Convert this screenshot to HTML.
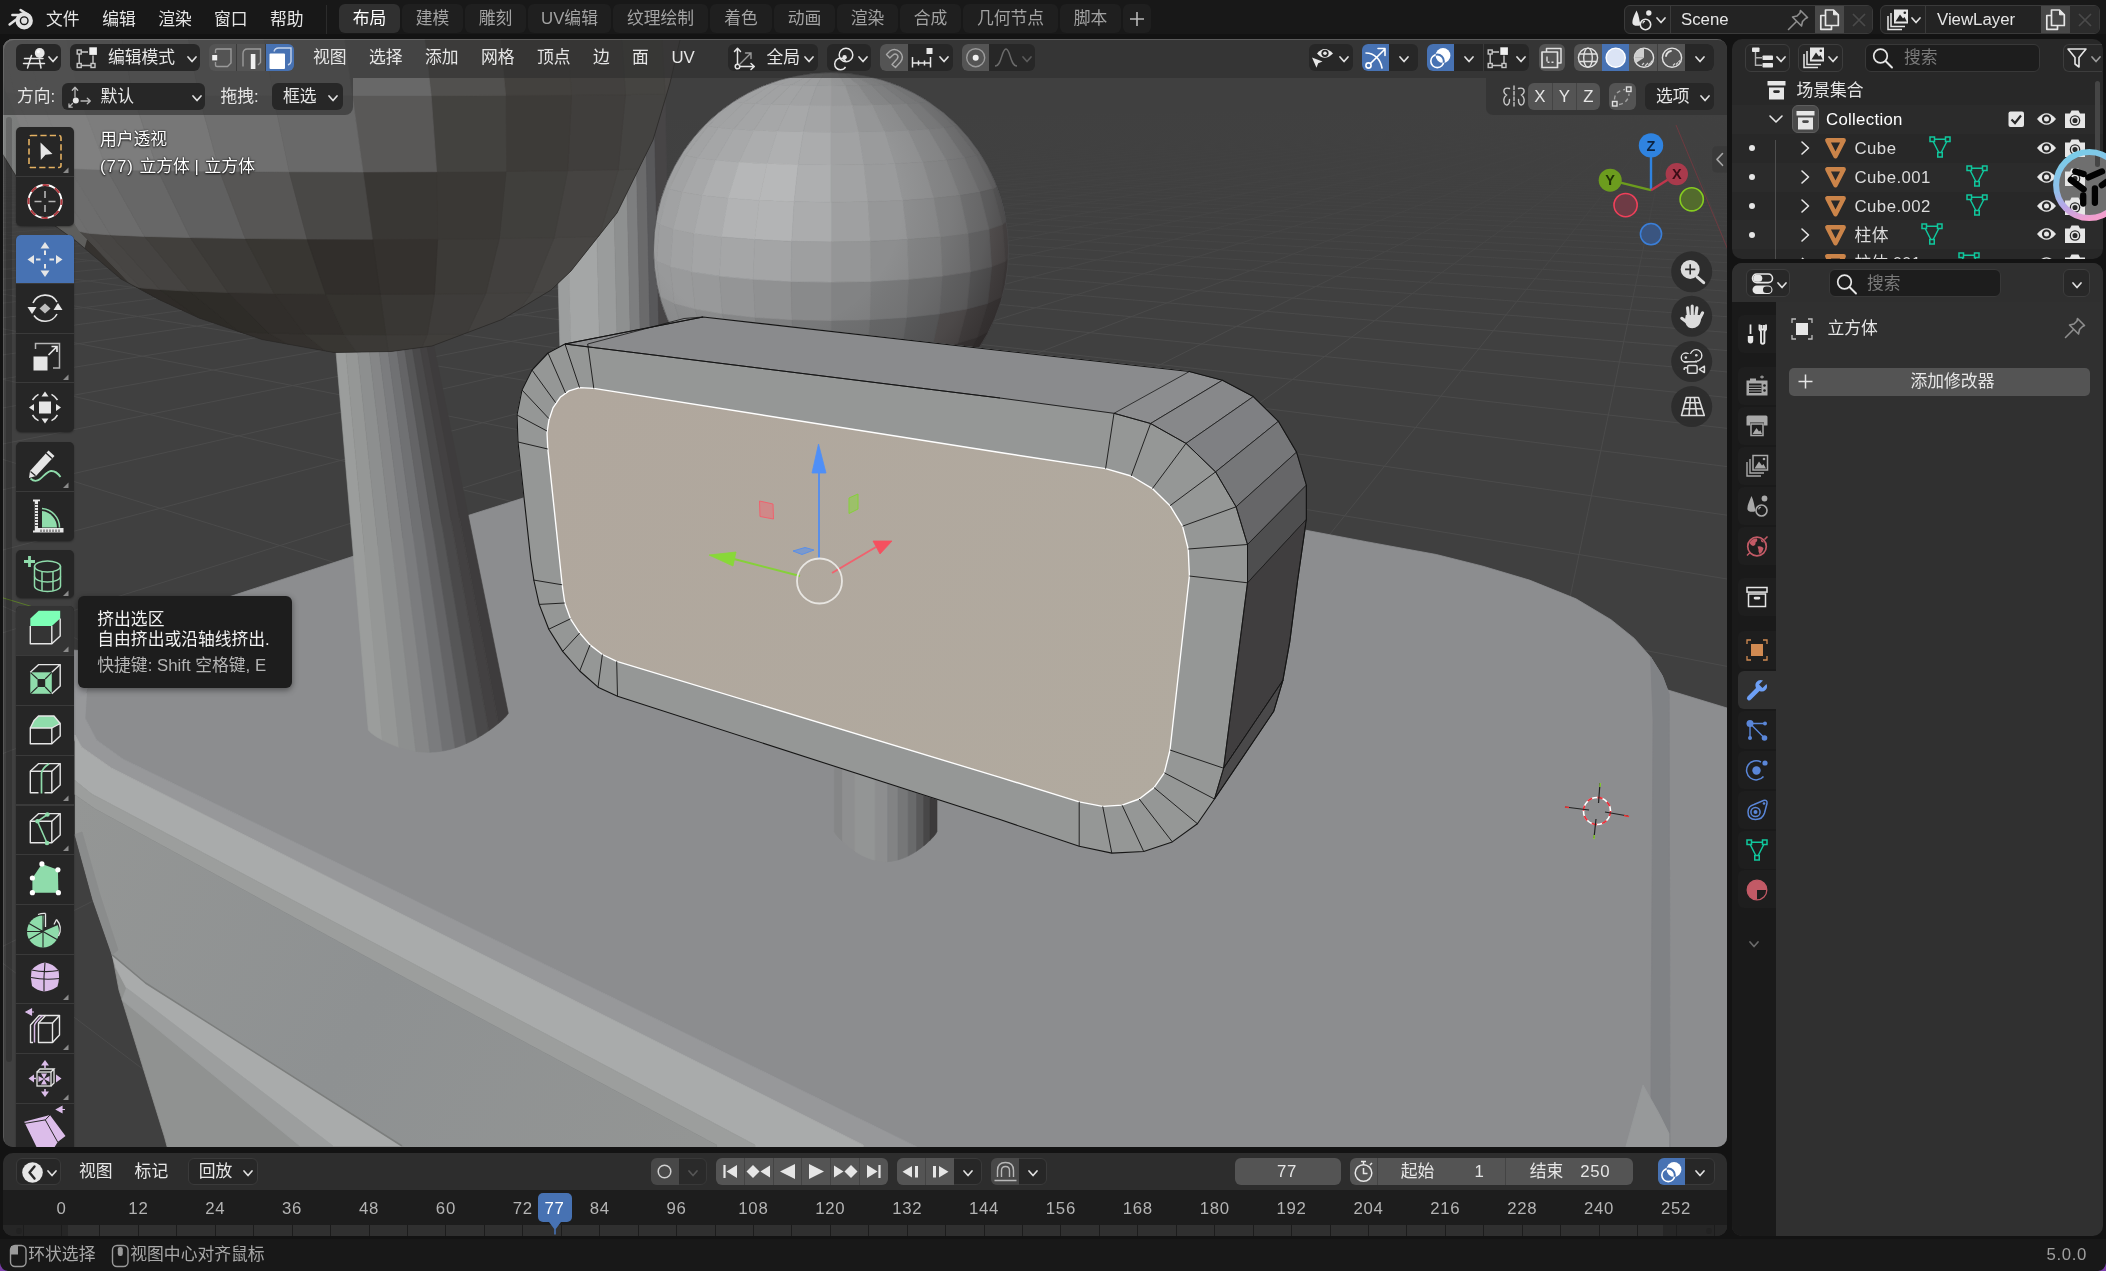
<!DOCTYPE html>
<html><head><meta charset="utf-8"><title>Blender</title>
<style>
html,body{margin:0;padding:0;background:#131313;width:2106px;height:1271px;overflow:hidden}
body{position:relative;font-family:"Liberation Sans","Noto Sans CJK SC",sans-serif;color:#e6e6e6;font-size:16.8px;line-height:1}
div,span{box-sizing:border-box}
#root{position:absolute;left:0;top:0;width:2106px;height:1271px;will-change:transform}
.abs{position:absolute}
.t{position:absolute;white-space:nowrap;line-height:20px;height:20px}
svg{display:block;overflow:visible}
#topbar{position:absolute;left:0;top:0;width:2106px;height:34px;background:#181818}
#topbar .m{position:absolute;top:9px;color:#e4e4e4}
.tab{position:absolute;top:4px;height:29px;border-radius:6px;background:#1f1f1f;color:#a2a2a2;text-align:center;line-height:30px}
.tab.on{background:#303030;color:#fff}
#v3d{position:absolute;left:3px;top:39px;width:1724px;height:1108px;border-radius:10px;overflow:hidden;background:#404040}
#v3d:after{content:'';position:absolute;left:0;top:0;right:0;bottom:0;border-radius:10px;box-shadow:inset 1px 1px 0 rgba(255,255,255,0.13);pointer-events:none}
#v3d>svg.scene{position:absolute;left:-3px;top:-39px}
.hdr{position:absolute;background:rgba(50,50,50,0.86)}
.btn{position:absolute;background:#272727;border:1px solid #3a3a3a;border-radius:6px;height:28px}
.btn.l{background:#545454;border-color:#545454}
.btn.b{background:#4772b3;border-color:#4772b3}
.tool{position:absolute;left:13px;width:58px;background:#232323}
.arr{position:absolute;width:9px;height:6px}
</style></head><body>
<div id="root">
<div id="topbar">
<svg class="abs" style="left:0;top:0" width="40" height="38" viewBox="0 0 40 38"><g stroke="#e2e2e2" stroke-width="2.5" stroke-linecap="round" fill="none"><path d="M20.6 10 L28.3 14.9"/><path d="M12.4 15.1 L23 15.1"/><path d="M9.6 24.5 L20.5 16.2"/></g><circle cx="24.2" cy="20.7" r="6.6" fill="#181818" stroke="#e2e2e2" stroke-width="4.2"/><circle cx="24.2" cy="20.7" r="3.1" fill="#e2e2e2"/></svg>
<span class="t" style="left:46px;top:10px;color:#e6e6e6">文件</span>
<span class="t" style="left:102.2px;top:10px;color:#e6e6e6">编辑</span>
<span class="t" style="left:158.2px;top:10px;color:#e6e6e6">渲染</span>
<span class="t" style="left:214px;top:10px;color:#e6e6e6">窗口</span>
<span class="t" style="left:270px;top:10px;color:#e6e6e6">帮助</span>
<div class="abs" style="left:326px;top:5px;width:1px;height:29px;background:#2c2c2c"></div>
<div class="tab on" style="left:339px;width:61px">布局</div>
<div class="tab" style="left:402px;width:61px">建模</div>
<div class="tab" style="left:465px;width:61px">雕刻</div>
<div class="tab" style="left:528px;width:83px">UV编辑</div>
<div class="tab" style="left:613px;width:95px">纹理绘制</div>
<div class="tab" style="left:710px;width:62px">着色</div>
<div class="tab" style="left:774px;width:61px">动画</div>
<div class="tab" style="left:837px;width:61px">渲染</div>
<div class="tab" style="left:900px;width:61px">合成</div>
<div class="tab" style="left:963px;width:95px">几何节点</div>
<div class="tab" style="left:1060px;width:61px">脚本</div>
<div class="tab" style="left:1123px;width:28px"></div>
<svg class="abs" style="left:1128px;top:10px" width="18" height="18" viewBox="0 0 18 18"><path d="M9 2 V16 M2 9 H16" stroke="#b8b8b8" stroke-width="1.6" fill="none"/></svg>
<div class="abs" style="left:1624px;top:5px;width:249px;height:29px;background:#232323;border:1px solid #3a3a3a;border-radius:6px"></div>
<div class="abs" style="left:1670px;top:6px;width:1px;height:27px;background:#3a3a3a"></div>
<svg class="abs" style="left:1630px;top:8px" width="26" height="24" viewBox="0 0 26 24"><path d="M6.5 2.5 C4 8 2 12 2.5 15.5 C3 18 8 18.5 10.5 17 C9.5 13 9 7 6.5 2.5Z" fill="#e6e6e6"/><circle cx="18.8" cy="5" r="2.7" fill="#e6e6e6"/><circle cx="15.5" cy="16.5" r="5.2" fill="#232323" stroke="#e6e6e6" stroke-width="1.6"/><path d="M12.8 15.3 A3 3 0 0 1 15 13.2" stroke="#e6e6e6" stroke-width="1.2" fill="none"/></svg>
<svg class="abs" style="left:1656px;top:17px" width="10" height="7.5" viewBox="0 0 10 7.5"><path d="M1 1 L5.0 5.5 L9 1" stroke="#e0e0e0" stroke-width="1.7" fill="none" stroke-linecap="round" stroke-linejoin="round"/></svg>
<span class="t" style="left:1681px;top:10px;color:#e6e6e6">Scene</span>
<svg class="abs" style="left:1786px;top:8px" width="24" height="24" viewBox="0 0 24 24"><g fill="none" stroke="#8e8e8e" stroke-width="1.6" stroke-linejoin="round" stroke-linecap="round"><path d="M14.5 2.5 L21.5 9.5 L19.5 10.5 L16.5 13.5 L15.5 18 L6.5 9 L11 8 L14 5 Z"/><path d="M10.5 13.5 L2.5 21.5"/></g></svg>
<div class="abs" style="left:1815px;top:6px;width:29px;height:27px;background:#484848"></div>
<svg class="abs" style="left:1818px;top:8px" width="24" height="24" viewBox="0 0 24 24"><g fill="none" stroke="#e6e6e6" stroke-width="1.7" stroke-linejoin="round"><path d="M7 7.500 H2.800 V21.300 H13.500 V17.800"/><path d="M7.500 2 H15.500 L20.300 6.800 V17.500 H7.500 Z"/><path d="M15.500 2 V6.800 H20.300 Z" fill="#e6e6e6" stroke-width="1"/></g></svg>
<div class="abs" style="left:1844px;top:6px;width:28px;height:27px;background:#2c2c2c;border-radius:0 5px 5px 0"></div>
<svg class="abs" style="left:1851px;top:12px" width="16" height="16" viewBox="0 0 16 16"><path d="M2 2 L14 14 M14 2 L2 14" stroke="#4a4a4a" stroke-width="1.7"/></svg>
<div class="abs" style="left:1880px;top:5px;width:220px;height:29px;background:#232323;border:1px solid #3a3a3a;border-radius:6px"></div>
<div class="abs" style="left:1925px;top:6px;width:1px;height:27px;background:#3a3a3a"></div>
<svg class="abs" style="left:1885px;top:8px" width="26" height="24" viewBox="0 0 26 24"><g fill="none" stroke="#e6e6e6" stroke-width="1.5"><path d="M3 8 V21.5 H17"/><path d="M6 5 V18.5 H20"/></g><rect x="9" y="1.5" width="14" height="14" fill="#e6e6e6"/><path d="M10.5 13.5 L15 6.5 L18 10.5 L19.5 9 L21.8 13.5Z" fill="#232323"/><circle cx="19.8" cy="4.8" r="1.3" fill="#232323"/></svg>
<svg class="abs" style="left:1911px;top:17px" width="10" height="7.5" viewBox="0 0 10 7.5"><path d="M1 1 L5.0 5.5 L9 1" stroke="#e0e0e0" stroke-width="1.7" fill="none" stroke-linecap="round" stroke-linejoin="round"/></svg>
<span class="t" style="left:1937px;top:10px;color:#e6e6e6">ViewLayer</span>
<div class="abs" style="left:2041px;top:6px;width:29px;height:27px;background:#484848"></div>
<svg class="abs" style="left:2044px;top:8px" width="24" height="24" viewBox="0 0 24 24"><g fill="none" stroke="#e6e6e6" stroke-width="1.7" stroke-linejoin="round"><path d="M7 7.500 H2.800 V21.300 H13.500 V17.800"/><path d="M7.500 2 H15.500 L20.300 6.800 V17.500 H7.500 Z"/><path d="M15.500 2 V6.800 H20.300 Z" fill="#e6e6e6" stroke-width="1"/></g></svg>
<div class="abs" style="left:2070px;top:6px;width:29px;height:27px;background:#2c2c2c;border-radius:0 5px 5px 0"></div>
<svg class="abs" style="left:2077px;top:12px" width="16" height="16" viewBox="0 0 16 16"><path d="M2 2 L14 14 M14 2 L2 14" stroke="#4a4a4a" stroke-width="1.7"/></svg>
</div>
<div id="v3d">
<svg class="scene" width="2106" height="1271" viewBox="0 0 2106 1271">
<rect x="0" y="30" width="1740" height="1125" fill="#404040"/>
<g opacity="0.8"><line x1="-1130.0" y1="107.0" x2="-5888.2" y2="1200.0" stroke="#4e4e4e" stroke-width="1" opacity="1.00"/><line x1="-1130.0" y1="107.0" x2="-4854.2" y2="1200.0" stroke="#4e4e4e" stroke-width="1" opacity="1.00"/><line x1="-1130.0" y1="107.0" x2="-3820.2" y2="1200.0" stroke="#4e4e4e" stroke-width="1" opacity="1.00"/><line x1="-1130.0" y1="107.0" x2="-2786.1" y2="1200.0" stroke="#4e4e4e" stroke-width="1" opacity="1.00"/><line x1="-1130.0" y1="107.0" x2="-1752.1" y2="1200.0" stroke="#4e4e4e" stroke-width="1" opacity="1.00"/><line x1="-1130.0" y1="107.0" x2="-718.1" y2="1200.0" stroke="#4e4e4e" stroke-width="1" opacity="1.00"/><line x1="-1130.0" y1="107.0" x2="316.0" y2="1200.0" stroke="#4e4e4e" stroke-width="1" opacity="1.00"/><line x1="-1130.0" y1="107.0" x2="1350.0" y2="1200.0" stroke="#4e4e4e" stroke-width="1" opacity="1.00"/><line x1="-1130.0" y1="107.0" x2="2384.0" y2="1200.0" stroke="#4e4e4e" stroke-width="1" opacity="1.00"/><line x1="-1130.0" y1="107.0" x2="3418.0" y2="1200.0" stroke="#4e4e4e" stroke-width="1" opacity="1.00"/><line x1="-1130.0" y1="107.0" x2="4452.1" y2="1200.0" stroke="#4e4e4e" stroke-width="1" opacity="1.00"/><line x1="-1130.0" y1="107.0" x2="5486.1" y2="1200.0" stroke="#4e4e4e" stroke-width="1" opacity="1.00"/><line x1="-1130.0" y1="107.0" x2="6520.1" y2="1200.0" stroke="#4e4e4e" stroke-width="1" opacity="1.00"/><line x1="-1130.0" y1="107.0" x2="7554.1" y2="1200.0" stroke="#4e4e4e" stroke-width="1" opacity="1.00"/><line x1="-1130.0" y1="107.0" x2="8588.2" y2="1200.0" stroke="#4e4e4e" stroke-width="1" opacity="1.00"/><line x1="-1130.0" y1="107.0" x2="9622.2" y2="1200.0" stroke="#4e4e4e" stroke-width="1" opacity="1.00"/><line x1="-1130.0" y1="107.0" x2="10656.2" y2="1200.0" stroke="#4e4e4e" stroke-width="1" opacity="1.00"/><line x1="-1130.0" y1="107.0" x2="11690.2" y2="1200.0" stroke="#4e4e4e" stroke-width="1" opacity="1.00"/><line x1="-1130.0" y1="107.0" x2="12724.3" y2="1200.0" stroke="#4e4e4e" stroke-width="1" opacity="1.00"/><line x1="-1130.0" y1="107.0" x2="13758.3" y2="1200.0" stroke="#4e4e4e" stroke-width="1" opacity="0.98"/><line x1="-1130.0" y1="107.0" x2="14792.3" y2="1200.0" stroke="#4e4e4e" stroke-width="1" opacity="0.96"/><line x1="-1130.0" y1="107.0" x2="15826.4" y2="1200.0" stroke="#4e4e4e" stroke-width="1" opacity="0.94"/><line x1="-1130.0" y1="107.0" x2="16860.4" y2="1200.0" stroke="#4e4e4e" stroke-width="1" opacity="0.92"/><line x1="-1130.0" y1="107.0" x2="17894.4" y2="1200.0" stroke="#4e4e4e" stroke-width="1" opacity="0.90"/><line x1="-1130.0" y1="107.0" x2="18928.4" y2="1200.0" stroke="#4e4e4e" stroke-width="1" opacity="0.88"/><line x1="-1130.0" y1="107.0" x2="19962.5" y2="1200.0" stroke="#4e4e4e" stroke-width="1" opacity="0.86"/><line x1="-1130.0" y1="107.0" x2="20996.5" y2="1200.0" stroke="#4e4e4e" stroke-width="1" opacity="0.84"/><line x1="-1130.0" y1="107.0" x2="22030.5" y2="1200.0" stroke="#4e4e4e" stroke-width="1" opacity="0.82"/><line x1="-1130.0" y1="107.0" x2="23064.5" y2="1200.0" stroke="#4e4e4e" stroke-width="1" opacity="0.80"/><line x1="-1130.0" y1="107.0" x2="24098.6" y2="1200.0" stroke="#4e4e4e" stroke-width="1" opacity="0.78"/><line x1="-1130.0" y1="107.0" x2="25132.6" y2="1200.0" stroke="#4e4e4e" stroke-width="1" opacity="0.76"/><line x1="-1130.0" y1="107.0" x2="26166.6" y2="1200.0" stroke="#4e4e4e" stroke-width="1" opacity="0.74"/><line x1="-1130.0" y1="107.0" x2="27200.6" y2="1200.0" stroke="#4e4e4e" stroke-width="1" opacity="0.72"/><line x1="-1130.0" y1="107.0" x2="28234.7" y2="1200.0" stroke="#4e4e4e" stroke-width="1" opacity="0.70"/><line x1="-1130.0" y1="107.0" x2="29268.7" y2="1200.0" stroke="#4e4e4e" stroke-width="1" opacity="0.68"/><line x1="-1130.0" y1="107.0" x2="30302.7" y2="1200.0" stroke="#4e4e4e" stroke-width="1" opacity="0.66"/><line x1="-1130.0" y1="107.0" x2="31336.8" y2="1200.0" stroke="#4e4e4e" stroke-width="1" opacity="0.64"/><line x1="-1130.0" y1="107.0" x2="32370.8" y2="1200.0" stroke="#4e4e4e" stroke-width="1" opacity="0.62"/><line x1="-1130.0" y1="107.0" x2="33404.8" y2="1200.0" stroke="#4e4e4e" stroke-width="1" opacity="0.60"/><line x1="-1130.0" y1="107.0" x2="34438.8" y2="1200.0" stroke="#4e4e4e" stroke-width="1" opacity="0.58"/><line x1="-1130.0" y1="107.0" x2="35472.9" y2="1200.0" stroke="#4e4e4e" stroke-width="1" opacity="0.56"/><line x1="-1130.0" y1="107.0" x2="36506.9" y2="1200.0" stroke="#4e4e4e" stroke-width="1" opacity="0.54"/><line x1="-1130.0" y1="107.0" x2="37540.9" y2="1200.0" stroke="#4e4e4e" stroke-width="1" opacity="0.52"/><line x1="-1130.0" y1="107.0" x2="38574.9" y2="1200.0" stroke="#4e4e4e" stroke-width="1" opacity="0.50"/><line x1="-1130.0" y1="107.0" x2="39609.0" y2="1200.0" stroke="#4e4e4e" stroke-width="1" opacity="0.48"/><line x1="-1130.0" y1="107.0" x2="40643.0" y2="1200.0" stroke="#4e4e4e" stroke-width="1" opacity="0.46"/><line x1="-1130.0" y1="107.0" x2="41677.0" y2="1200.0" stroke="#4e4e4e" stroke-width="1" opacity="0.44"/><line x1="-1130.0" y1="107.0" x2="42711.1" y2="1200.0" stroke="#4e4e4e" stroke-width="1" opacity="0.42"/><line x1="-1130.0" y1="107.0" x2="43745.1" y2="1200.0" stroke="#4e4e4e" stroke-width="1" opacity="0.40"/><line x1="-1130.0" y1="107.0" x2="44779.1" y2="1200.0" stroke="#4e4e4e" stroke-width="1" opacity="0.38"/><line x1="-1130.0" y1="107.0" x2="45813.1" y2="1200.0" stroke="#4e4e4e" stroke-width="1" opacity="0.36"/><line x1="-1130.0" y1="107.0" x2="46847.2" y2="1200.0" stroke="#4e4e4e" stroke-width="1" opacity="0.34"/><line x1="-1130.0" y1="107.0" x2="47881.2" y2="1200.0" stroke="#4e4e4e" stroke-width="1" opacity="0.32"/><line x1="-1130.0" y1="107.0" x2="48915.2" y2="1200.0" stroke="#4e4e4e" stroke-width="1" opacity="0.30"/><line x1="-1130.0" y1="107.0" x2="49949.2" y2="1200.0" stroke="#4e4e4e" stroke-width="1" opacity="0.28"/><line x1="-1130.0" y1="107.0" x2="50983.3" y2="1200.0" stroke="#4e4e4e" stroke-width="1" opacity="0.26"/><line x1="-1130.0" y1="107.0" x2="52017.3" y2="1200.0" stroke="#4e4e4e" stroke-width="1" opacity="0.25"/><line x1="-1130.0" y1="107.0" x2="53051.3" y2="1200.0" stroke="#4e4e4e" stroke-width="1" opacity="0.25"/><line x1="-1130.0" y1="107.0" x2="54085.3" y2="1200.0" stroke="#4e4e4e" stroke-width="1" opacity="0.25"/><line x1="-1130.0" y1="107.0" x2="55119.4" y2="1200.0" stroke="#4e4e4e" stroke-width="1" opacity="0.25"/><line x1="-1130.0" y1="107.0" x2="56153.4" y2="1200.0" stroke="#4e4e4e" stroke-width="1" opacity="0.25"/><line x1="-1130.0" y1="107.0" x2="57187.4" y2="1200.0" stroke="#4e4e4e" stroke-width="1" opacity="0.25"/><line x1="-1130.0" y1="107.0" x2="58221.5" y2="1200.0" stroke="#4e4e4e" stroke-width="1" opacity="0.25"/><line x1="-1130.0" y1="107.0" x2="59255.5" y2="1200.0" stroke="#4e4e4e" stroke-width="1" opacity="0.25"/><line x1="-1130.0" y1="107.0" x2="60289.5" y2="1200.0" stroke="#4e4e4e" stroke-width="1" opacity="0.25"/><line x1="-1130.0" y1="107.0" x2="61323.5" y2="1200.0" stroke="#4e4e4e" stroke-width="1" opacity="0.25"/><line x1="-1130.0" y1="107.0" x2="62357.6" y2="1200.0" stroke="#4e4e4e" stroke-width="1" opacity="0.25"/><line x1="-1130.0" y1="107.0" x2="63391.6" y2="1200.0" stroke="#4e4e4e" stroke-width="1" opacity="0.25"/><line x1="-1130.0" y1="107.0" x2="64425.6" y2="1200.0" stroke="#4e4e4e" stroke-width="1" opacity="0.25"/><line x1="-1130.0" y1="107.0" x2="65459.6" y2="1200.0" stroke="#4e4e4e" stroke-width="1" opacity="0.25"/><line x1="-1130.0" y1="107.0" x2="66493.7" y2="1200.0" stroke="#4e4e4e" stroke-width="1" opacity="0.25"/><line x1="-1130.0" y1="107.0" x2="67527.7" y2="1200.0" stroke="#4e4e4e" stroke-width="1" opacity="0.25"/><line x1="-1130.0" y1="107.0" x2="68561.7" y2="1200.0" stroke="#4e4e4e" stroke-width="1" opacity="0.25"/><line x1="-1130.0" y1="107.0" x2="69595.7" y2="1200.0" stroke="#4e4e4e" stroke-width="1" opacity="0.25"/><line x1="-1130.0" y1="107.0" x2="70629.8" y2="1200.0" stroke="#4e4e4e" stroke-width="1" opacity="0.25"/><line x1="-1130.0" y1="107.0" x2="71663.8" y2="1200.0" stroke="#4e4e4e" stroke-width="1" opacity="0.25"/><line x1="-1130.0" y1="107.0" x2="72697.8" y2="1200.0" stroke="#4e4e4e" stroke-width="1" opacity="0.25"/><line x1="-1130.0" y1="107.0" x2="73731.9" y2="1200.0" stroke="#4e4e4e" stroke-width="1" opacity="0.25"/><line x1="-1130.0" y1="107.0" x2="74765.9" y2="1200.0" stroke="#4e4e4e" stroke-width="1" opacity="0.25"/><line x1="-1130.0" y1="107.0" x2="75799.9" y2="1200.0" stroke="#4e4e4e" stroke-width="1" opacity="0.25"/><line x1="-1130.0" y1="107.0" x2="76833.9" y2="1200.0" stroke="#4e4e4e" stroke-width="1" opacity="0.25"/><line x1="-1130.0" y1="107.0" x2="77868.0" y2="1200.0" stroke="#4e4e4e" stroke-width="1" opacity="0.25"/><line x1="-1130.0" y1="107.0" x2="78902.0" y2="1200.0" stroke="#4e4e4e" stroke-width="1" opacity="0.25"/><line x1="-1130.0" y1="107.0" x2="79936.0" y2="1200.0" stroke="#4e4e4e" stroke-width="1" opacity="0.25"/><line x1="-1130.0" y1="107.0" x2="80970.0" y2="1200.0" stroke="#4e4e4e" stroke-width="1" opacity="0.25"/><line x1="-1130.0" y1="107.0" x2="82004.1" y2="1200.0" stroke="#4e4e4e" stroke-width="1" opacity="0.25"/><line x1="-1130.0" y1="107.0" x2="83038.1" y2="1200.0" stroke="#4e4e4e" stroke-width="1" opacity="0.25"/><line x1="-1130.0" y1="107.0" x2="84072.1" y2="1200.0" stroke="#4e4e4e" stroke-width="1" opacity="0.25"/><line x1="-1130.0" y1="107.0" x2="85106.1" y2="1200.0" stroke="#4e4e4e" stroke-width="1" opacity="0.25"/><line x1="-1130.0" y1="107.0" x2="86140.2" y2="1200.0" stroke="#4e4e4e" stroke-width="1" opacity="0.25"/><line x1="-1130.0" y1="107.0" x2="87174.2" y2="1200.0" stroke="#4e4e4e" stroke-width="1" opacity="0.25"/><line x1="-1130.0" y1="107.0" x2="88208.2" y2="1200.0" stroke="#4e4e4e" stroke-width="1" opacity="0.25"/><line x1="-1130.0" y1="107.0" x2="89242.3" y2="1200.0" stroke="#4e4e4e" stroke-width="1" opacity="0.25"/><line x1="-1130.0" y1="107.0" x2="90276.3" y2="1200.0" stroke="#4e4e4e" stroke-width="1" opacity="0.25"/><line x1="-1130.0" y1="107.0" x2="91310.3" y2="1200.0" stroke="#4e4e4e" stroke-width="1" opacity="0.25"/><line x1="-1130.0" y1="107.0" x2="92344.3" y2="1200.0" stroke="#4e4e4e" stroke-width="1" opacity="0.25"/><line x1="-1130.0" y1="107.0" x2="93378.4" y2="1200.0" stroke="#4e4e4e" stroke-width="1" opacity="0.25"/><line x1="-1130.0" y1="107.0" x2="94412.4" y2="1200.0" stroke="#4e4e4e" stroke-width="1" opacity="0.25"/><line x1="1673.0" y1="107.0" x2="-82859.4" y2="1200.0" stroke="#4e4e4e" stroke-width="1" opacity="0.25"/><line x1="1673.0" y1="107.0" x2="-82210.9" y2="1200.0" stroke="#4e4e4e" stroke-width="1" opacity="0.25"/><line x1="1673.0" y1="107.0" x2="-81562.4" y2="1200.0" stroke="#4e4e4e" stroke-width="1" opacity="0.25"/><line x1="1673.0" y1="107.0" x2="-80913.9" y2="1200.0" stroke="#4e4e4e" stroke-width="1" opacity="0.25"/><line x1="1673.0" y1="107.0" x2="-80265.4" y2="1200.0" stroke="#4e4e4e" stroke-width="1" opacity="0.25"/><line x1="1673.0" y1="107.0" x2="-79616.9" y2="1200.0" stroke="#4e4e4e" stroke-width="1" opacity="0.25"/><line x1="1673.0" y1="107.0" x2="-78968.5" y2="1200.0" stroke="#4e4e4e" stroke-width="1" opacity="0.25"/><line x1="1673.0" y1="107.0" x2="-78320.0" y2="1200.0" stroke="#4e4e4e" stroke-width="1" opacity="0.25"/><line x1="1673.0" y1="107.0" x2="-77671.5" y2="1200.0" stroke="#4e4e4e" stroke-width="1" opacity="0.25"/><line x1="1673.0" y1="107.0" x2="-77023.0" y2="1200.0" stroke="#4e4e4e" stroke-width="1" opacity="0.25"/><line x1="1673.0" y1="107.0" x2="-76374.5" y2="1200.0" stroke="#4e4e4e" stroke-width="1" opacity="0.25"/><line x1="1673.0" y1="107.0" x2="-75726.0" y2="1200.0" stroke="#4e4e4e" stroke-width="1" opacity="0.25"/><line x1="1673.0" y1="107.0" x2="-75077.5" y2="1200.0" stroke="#4e4e4e" stroke-width="1" opacity="0.25"/><line x1="1673.0" y1="107.0" x2="-74429.1" y2="1200.0" stroke="#4e4e4e" stroke-width="1" opacity="0.25"/><line x1="1673.0" y1="107.0" x2="-73780.6" y2="1200.0" stroke="#4e4e4e" stroke-width="1" opacity="0.25"/><line x1="1673.0" y1="107.0" x2="-73132.1" y2="1200.0" stroke="#4e4e4e" stroke-width="1" opacity="0.25"/><line x1="1673.0" y1="107.0" x2="-72483.6" y2="1200.0" stroke="#4e4e4e" stroke-width="1" opacity="0.25"/><line x1="1673.0" y1="107.0" x2="-71835.1" y2="1200.0" stroke="#4e4e4e" stroke-width="1" opacity="0.25"/><line x1="1673.0" y1="107.0" x2="-71186.6" y2="1200.0" stroke="#4e4e4e" stroke-width="1" opacity="0.25"/><line x1="1673.0" y1="107.0" x2="-70538.2" y2="1200.0" stroke="#4e4e4e" stroke-width="1" opacity="0.25"/><line x1="1673.0" y1="107.0" x2="-69889.7" y2="1200.0" stroke="#4e4e4e" stroke-width="1" opacity="0.25"/><line x1="1673.0" y1="107.0" x2="-69241.2" y2="1200.0" stroke="#4e4e4e" stroke-width="1" opacity="0.25"/><line x1="1673.0" y1="107.0" x2="-68592.7" y2="1200.0" stroke="#4e4e4e" stroke-width="1" opacity="0.25"/><line x1="1673.0" y1="107.0" x2="-67944.2" y2="1200.0" stroke="#4e4e4e" stroke-width="1" opacity="0.25"/><line x1="1673.0" y1="107.0" x2="-67295.7" y2="1200.0" stroke="#4e4e4e" stroke-width="1" opacity="0.25"/><line x1="1673.0" y1="107.0" x2="-66647.3" y2="1200.0" stroke="#4e4e4e" stroke-width="1" opacity="0.25"/><line x1="1673.0" y1="107.0" x2="-65998.8" y2="1200.0" stroke="#4e4e4e" stroke-width="1" opacity="0.25"/><line x1="1673.0" y1="107.0" x2="-65350.3" y2="1200.0" stroke="#4e4e4e" stroke-width="1" opacity="0.25"/><line x1="1673.0" y1="107.0" x2="-64701.8" y2="1200.0" stroke="#4e4e4e" stroke-width="1" opacity="0.25"/><line x1="1673.0" y1="107.0" x2="-64053.3" y2="1200.0" stroke="#4e4e4e" stroke-width="1" opacity="0.25"/><line x1="1673.0" y1="107.0" x2="-63404.8" y2="1200.0" stroke="#4e4e4e" stroke-width="1" opacity="0.25"/><line x1="1673.0" y1="107.0" x2="-62756.4" y2="1200.0" stroke="#4e4e4e" stroke-width="1" opacity="0.25"/><line x1="1673.0" y1="107.0" x2="-62107.9" y2="1200.0" stroke="#4e4e4e" stroke-width="1" opacity="0.25"/><line x1="1673.0" y1="107.0" x2="-61459.4" y2="1200.0" stroke="#4e4e4e" stroke-width="1" opacity="0.25"/><line x1="1673.0" y1="107.0" x2="-60810.9" y2="1200.0" stroke="#4e4e4e" stroke-width="1" opacity="0.25"/><line x1="1673.0" y1="107.0" x2="-60162.4" y2="1200.0" stroke="#4e4e4e" stroke-width="1" opacity="0.25"/><line x1="1673.0" y1="107.0" x2="-59513.9" y2="1200.0" stroke="#4e4e4e" stroke-width="1" opacity="0.25"/><line x1="1673.0" y1="107.0" x2="-58865.5" y2="1200.0" stroke="#4e4e4e" stroke-width="1" opacity="0.25"/><line x1="1673.0" y1="107.0" x2="-58217.0" y2="1200.0" stroke="#4e4e4e" stroke-width="1" opacity="0.25"/><line x1="1673.0" y1="107.0" x2="-57568.5" y2="1200.0" stroke="#4e4e4e" stroke-width="1" opacity="0.25"/><line x1="1673.0" y1="107.0" x2="-56920.0" y2="1200.0" stroke="#4e4e4e" stroke-width="1" opacity="0.25"/><line x1="1673.0" y1="107.0" x2="-56271.5" y2="1200.0" stroke="#4e4e4e" stroke-width="1" opacity="0.25"/><line x1="1673.0" y1="107.0" x2="-55623.0" y2="1200.0" stroke="#4e4e4e" stroke-width="1" opacity="0.25"/><line x1="1673.0" y1="107.0" x2="-54974.6" y2="1200.0" stroke="#4e4e4e" stroke-width="1" opacity="0.25"/><line x1="1673.0" y1="107.0" x2="-54326.1" y2="1200.0" stroke="#4e4e4e" stroke-width="1" opacity="0.25"/><line x1="1673.0" y1="107.0" x2="-53677.6" y2="1200.0" stroke="#4e4e4e" stroke-width="1" opacity="0.25"/><line x1="1673.0" y1="107.0" x2="-53029.1" y2="1200.0" stroke="#4e4e4e" stroke-width="1" opacity="0.25"/><line x1="1673.0" y1="107.0" x2="-52380.6" y2="1200.0" stroke="#4e4e4e" stroke-width="1" opacity="0.25"/><line x1="1673.0" y1="107.0" x2="-51732.1" y2="1200.0" stroke="#4e4e4e" stroke-width="1" opacity="0.25"/><line x1="1673.0" y1="107.0" x2="-51083.6" y2="1200.0" stroke="#4e4e4e" stroke-width="1" opacity="0.25"/><line x1="1673.0" y1="107.0" x2="-50435.2" y2="1200.0" stroke="#4e4e4e" stroke-width="1" opacity="0.25"/><line x1="1673.0" y1="107.0" x2="-49786.7" y2="1200.0" stroke="#4e4e4e" stroke-width="1" opacity="0.25"/><line x1="1673.0" y1="107.0" x2="-49138.2" y2="1200.0" stroke="#4e4e4e" stroke-width="1" opacity="0.26"/><line x1="1673.0" y1="107.0" x2="-48489.7" y2="1200.0" stroke="#4e4e4e" stroke-width="1" opacity="0.27"/><line x1="1673.0" y1="107.0" x2="-47841.2" y2="1200.0" stroke="#4e4e4e" stroke-width="1" opacity="0.28"/><line x1="1673.0" y1="107.0" x2="-47192.7" y2="1200.0" stroke="#4e4e4e" stroke-width="1" opacity="0.29"/><line x1="1673.0" y1="107.0" x2="-46544.3" y2="1200.0" stroke="#4e4e4e" stroke-width="1" opacity="0.30"/><line x1="1673.0" y1="107.0" x2="-45895.8" y2="1200.0" stroke="#4e4e4e" stroke-width="1" opacity="0.32"/><line x1="1673.0" y1="107.0" x2="-45247.3" y2="1200.0" stroke="#4e4e4e" stroke-width="1" opacity="0.33"/><line x1="1673.0" y1="107.0" x2="-44598.8" y2="1200.0" stroke="#4e4e4e" stroke-width="1" opacity="0.34"/><line x1="1673.0" y1="107.0" x2="-43950.3" y2="1200.0" stroke="#4e4e4e" stroke-width="1" opacity="0.35"/><line x1="1673.0" y1="107.0" x2="-43301.8" y2="1200.0" stroke="#4e4e4e" stroke-width="1" opacity="0.36"/><line x1="1673.0" y1="107.0" x2="-42653.4" y2="1200.0" stroke="#4e4e4e" stroke-width="1" opacity="0.38"/><line x1="1673.0" y1="107.0" x2="-42004.9" y2="1200.0" stroke="#4e4e4e" stroke-width="1" opacity="0.39"/><line x1="1673.0" y1="107.0" x2="-41356.4" y2="1200.0" stroke="#4e4e4e" stroke-width="1" opacity="0.40"/><line x1="1673.0" y1="107.0" x2="-40707.9" y2="1200.0" stroke="#4e4e4e" stroke-width="1" opacity="0.41"/><line x1="1673.0" y1="107.0" x2="-40059.4" y2="1200.0" stroke="#4e4e4e" stroke-width="1" opacity="0.42"/><line x1="1673.0" y1="107.0" x2="-39410.9" y2="1200.0" stroke="#4e4e4e" stroke-width="1" opacity="0.44"/><line x1="1673.0" y1="107.0" x2="-38762.5" y2="1200.0" stroke="#4e4e4e" stroke-width="1" opacity="0.45"/><line x1="1673.0" y1="107.0" x2="-38114.0" y2="1200.0" stroke="#4e4e4e" stroke-width="1" opacity="0.46"/><line x1="1673.0" y1="107.0" x2="-37465.5" y2="1200.0" stroke="#4e4e4e" stroke-width="1" opacity="0.47"/><line x1="1673.0" y1="107.0" x2="-36817.0" y2="1200.0" stroke="#4e4e4e" stroke-width="1" opacity="0.48"/><line x1="1673.0" y1="107.0" x2="-36168.5" y2="1200.0" stroke="#4e4e4e" stroke-width="1" opacity="0.50"/><line x1="1673.0" y1="107.0" x2="-35520.0" y2="1200.0" stroke="#4e4e4e" stroke-width="1" opacity="0.51"/><line x1="1673.0" y1="107.0" x2="-34871.6" y2="1200.0" stroke="#4e4e4e" stroke-width="1" opacity="0.52"/><line x1="1673.0" y1="107.0" x2="-34223.1" y2="1200.0" stroke="#4e4e4e" stroke-width="1" opacity="0.53"/><line x1="1673.0" y1="107.0" x2="-33574.6" y2="1200.0" stroke="#4e4e4e" stroke-width="1" opacity="0.54"/><line x1="1673.0" y1="107.0" x2="-32926.1" y2="1200.0" stroke="#4e4e4e" stroke-width="1" opacity="0.56"/><line x1="1673.0" y1="107.0" x2="-32277.6" y2="1200.0" stroke="#4e4e4e" stroke-width="1" opacity="0.57"/><line x1="1673.0" y1="107.0" x2="-31629.1" y2="1200.0" stroke="#4e4e4e" stroke-width="1" opacity="0.58"/><line x1="1673.0" y1="107.0" x2="-30980.7" y2="1200.0" stroke="#4e4e4e" stroke-width="1" opacity="0.59"/><line x1="1673.0" y1="107.0" x2="-30332.2" y2="1200.0" stroke="#4e4e4e" stroke-width="1" opacity="0.60"/><line x1="1673.0" y1="107.0" x2="-29683.7" y2="1200.0" stroke="#4e4e4e" stroke-width="1" opacity="0.62"/><line x1="1673.0" y1="107.0" x2="-29035.2" y2="1200.0" stroke="#4e4e4e" stroke-width="1" opacity="0.63"/><line x1="1673.0" y1="107.0" x2="-28386.7" y2="1200.0" stroke="#4e4e4e" stroke-width="1" opacity="0.64"/><line x1="1673.0" y1="107.0" x2="-27738.2" y2="1200.0" stroke="#4e4e4e" stroke-width="1" opacity="0.65"/><line x1="1673.0" y1="107.0" x2="-27089.7" y2="1200.0" stroke="#4e4e4e" stroke-width="1" opacity="0.66"/><line x1="1673.0" y1="107.0" x2="-26441.3" y2="1200.0" stroke="#4e4e4e" stroke-width="1" opacity="0.68"/><line x1="1673.0" y1="107.0" x2="-25792.8" y2="1200.0" stroke="#4e4e4e" stroke-width="1" opacity="0.69"/><line x1="1673.0" y1="107.0" x2="-25144.3" y2="1200.0" stroke="#4e4e4e" stroke-width="1" opacity="0.70"/><line x1="1673.0" y1="107.0" x2="-24495.8" y2="1200.0" stroke="#4e4e4e" stroke-width="1" opacity="0.71"/><line x1="1673.0" y1="107.0" x2="-23847.3" y2="1200.0" stroke="#4e4e4e" stroke-width="1" opacity="0.72"/><line x1="1673.0" y1="107.0" x2="-23198.8" y2="1200.0" stroke="#4e4e4e" stroke-width="1" opacity="0.74"/><line x1="1673.0" y1="107.0" x2="-22550.4" y2="1200.0" stroke="#4e4e4e" stroke-width="1" opacity="0.75"/><line x1="1673.0" y1="107.0" x2="-21901.9" y2="1200.0" stroke="#4e4e4e" stroke-width="1" opacity="0.76"/><line x1="1673.0" y1="107.0" x2="-21253.4" y2="1200.0" stroke="#4e4e4e" stroke-width="1" opacity="0.77"/><line x1="1673.0" y1="107.0" x2="-20604.9" y2="1200.0" stroke="#4e4e4e" stroke-width="1" opacity="0.78"/><line x1="1673.0" y1="107.0" x2="-19956.4" y2="1200.0" stroke="#4e4e4e" stroke-width="1" opacity="0.80"/><line x1="1673.0" y1="107.0" x2="-19307.9" y2="1200.0" stroke="#4e4e4e" stroke-width="1" opacity="0.81"/><line x1="1673.0" y1="107.0" x2="-18659.5" y2="1200.0" stroke="#4e4e4e" stroke-width="1" opacity="0.82"/><line x1="1673.0" y1="107.0" x2="-18011.0" y2="1200.0" stroke="#4e4e4e" stroke-width="1" opacity="0.83"/><line x1="1673.0" y1="107.0" x2="-17362.5" y2="1200.0" stroke="#4e4e4e" stroke-width="1" opacity="0.84"/><line x1="1673.0" y1="107.0" x2="-16714.0" y2="1200.0" stroke="#4e4e4e" stroke-width="1" opacity="0.86"/><line x1="1673.0" y1="107.0" x2="-16065.5" y2="1200.0" stroke="#4e4e4e" stroke-width="1" opacity="0.87"/><line x1="1673.0" y1="107.0" x2="-15417.0" y2="1200.0" stroke="#4e4e4e" stroke-width="1" opacity="0.88"/><line x1="1673.0" y1="107.0" x2="-14768.6" y2="1200.0" stroke="#4e4e4e" stroke-width="1" opacity="0.89"/><line x1="1673.0" y1="107.0" x2="-14120.1" y2="1200.0" stroke="#4e4e4e" stroke-width="1" opacity="0.90"/><line x1="1673.0" y1="107.0" x2="-13471.6" y2="1200.0" stroke="#4e4e4e" stroke-width="1" opacity="0.92"/><line x1="1673.0" y1="107.0" x2="-12823.1" y2="1200.0" stroke="#4e4e4e" stroke-width="1" opacity="0.93"/><line x1="1673.0" y1="107.0" x2="-12174.6" y2="1200.0" stroke="#4e4e4e" stroke-width="1" opacity="0.94"/><line x1="1673.0" y1="107.0" x2="-11526.1" y2="1200.0" stroke="#4e4e4e" stroke-width="1" opacity="0.95"/><line x1="1673.0" y1="107.0" x2="-10877.7" y2="1200.0" stroke="#4e4e4e" stroke-width="1" opacity="0.96"/><line x1="1673.0" y1="107.0" x2="-10229.2" y2="1200.0" stroke="#4e4e4e" stroke-width="1" opacity="0.98"/><line x1="1673.0" y1="107.0" x2="-9580.7" y2="1200.0" stroke="#4e4e4e" stroke-width="1" opacity="0.99"/><line x1="1673.0" y1="107.0" x2="-8932.2" y2="1200.0" stroke="#4e4e4e" stroke-width="1" opacity="1.00"/><line x1="1673.0" y1="107.0" x2="-8283.7" y2="1200.0" stroke="#4e4e4e" stroke-width="1" opacity="1.00"/><line x1="1673.0" y1="107.0" x2="-7635.2" y2="1200.0" stroke="#4e4e4e" stroke-width="1" opacity="1.00"/><line x1="1673.0" y1="107.0" x2="-6986.8" y2="1200.0" stroke="#4e4e4e" stroke-width="1" opacity="1.00"/><line x1="1673.0" y1="107.0" x2="-6338.3" y2="1200.0" stroke="#4e4e4e" stroke-width="1" opacity="1.00"/><line x1="1673.0" y1="107.0" x2="-5689.8" y2="1200.0" stroke="#4e4e4e" stroke-width="1" opacity="1.00"/><line x1="1673.0" y1="107.0" x2="-5041.3" y2="1200.0" stroke="#4e4e4e" stroke-width="1" opacity="1.00"/><line x1="1673.0" y1="107.0" x2="-4392.8" y2="1200.0" stroke="#4e4e4e" stroke-width="1" opacity="1.00"/><line x1="1673.0" y1="107.0" x2="-3744.3" y2="1200.0" stroke="#4e4e4e" stroke-width="1" opacity="1.00"/><line x1="1673.0" y1="107.0" x2="-3095.8" y2="1200.0" stroke="#4e4e4e" stroke-width="1" opacity="1.00"/><line x1="1673.0" y1="107.0" x2="-2447.4" y2="1200.0" stroke="#4e4e4e" stroke-width="1" opacity="1.00"/><line x1="1673.0" y1="107.0" x2="-1798.9" y2="1200.0" stroke="#4e4e4e" stroke-width="1" opacity="1.00"/><line x1="1673.0" y1="107.0" x2="-1150.4" y2="1200.0" stroke="#4e4e4e" stroke-width="1" opacity="1.00"/><line x1="1673.0" y1="107.0" x2="-501.9" y2="1200.0" stroke="#4e4e4e" stroke-width="1" opacity="1.00"/><line x1="1673.0" y1="107.0" x2="146.6" y2="1200.0" stroke="#4e4e4e" stroke-width="1" opacity="1.00"/><line x1="1673.0" y1="107.0" x2="795.1" y2="1200.0" stroke="#4e4e4e" stroke-width="1" opacity="1.00"/><line x1="1673.0" y1="107.0" x2="1443.5" y2="1200.0" stroke="#4e4e4e" stroke-width="1" opacity="1.00"/><line x1="1673.0" y1="107.0" x2="2092.0" y2="1200.0" stroke="#4e4e4e" stroke-width="1" opacity="1.00"/><line x1="1673.0" y1="107.0" x2="2740.5" y2="1200.0" stroke="#4e4e4e" stroke-width="1" opacity="1.00"/><line x1="1673.0" y1="107.0" x2="3389.0" y2="1200.0" stroke="#4e4e4e" stroke-width="1" opacity="1.00"/><line x1="1673.0" y1="107.0" x2="4037.5" y2="1200.0" stroke="#4e4e4e" stroke-width="1" opacity="1.00"/><line x1="1673.0" y1="107.0" x2="4686.0" y2="1200.0" stroke="#4e4e4e" stroke-width="1" opacity="1.00"/><line x1="1673.0" y1="107.0" x2="5334.4" y2="1200.0" stroke="#4e4e4e" stroke-width="1" opacity="1.00"/><line x1="1673.0" y1="107.0" x2="5982.9" y2="1200.0" stroke="#4e4e4e" stroke-width="1" opacity="1.00"/></g>
<defs><linearGradient id="hz" x1="0" y1="0" x2="0" y2="1"><stop offset="0" stop-color="#404040" stop-opacity="1"/><stop offset="0.2" stop-color="#404040" stop-opacity="0.92"/><stop offset="0.55" stop-color="#404040" stop-opacity="0.55"/><stop offset="1" stop-color="#404040" stop-opacity="0"/></linearGradient></defs>
<rect x="0" y="100" width="1740" height="230" fill="url(#hz)"/>
<rect x="0" y="30" width="1740" height="71" fill="#404040"/>
<line x1="1676.0" y1="125.0" x2="1728.0" y2="250.0" stroke="#6e3a40" stroke-width="1" />
<line x1="0.0" y1="597.0" x2="40.0" y2="609.0" stroke="#5a7a2a" stroke-width="1" />
<polygon points="112.0,953.0 119.0,990.0 164.5,1137.0 168.0,1150.0 420.0,1150.0 402.0,1146.0 145.5,983.0" fill="#909291" stroke="#909291" stroke-width="0.8" stroke-linejoin="round" />
<polygon points="112.0,954.6 145.5,983.0 402.0,1146.0 333.0,1146.0 126.5,988.0 116.0,968.0" fill="#a9abab" stroke="#a9abab" stroke-width="0.8" stroke-linejoin="round" />
<polygon points="126.5,988.0 333.0,1146.0 300.0,1146.0 122.0,1000.0" fill="#9c9e9e" stroke="#9c9e9e" stroke-width="0.8" stroke-linejoin="round" />
<polygon points="1668.0,690.0 1727.0,708.0 1730.0,1150.0 1668.0,1150.0" fill="#8c8d8f" stroke="#8c8d8f" stroke-width="0.8" stroke-linejoin="round" />
<polygon points="72.0,650.0 100.0,652.0 86.6,693.0 85.0,718.0 72.0,745.0" fill="#96979a" stroke="#96979a" stroke-width="0.8" stroke-linejoin="round" />
<polygon points="86.6,693.0 100.0,652.0 140.0,627.0 234.6,595.0 351.0,557.0 468.0,515.5 517.0,500.0 700.0,440.0 1000.0,420.0 1250.0,520.0 1304.7,530.0 1366.4,541.7 1436.3,554.5 1482.9,566.2 1529.5,580.1 1576.0,598.8 1611.0,619.7 1634.3,638.4 1650.6,657.0 1662.2,675.6 1669.2,694.3 1670.0,1150.0 913.3,1150.0 913.3,1145.0 400.0,893.3 123.0,759.0 96.6,740.0 85.0,718.0" fill="#8c8d8f" stroke="#8c8d8f" stroke-width="0.8" stroke-linejoin="round" />
<polygon points="1650.6,657.0 1662.2,675.6 1669.2,694.3 1670.0,1150.0 1651.0,1150.0 1651.0,1060.0 1653.0,720.0" fill="#808285" stroke="#808285" stroke-width="0.8" stroke-linejoin="round" />
<polygon points="1643.0,1085.0 1659.0,1113.5 1669.0,1133.6 1669.0,1150.0 1625.0,1150.0" fill="#97999a" stroke="#97999a" stroke-width="0.8" stroke-linejoin="round" />
<polygon points="86.6,693.0 85.0,718.0 96.6,740.0 123.0,759.0 400.0,893.3 913.3,1145.0 922.0,1150.0 863.3,1150.0 863.3,1145.0 400.0,913.3 111.5,768.0 81.6,747.0 75.0,735.0 75.0,700.0" fill="#97989a" stroke="#97989a" stroke-width="0.8" stroke-linejoin="round" />
<polygon points="75.0,735.0 81.6,747.0 111.5,768.0 400.0,913.3 863.3,1145.0 863.3,1150.0 755.0,1150.0 755.0,1145.0 400.0,956.7 91.6,794.0 75.0,780.6 75.0,760.0" fill="#a9abab" stroke="#a9abab" stroke-width="0.8" stroke-linejoin="round" />
<polygon points="75.0,780.6 91.6,794.0 400.0,956.7 755.0,1145.0 755.0,1150.0 716.7,1150.0 716.7,1145.0 400.0,975.0 95.0,808.8 75.0,794.7" fill="#9c9e9d" stroke="#9c9e9d" stroke-width="0.8" stroke-linejoin="round" />
<defs><linearGradient id="ff" x1="75" y1="800" x2="700" y2="1140" gradientUnits="userSpaceOnUse"><stop offset="0" stop-color="#949695"/><stop offset="0.5" stop-color="#8e9192"/><stop offset="1" stop-color="#939594"/></linearGradient></defs>
<polygon points="75.0,794.7 95.0,808.8 400.0,975.0 716.7,1145.0 716.7,1150.0 410.0,1150.0 402.0,1146.0 145.5,983.0 112.0,954.6 93.0,900.0 75.0,834.6" fill="url(#ff)" />
<polyline points="112.0,954.6 145.5,983.0 402.0,1146.0" fill="none" stroke="#7c7e7d" stroke-width="1.5" stroke-linejoin="round" />
<polygon points="75.0,834.6 93.0,900.0 112.0,954.6 118.0,950.0 100.0,895.0 82.0,832.0" fill="#8a8c8c" stroke="#8a8c8c" stroke-width="0.8" stroke-linejoin="round" />
<polygon points="552.0,40.0 563.2,40.0 573.0,430.0 570.8,430.0 568.6,430.0 566.4,430.0 564.2,430.0 562.0,430.0" fill="#9c9e9e" stroke="#9c9e9e" stroke-width="0.6" stroke-linejoin="round" /><polygon points="563.2,40.0 592.3,40.0 601.6,430.0 595.9,430.0 590.2,430.0 584.4,430.0 578.7,430.0 573.0,430.0" fill="#a4a6a6" stroke="#a4a6a6" stroke-width="0.6" stroke-linejoin="round" /><polygon points="592.3,40.0 610.2,40.0 619.2,430.0 615.7,430.0 612.2,430.0 608.6,430.0 605.1,430.0 601.6,430.0" fill="#9a9c9c" stroke="#9a9c9c" stroke-width="0.6" stroke-linejoin="round" /><polygon points="610.2,40.0 623.7,40.0 632.4,430.0 629.8,430.0 627.1,430.0 624.5,430.0 621.8,430.0 619.2,430.0" fill="#8e9090" stroke="#8e9090" stroke-width="0.6" stroke-linejoin="round" /><polygon points="623.7,40.0 633.8,40.0 642.3,430.0 640.3,430.0 638.3,430.0 636.4,430.0 634.4,430.0 632.4,430.0" fill="#7d7e7f" stroke="#7d7e7f" stroke-width="0.6" stroke-linejoin="round" /><polygon points="633.8,40.0 643.8,40.0 652.2,430.0 650.2,430.0 648.2,430.0 646.3,430.0 644.3,430.0 642.3,430.0" fill="#6a6a6b" stroke="#6a6a6b" stroke-width="0.6" stroke-linejoin="round" /><polygon points="643.8,40.0 652.8,40.0 661.0,430.0 659.2,430.0 657.5,430.0 655.7,430.0 654.0,430.0 652.2,430.0" fill="#58585a" stroke="#58585a" stroke-width="0.6" stroke-linejoin="round" /><polygon points="652.8,40.0 664.0,40.0 672.0,430.0 669.8,430.0 667.6,430.0 665.4,430.0 663.2,430.0 661.0,430.0" fill="#474546" stroke="#474546" stroke-width="0.6" stroke-linejoin="round" />
<defs><clipPath id="csm"><circle cx="831" cy="250" r="177.5"/></clipPath></defs>
<g clip-path="url(#csm)"><polygon points="811.7,72.7 806.3,72.8 783.6,82.7 794.0,82.6" fill="#9e9fa0" stroke="#9e9fa0" stroke-width="0.7" stroke-linejoin="round" /><polygon points="855.7,72.8 850.3,72.7 868.0,82.6 878.4,82.7" fill="#828384" stroke="#828384" stroke-width="0.7" stroke-linejoin="round" /><polygon points="844.4,428.6 850.4,427.6 831.0,422.2 831.0,422.2" fill="#4b4848" stroke="#4b4848" stroke-width="0.7" stroke-linejoin="round" /><polygon points="811.6,427.6 817.6,428.6 831.0,422.2 831.0,422.2" fill="#4f4c4c" stroke="#4f4c4c" stroke-width="0.7" stroke-linejoin="round" /><polygon points="894.1,417.0 897.3,413.2 864.6,421.0 862.8,422.9" fill="#423f3f" stroke="#423f3f" stroke-width="0.7" stroke-linejoin="round" /><polygon points="764.7,413.2 767.9,417.0 799.2,422.9 797.4,421.0" fill="#5a5757" stroke="#5a5757" stroke-width="0.7" stroke-linejoin="round" /><polygon points="817.6,428.6 824.2,429.2 831.0,422.2 831.0,422.2" fill="#4e4b4b" stroke="#4e4b4b" stroke-width="0.7" stroke-linejoin="round" /><polygon points="837.8,429.2 844.4,428.6 831.0,422.2 831.0,422.2" fill="#4c4949" stroke="#4c4949" stroke-width="0.7" stroke-linejoin="round" /><polygon points="740.5,99.3 733.4,99.9 707.7,122.0 717.1,120.9" fill="#a0a1a2" stroke="#a0a1a2" stroke-width="0.7" stroke-linejoin="round" /><polygon points="928.6,99.9 921.5,99.3 944.9,120.9 954.3,122.0" fill="#767778" stroke="#767778" stroke-width="0.7" stroke-linejoin="round" /><polygon points="706.9,372.6 706.7,379.0 734.1,399.1 733.8,393.7" fill="#747576" stroke="#747576" stroke-width="0.7" stroke-linejoin="round" /><polygon points="955.3,379.0 955.1,372.6 928.2,393.7 927.9,399.1" fill="#3b3838" stroke="#3b3838" stroke-width="0.7" stroke-linejoin="round" /><polygon points="824.2,429.2 831.0,429.4 831.0,422.2 831.0,422.2" fill="#4d4a4a" stroke="#4d4a4a" stroke-width="0.7" stroke-linejoin="round" /><polygon points="831.0,429.4 837.8,429.2 831.0,422.2 831.0,422.2" fill="#4c4949" stroke="#4c4949" stroke-width="0.7" stroke-linejoin="round" /><polygon points="672.1,178.8 664.6,181.9 655.1,215.4 663.4,211.2" fill="#9e9fa0" stroke="#9e9fa0" stroke-width="0.7" stroke-linejoin="round" /><polygon points="997.4,181.9 989.9,178.8 998.6,211.2 1006.9,215.4" fill="#676869" stroke="#676869" stroke-width="0.7" stroke-linejoin="round" /><polygon points="806.3,72.8 801.8,72.8 774.8,82.8 783.6,82.7" fill="#9e9fa0" stroke="#9e9fa0" stroke-width="0.7" stroke-linejoin="round" /><polygon points="860.2,72.8 855.7,72.8 878.4,82.7 887.2,82.8" fill="#7f8081" stroke="#7f8081" stroke-width="0.7" stroke-linejoin="round" /><polygon points="684.5,346.7 683.8,353.6 706.7,379.0 706.9,372.6" fill="#848586" stroke="#848586" stroke-width="0.7" stroke-linejoin="round" /><polygon points="978.2,353.6 977.5,346.7 955.1,372.6 955.3,379.0" fill="#3b3838" stroke="#3b3838" stroke-width="0.7" stroke-linejoin="round" /><polygon points="767.9,417.0 773.6,420.5 802.2,424.7 799.2,422.9" fill="#595656" stroke="#595656" stroke-width="0.7" stroke-linejoin="round" /><polygon points="888.4,420.5 894.1,417.0 862.8,422.9 859.8,424.7" fill="#423f3f" stroke="#423f3f" stroke-width="0.7" stroke-linejoin="round" /><polygon points="687.0,148.6 680.6,150.8 664.6,181.9 672.1,178.8" fill="#9fa0a1" stroke="#9fa0a1" stroke-width="0.7" stroke-linejoin="round" /><polygon points="981.4,150.8 975.0,148.6 989.9,178.8 997.4,181.9" fill="#767778" stroke="#767778" stroke-width="0.7" stroke-linejoin="round" /><polygon points="923.7,404.4 927.9,399.1 897.3,413.2 894.1,417.0" fill="#3d3a3a" stroke="#3d3a3a" stroke-width="0.7" stroke-linejoin="round" /><polygon points="734.1,399.1 738.3,404.4 767.9,417.0 764.7,413.2" fill="#616263" stroke="#616263" stroke-width="0.7" stroke-linejoin="round" /><polygon points="767.9,83.0 763.3,83.3 733.4,99.9 740.5,99.3" fill="#a0a1a2" stroke="#a0a1a2" stroke-width="0.7" stroke-linejoin="round" /><polygon points="898.7,83.3 894.1,83.0 921.5,99.3 928.6,99.9" fill="#7a7b7c" stroke="#7a7b7c" stroke-width="0.7" stroke-linejoin="round" /><polygon points="667.6,316.9 666.4,323.8 683.8,353.6 684.5,346.7" fill="#8a8b8c" stroke="#8a8b8c" stroke-width="0.7" stroke-linejoin="round" /><polygon points="995.6,323.8 994.4,316.9 977.5,346.7 978.2,353.6" fill="#3e3b3b" stroke="#3e3b3b" stroke-width="0.7" stroke-linejoin="round" /><polygon points="801.8,72.8 798.4,72.9 767.9,83.0 774.8,82.8" fill="#9fa0a1" stroke="#9fa0a1" stroke-width="0.7" stroke-linejoin="round" /><polygon points="863.6,72.9 860.2,72.8 887.2,82.8 894.1,83.0" fill="#7e7f80" stroke="#7e7f80" stroke-width="0.7" stroke-linejoin="round" /><polygon points="707.7,122.0 702.7,123.3 680.6,150.8 687.0,148.6" fill="#a0a1a2" stroke="#a0a1a2" stroke-width="0.7" stroke-linejoin="round" /><polygon points="959.3,123.3 954.3,122.0 975.0,148.6 981.4,150.8" fill="#737475" stroke="#737475" stroke-width="0.7" stroke-linejoin="round" /><polygon points="773.6,420.5 781.8,423.6 806.4,426.3 802.2,424.7" fill="#575454" stroke="#575454" stroke-width="0.7" stroke-linejoin="round" /><polygon points="880.2,423.6 888.4,420.5 859.8,424.7 855.6,426.3" fill="#444141" stroke="#444141" stroke-width="0.7" stroke-linejoin="round" /><polygon points="656.7,284.2 655.2,290.7 666.4,323.8 667.6,316.9" fill="#939495" stroke="#939495" stroke-width="0.7" stroke-linejoin="round" /><polygon points="1006.8,290.7 1005.3,284.2 994.4,316.9 995.6,323.8" fill="#444141" stroke="#444141" stroke-width="0.7" stroke-linejoin="round" /><polygon points="831.0,69.6 831.0,69.6 831.0,72.7 837.8,72.7" fill="#959697" stroke="#959697" stroke-width="0.7" stroke-linejoin="round" /><polygon points="831.0,69.6 831.0,69.6 824.2,72.7 831.0,72.7" fill="#979899" stroke="#979899" stroke-width="0.7" stroke-linejoin="round" /><polygon points="733.4,99.9 729.9,100.5 702.7,123.3 707.7,122.0" fill="#a0a1a2" stroke="#a0a1a2" stroke-width="0.7" stroke-linejoin="round" /><polygon points="932.1,100.5 928.6,99.9 954.3,122.0 959.3,123.3" fill="#767778" stroke="#767778" stroke-width="0.7" stroke-linejoin="round" /><polygon points="950.4,385.3 955.3,379.0 927.9,399.1 923.7,404.4" fill="#3b3838" stroke="#3b3838" stroke-width="0.7" stroke-linejoin="round" /><polygon points="706.7,379.0 711.6,385.3 738.3,404.4 734.1,399.1" fill="#717273" stroke="#717273" stroke-width="0.7" stroke-linejoin="round" /><polygon points="831.0,69.6 831.0,69.6 837.8,72.7 844.3,72.7" fill="#949596" stroke="#949596" stroke-width="0.7" stroke-linejoin="round" /><polygon points="831.0,69.6 831.0,69.6 817.7,72.7 824.2,72.7" fill="#98999a" stroke="#98999a" stroke-width="0.7" stroke-linejoin="round" /><polygon points="798.4,72.9 796.3,73.0 763.3,83.3 767.9,83.0" fill="#9fa0a1" stroke="#9fa0a1" stroke-width="0.7" stroke-linejoin="round" /><polygon points="865.7,73.0 863.6,72.9 894.1,83.0 898.7,83.3" fill="#7d7e7f" stroke="#7d7e7f" stroke-width="0.7" stroke-linejoin="round" /><polygon points="831.0,69.6 831.0,69.6 811.7,72.7 817.7,72.7" fill="#999a9b" stroke="#999a9b" stroke-width="0.7" stroke-linejoin="round" /><polygon points="831.0,69.6 831.0,69.6 844.3,72.7 850.3,72.7" fill="#929394" stroke="#929394" stroke-width="0.7" stroke-linejoin="round" /><polygon points="781.8,423.6 792.1,426.1 811.6,427.6 806.4,426.3" fill="#555252" stroke="#555252" stroke-width="0.7" stroke-linejoin="round" /><polygon points="869.9,426.1 880.2,423.6 855.6,426.3 850.4,427.6" fill="#454242" stroke="#454242" stroke-width="0.7" stroke-linejoin="round" /><polygon points="738.3,404.4 746.4,409.3 773.6,420.5 767.9,417.0" fill="#5f6061" stroke="#5f6061" stroke-width="0.7" stroke-linejoin="round" /><polygon points="915.6,409.3 923.7,404.4 894.1,417.0 888.4,420.5" fill="#3d3a3a" stroke="#3d3a3a" stroke-width="0.7" stroke-linejoin="round" /><polygon points="652.5,250.0 650.9,255.6 655.2,290.7 656.7,284.2" fill="#999a9b" stroke="#999a9b" stroke-width="0.7" stroke-linejoin="round" /><polygon points="1011.1,255.6 1009.5,250.0 1005.3,284.2 1006.8,290.7" fill="#4f4c4c" stroke="#4f4c4c" stroke-width="0.7" stroke-linejoin="round" /><polygon points="831.0,69.6 831.0,69.6 806.3,72.8 811.7,72.7" fill="#9a9b9c" stroke="#9a9b9c" stroke-width="0.7" stroke-linejoin="round" /><polygon points="831.0,69.6 831.0,69.6 850.3,72.7 855.7,72.8" fill="#919293" stroke="#919293" stroke-width="0.7" stroke-linejoin="round" /><polygon points="763.3,83.3 761.2,83.6 729.9,100.5 733.4,99.9" fill="#a0a1a2" stroke="#a0a1a2" stroke-width="0.7" stroke-linejoin="round" /><polygon points="900.8,83.6 898.7,83.3 928.6,99.9 932.1,100.5" fill="#797a7b" stroke="#797a7b" stroke-width="0.7" stroke-linejoin="round" /><polygon points="831.0,69.6 831.0,69.6 801.8,72.8 806.3,72.8" fill="#9b9c9d" stroke="#9b9c9d" stroke-width="0.7" stroke-linejoin="round" /><polygon points="831.0,69.6 831.0,69.6 855.7,72.8 860.2,72.8" fill="#909192" stroke="#909192" stroke-width="0.7" stroke-linejoin="round" /><polygon points="792.1,426.1 804.1,428.1 817.6,428.6 811.6,427.6" fill="#535050" stroke="#535050" stroke-width="0.7" stroke-linejoin="round" /><polygon points="857.9,428.1 869.9,426.1 850.4,427.6 844.4,428.6" fill="#474444" stroke="#474444" stroke-width="0.7" stroke-linejoin="round" /><polygon points="831.0,69.6 831.0,69.6 798.4,72.9 801.8,72.8" fill="#9b9c9d" stroke="#9b9c9d" stroke-width="0.7" stroke-linejoin="round" /><polygon points="831.0,69.6 831.0,69.6 860.2,72.8 863.6,72.9" fill="#8e8f90" stroke="#8e8f90" stroke-width="0.7" stroke-linejoin="round" /><polygon points="655.1,215.4 653.6,220.0 650.9,255.6 652.5,250.0" fill="#9c9d9e" stroke="#9c9d9e" stroke-width="0.7" stroke-linejoin="round" /><polygon points="1008.4,220.0 1006.9,215.4 1009.5,250.0 1011.1,255.6" fill="#5b5858" stroke="#5b5858" stroke-width="0.7" stroke-linejoin="round" /><polygon points="972.8,360.5 978.2,353.6 955.3,379.0 950.4,385.3" fill="#3a3737" stroke="#3a3737" stroke-width="0.7" stroke-linejoin="round" /><polygon points="683.8,353.6 689.2,360.5 711.6,385.3 706.7,379.0" fill="#828384" stroke="#828384" stroke-width="0.7" stroke-linejoin="round" /><polygon points="796.3,73.0 795.4,73.1 761.2,83.6 763.3,83.3" fill="#9fa0a1" stroke="#9fa0a1" stroke-width="0.7" stroke-linejoin="round" /><polygon points="866.6,73.1 865.7,73.0 898.7,83.3 900.8,83.6" fill="#7d7e7f" stroke="#7d7e7f" stroke-width="0.7" stroke-linejoin="round" /><polygon points="804.1,428.1 817.2,429.2 824.2,429.2 817.6,428.6" fill="#514e4e" stroke="#514e4e" stroke-width="0.7" stroke-linejoin="round" /><polygon points="844.8,429.2 857.9,428.1 844.4,428.6 837.8,429.2" fill="#494646" stroke="#494646" stroke-width="0.7" stroke-linejoin="round" /><polygon points="831.0,69.6 831.0,69.6 796.3,73.0 798.4,72.9" fill="#9c9d9e" stroke="#9c9d9e" stroke-width="0.7" stroke-linejoin="round" /><polygon points="831.0,69.6 831.0,69.6 863.6,72.9 865.7,73.0" fill="#8e8f90" stroke="#8e8f90" stroke-width="0.7" stroke-linejoin="round" /><polygon points="831.0,429.6 844.8,429.2 837.8,429.2 831.0,429.4" fill="#4c4949" stroke="#4c4949" stroke-width="0.7" stroke-linejoin="round" /><polygon points="817.2,429.2 831.0,429.6 831.0,429.4 824.2,429.2" fill="#4e4b4b" stroke="#4e4b4b" stroke-width="0.7" stroke-linejoin="round" /><polygon points="664.6,181.9 663.5,185.3 653.6,220.0 655.1,215.4" fill="#9e9fa0" stroke="#9e9fa0" stroke-width="0.7" stroke-linejoin="round" /><polygon points="998.5,185.3 997.4,181.9 1006.9,215.4 1008.4,220.0" fill="#656667" stroke="#656667" stroke-width="0.7" stroke-linejoin="round" /><polygon points="831.0,69.6 831.0,69.6 795.4,73.1 796.3,73.0" fill="#9c9d9e" stroke="#9c9d9e" stroke-width="0.7" stroke-linejoin="round" /><polygon points="831.0,69.6 831.0,69.6 865.7,73.0 866.6,73.1" fill="#8d8e8f" stroke="#8d8e8f" stroke-width="0.7" stroke-linejoin="round" /><polygon points="746.4,409.3 758.2,413.7 781.8,423.6 773.6,420.5" fill="#5f5c5c" stroke="#5f5c5c" stroke-width="0.7" stroke-linejoin="round" /><polygon points="903.8,413.7 915.6,409.3 888.4,420.5 880.2,423.6" fill="#3f3c3c" stroke="#3f3c3c" stroke-width="0.7" stroke-linejoin="round" /><polygon points="680.6,150.8 680.0,153.1 663.5,185.3 664.6,181.9" fill="#9fa0a1" stroke="#9fa0a1" stroke-width="0.7" stroke-linejoin="round" /><polygon points="982.0,153.1 981.4,150.8 997.4,181.9 998.5,185.3" fill="#747576" stroke="#747576" stroke-width="0.7" stroke-linejoin="round" /><polygon points="831.0,69.6 831.0,69.6 795.9,73.2 795.4,73.1" fill="#9c9d9e" stroke="#9c9d9e" stroke-width="0.7" stroke-linejoin="round" /><polygon points="831.0,69.6 831.0,69.6 866.6,73.1 866.1,73.2" fill="#8d8e8f" stroke="#8d8e8f" stroke-width="0.7" stroke-linejoin="round" /><polygon points="711.6,385.3 721.7,391.3 746.4,409.3 738.3,404.4" fill="#6c6d6e" stroke="#6c6d6e" stroke-width="0.7" stroke-linejoin="round" /><polygon points="940.3,391.3 950.4,385.3 923.7,404.4 915.6,409.3" fill="#3c3939" stroke="#3c3939" stroke-width="0.7" stroke-linejoin="round" /><polygon points="702.7,123.3 702.6,124.7 680.0,153.1 680.6,150.8" fill="#a0a1a2" stroke="#a0a1a2" stroke-width="0.7" stroke-linejoin="round" /><polygon points="959.4,124.7 959.3,123.3 981.4,150.8 982.0,153.1" fill="#747576" stroke="#747576" stroke-width="0.7" stroke-linejoin="round" /><polygon points="795.4,73.1 795.9,73.2 761.8,83.9 761.2,83.6" fill="#9fa0a1" stroke="#9fa0a1" stroke-width="0.7" stroke-linejoin="round" /><polygon points="866.1,73.2 866.6,73.1 900.8,83.6 900.2,83.9" fill="#7d7e7f" stroke="#7d7e7f" stroke-width="0.7" stroke-linejoin="round" /><polygon points="990.0,330.7 995.6,323.8 978.2,353.6 972.8,360.5" fill="#3d3a3a" stroke="#3d3a3a" stroke-width="0.7" stroke-linejoin="round" /><polygon points="666.4,323.8 672.0,330.7 689.2,360.5 683.8,353.6" fill="#898a8b" stroke="#898a8b" stroke-width="0.7" stroke-linejoin="round" /><polygon points="729.9,100.5 730.3,101.3 702.6,124.7 702.7,123.3" fill="#a0a1a2" stroke="#a0a1a2" stroke-width="0.7" stroke-linejoin="round" /><polygon points="931.7,101.3 932.1,100.5 959.3,123.3 959.4,124.7" fill="#757677" stroke="#757677" stroke-width="0.7" stroke-linejoin="round" /><polygon points="761.2,83.6 761.8,83.9 730.3,101.3 729.9,100.5" fill="#a0a1a2" stroke="#a0a1a2" stroke-width="0.7" stroke-linejoin="round" /><polygon points="900.2,83.9 900.8,83.6 932.1,100.5 931.7,101.3" fill="#797a7b" stroke="#797a7b" stroke-width="0.7" stroke-linejoin="round" /><polygon points="831.0,69.6 831.0,69.6 866.1,73.2 864.3,73.3" fill="#8d8e8f" stroke="#8d8e8f" stroke-width="0.7" stroke-linejoin="round" /><polygon points="831.0,69.6 831.0,69.6 797.7,73.3 795.9,73.2" fill="#9c9d9e" stroke="#9c9d9e" stroke-width="0.7" stroke-linejoin="round" /><polygon points="831.0,69.6 831.0,69.6 864.3,73.3 861.1,73.5" fill="#8e8f90" stroke="#8e8f90" stroke-width="0.7" stroke-linejoin="round" /><polygon points="831.0,69.6 831.0,69.6 800.9,73.5 797.7,73.3" fill="#9b9c9d" stroke="#9b9c9d" stroke-width="0.7" stroke-linejoin="round" /><polygon points="831.0,69.6 831.0,69.6 861.1,73.5 856.7,73.6" fill="#8f9091" stroke="#8f9091" stroke-width="0.7" stroke-linejoin="round" /><polygon points="831.0,69.6 831.0,69.6 805.3,73.6 800.9,73.5" fill="#9b9c9d" stroke="#9b9c9d" stroke-width="0.7" stroke-linejoin="round" /><polygon points="758.2,413.7 773.2,417.3 792.1,426.1 781.8,423.6" fill="#5b5858" stroke="#5b5858" stroke-width="0.7" stroke-linejoin="round" /><polygon points="888.8,417.3 903.8,413.7 880.2,423.6 869.9,426.1" fill="#413e3e" stroke="#413e3e" stroke-width="0.7" stroke-linejoin="round" /><polygon points="1001.0,297.2 1006.8,290.7 995.6,323.8 990.0,330.7" fill="#434040" stroke="#434040" stroke-width="0.7" stroke-linejoin="round" /><polygon points="655.2,290.7 661.0,297.2 672.0,330.7 666.4,323.8" fill="#919293" stroke="#919293" stroke-width="0.7" stroke-linejoin="round" /><polygon points="831.0,69.6 831.0,69.6 810.7,73.7 805.3,73.6" fill="#9a9b9c" stroke="#9a9b9c" stroke-width="0.7" stroke-linejoin="round" /><polygon points="831.0,69.6 831.0,69.6 856.7,73.6 851.3,73.7" fill="#919293" stroke="#919293" stroke-width="0.7" stroke-linejoin="round" /><polygon points="864.3,73.3 866.1,73.2 900.2,83.9 896.8,84.3" fill="#7d7e7f" stroke="#7d7e7f" stroke-width="0.7" stroke-linejoin="round" /><polygon points="795.9,73.2 797.7,73.3 765.2,84.3 761.8,83.9" fill="#9fa0a1" stroke="#9fa0a1" stroke-width="0.7" stroke-linejoin="round" /><polygon points="831.0,69.6 831.0,69.6 817.0,73.8 810.7,73.7" fill="#999a9b" stroke="#999a9b" stroke-width="0.7" stroke-linejoin="round" /><polygon points="831.0,69.6 831.0,69.6 851.3,73.7 845.0,73.8" fill="#929394" stroke="#929394" stroke-width="0.7" stroke-linejoin="round" /><polygon points="831.0,69.6 831.0,69.6 845.0,73.8 838.1,73.8" fill="#949596" stroke="#949596" stroke-width="0.7" stroke-linejoin="round" /><polygon points="831.0,69.6 831.0,69.6 823.9,73.8 817.0,73.8" fill="#98999a" stroke="#98999a" stroke-width="0.7" stroke-linejoin="round" /><polygon points="831.0,69.6 831.0,69.6 838.1,73.8 831.0,73.8" fill="#959697" stroke="#959697" stroke-width="0.7" stroke-linejoin="round" /><polygon points="831.0,69.6 831.0,69.6 831.0,73.8 823.9,73.8" fill="#979899" stroke="#979899" stroke-width="0.7" stroke-linejoin="round" /><polygon points="689.2,360.5 700.8,367.0 721.7,391.3 711.6,385.3" fill="#7e7f80" stroke="#7e7f80" stroke-width="0.7" stroke-linejoin="round" /><polygon points="961.2,367.0 972.8,360.5 950.4,385.3 940.3,391.3" fill="#3a3737" stroke="#3a3737" stroke-width="0.7" stroke-linejoin="round" /><polygon points="1005.3,261.3 1011.1,255.6 1006.8,290.7 1001.0,297.2" fill="#4d4a4a" stroke="#4d4a4a" stroke-width="0.7" stroke-linejoin="round" /><polygon points="650.9,255.6 656.7,261.3 661.0,297.2 655.2,290.7" fill="#98999a" stroke="#98999a" stroke-width="0.7" stroke-linejoin="round" /><polygon points="773.2,417.3 790.9,420.0 804.1,428.1 792.1,426.1" fill="#575454" stroke="#575454" stroke-width="0.7" stroke-linejoin="round" /><polygon points="871.1,420.0 888.8,417.3 869.9,426.1 857.9,428.1" fill="#434040" stroke="#434040" stroke-width="0.7" stroke-linejoin="round" /><polygon points="896.8,84.3 900.2,83.9 931.7,101.3 927.3,102.2" fill="#7a7b7c" stroke="#7a7b7c" stroke-width="0.7" stroke-linejoin="round" /><polygon points="761.8,83.9 765.2,84.3 734.7,102.2 730.3,101.3" fill="#a0a1a2" stroke="#a0a1a2" stroke-width="0.7" stroke-linejoin="round" /><polygon points="721.7,391.3 736.6,396.6 758.2,413.7 746.4,409.3" fill="#666768" stroke="#666768" stroke-width="0.7" stroke-linejoin="round" /><polygon points="925.4,396.6 940.3,391.3 915.6,409.3 903.8,413.7" fill="#3c3939" stroke="#3c3939" stroke-width="0.7" stroke-linejoin="round" /><polygon points="797.7,73.3 800.9,73.5 771.2,84.7 765.2,84.3" fill="#9fa0a1" stroke="#9fa0a1" stroke-width="0.7" stroke-linejoin="round" /><polygon points="861.1,73.5 864.3,73.3 896.8,84.3 890.8,84.7" fill="#7e7f80" stroke="#7e7f80" stroke-width="0.7" stroke-linejoin="round" /><polygon points="1002.5,224.6 1008.4,220.0 1011.1,255.6 1005.3,261.3" fill="#585555" stroke="#585555" stroke-width="0.7" stroke-linejoin="round" /><polygon points="653.6,220.0 659.5,224.6 656.7,261.3 650.9,255.6" fill="#9b9c9d" stroke="#9b9c9d" stroke-width="0.7" stroke-linejoin="round" /><polygon points="927.3,102.2 931.7,101.3 959.4,124.7 954.2,126.3" fill="#767778" stroke="#767778" stroke-width="0.7" stroke-linejoin="round" /><polygon points="730.3,101.3 734.7,102.2 707.8,126.3 702.6,124.7" fill="#a0a1a2" stroke="#a0a1a2" stroke-width="0.7" stroke-linejoin="round" /><polygon points="790.9,420.0 810.5,421.7 817.2,429.2 804.1,428.1" fill="#535050" stroke="#535050" stroke-width="0.7" stroke-linejoin="round" /><polygon points="851.5,421.7 871.1,420.0 857.9,428.1 844.8,429.2" fill="#474444" stroke="#474444" stroke-width="0.7" stroke-linejoin="round" /><polygon points="992.7,188.9 998.5,185.3 1008.4,220.0 1002.5,224.6" fill="#656667" stroke="#656667" stroke-width="0.7" stroke-linejoin="round" /><polygon points="663.5,185.3 669.3,188.9 659.5,224.6 653.6,220.0" fill="#9e9fa0" stroke="#9e9fa0" stroke-width="0.7" stroke-linejoin="round" /><polygon points="954.2,126.3 959.4,124.7 982.0,153.1 976.4,155.6" fill="#747576" stroke="#747576" stroke-width="0.7" stroke-linejoin="round" /><polygon points="702.6,124.7 707.8,126.3 685.6,155.6 680.0,153.1" fill="#a0a1a2" stroke="#a0a1a2" stroke-width="0.7" stroke-linejoin="round" /><polygon points="831.0,422.3 851.5,421.7 844.8,429.2 831.0,429.6" fill="#4b4848" stroke="#4b4848" stroke-width="0.7" stroke-linejoin="round" /><polygon points="810.5,421.7 831.0,422.3 831.0,429.6 817.2,429.2" fill="#4f4c4c" stroke="#4f4c4c" stroke-width="0.7" stroke-linejoin="round" /><polygon points="976.4,155.6 982.0,153.1 998.5,185.3 992.7,188.9" fill="#747576" stroke="#747576" stroke-width="0.7" stroke-linejoin="round" /><polygon points="680.0,153.1 685.6,155.6 669.3,188.9 663.5,185.3" fill="#9fa0a1" stroke="#9fa0a1" stroke-width="0.7" stroke-linejoin="round" /><polygon points="800.9,73.5 805.3,73.6 779.7,85.1 771.2,84.7" fill="#9e9fa0" stroke="#9e9fa0" stroke-width="0.7" stroke-linejoin="round" /><polygon points="856.7,73.6 861.1,73.5 890.8,84.7 882.3,85.1" fill="#7f8081" stroke="#7f8081" stroke-width="0.7" stroke-linejoin="round" /><polygon points="672.0,330.7 684.7,337.3 700.8,367.0 689.2,360.5" fill="#878889" stroke="#878889" stroke-width="0.7" stroke-linejoin="round" /><polygon points="977.3,337.3 990.0,330.7 972.8,360.5 961.2,367.0" fill="#3c3939" stroke="#3c3939" stroke-width="0.7" stroke-linejoin="round" /><polygon points="765.2,84.3 771.2,84.7 743.2,103.0 734.7,102.2" fill="#a0a1a2" stroke="#a0a1a2" stroke-width="0.7" stroke-linejoin="round" /><polygon points="890.8,84.7 896.8,84.3 927.3,102.2 918.8,103.0" fill="#7a7b7c" stroke="#7a7b7c" stroke-width="0.7" stroke-linejoin="round" /><polygon points="736.6,396.6 755.9,401.0 773.2,417.3 758.2,413.7" fill="#606162" stroke="#606162" stroke-width="0.7" stroke-linejoin="round" /><polygon points="906.1,401.0 925.4,396.6 903.8,413.7 888.8,417.3" fill="#3e3b3b" stroke="#3e3b3b" stroke-width="0.7" stroke-linejoin="round" /><polygon points="805.3,73.6 810.7,73.7 790.4,85.4 779.7,85.1" fill="#9e9fa0" stroke="#9e9fa0" stroke-width="0.7" stroke-linejoin="round" /><polygon points="851.3,73.7 856.7,73.6 882.3,85.1 871.6,85.4" fill="#818283" stroke="#818283" stroke-width="0.7" stroke-linejoin="round" /><polygon points="700.8,367.0 718.3,372.8 736.6,396.6 721.7,391.3" fill="#767778" stroke="#767778" stroke-width="0.7" stroke-linejoin="round" /><polygon points="943.7,372.8 961.2,367.0 940.3,391.3 925.4,396.6" fill="#3d3a3a" stroke="#3d3a3a" stroke-width="0.7" stroke-linejoin="round" /><polygon points="661.0,297.2 674.3,303.4 684.7,337.3 672.0,330.7" fill="#8f9091" stroke="#8f9091" stroke-width="0.7" stroke-linejoin="round" /><polygon points="987.7,303.4 1001.0,297.2 990.0,330.7 977.3,337.3" fill="#464343" stroke="#464343" stroke-width="0.7" stroke-linejoin="round" /><polygon points="845.0,73.8 851.3,73.7 871.6,85.4 859.1,85.7" fill="#88898a" stroke="#88898a" stroke-width="0.7" stroke-linejoin="round" /><polygon points="810.7,73.7 817.0,73.8 802.9,85.7 790.4,85.4" fill="#9e9fa0" stroke="#9e9fa0" stroke-width="0.7" stroke-linejoin="round" /><polygon points="734.7,102.2 743.2,103.0 718.2,127.8 707.8,126.3" fill="#a1a2a3" stroke="#a1a2a3" stroke-width="0.7" stroke-linejoin="round" /><polygon points="918.8,103.0 927.3,102.2 954.2,126.3 943.8,127.8" fill="#797a7b" stroke="#797a7b" stroke-width="0.7" stroke-linejoin="round" /><polygon points="817.0,73.8 823.9,73.8 816.6,85.8 802.9,85.7" fill="#9d9e9f" stroke="#9d9e9f" stroke-width="0.7" stroke-linejoin="round" /><polygon points="838.1,73.8 845.0,73.8 859.1,85.7 845.4,85.8" fill="#909192" stroke="#909192" stroke-width="0.7" stroke-linejoin="round" /><polygon points="755.9,401.0 778.8,404.4 790.9,420.0 773.2,417.3" fill="#5e5b5b" stroke="#5e5b5b" stroke-width="0.7" stroke-linejoin="round" /><polygon points="883.2,404.4 906.1,401.0 888.8,417.3 871.1,420.0" fill="#434040" stroke="#434040" stroke-width="0.7" stroke-linejoin="round" /><polygon points="771.2,84.7 779.7,85.1 755.4,103.8 743.2,103.0" fill="#a1a2a3" stroke="#a1a2a3" stroke-width="0.7" stroke-linejoin="round" /><polygon points="882.3,85.1 890.8,84.7 918.8,103.0 906.6,103.8" fill="#7e7f80" stroke="#7e7f80" stroke-width="0.7" stroke-linejoin="round" /><polygon points="831.0,73.8 838.1,73.8 845.4,85.8 831.0,85.9" fill="#959697" stroke="#959697" stroke-width="0.7" stroke-linejoin="round" /><polygon points="823.9,73.8 831.0,73.8 831.0,85.9 816.6,85.8" fill="#9a9b9c" stroke="#9a9b9c" stroke-width="0.7" stroke-linejoin="round" /><polygon points="656.7,261.3 670.4,266.8 674.3,303.4 661.0,297.2" fill="#98999a" stroke="#98999a" stroke-width="0.7" stroke-linejoin="round" /><polygon points="991.6,266.8 1005.3,261.3 1001.0,297.2 987.7,303.4" fill="#535050" stroke="#535050" stroke-width="0.7" stroke-linejoin="round" /><polygon points="707.8,126.3 718.2,127.8 697.5,158.0 685.6,155.6" fill="#a2a3a4" stroke="#a2a3a4" stroke-width="0.7" stroke-linejoin="round" /><polygon points="943.8,127.8 954.2,126.3 976.4,155.6 964.5,158.0" fill="#7a7b7c" stroke="#7a7b7c" stroke-width="0.7" stroke-linejoin="round" /><polygon points="778.8,404.4 804.3,406.4 810.5,421.7 790.9,420.0" fill="#5a5757" stroke="#5a5757" stroke-width="0.7" stroke-linejoin="round" /><polygon points="857.7,406.4 883.2,404.4 871.1,420.0 851.5,421.7" fill="#494646" stroke="#494646" stroke-width="0.7" stroke-linejoin="round" /><polygon points="684.7,337.3 704.2,343.2 718.3,372.8 700.8,367.0" fill="#858687" stroke="#858687" stroke-width="0.7" stroke-linejoin="round" /><polygon points="957.8,343.2 977.3,337.3 961.2,367.0 943.7,372.8" fill="#434040" stroke="#434040" stroke-width="0.7" stroke-linejoin="round" /><polygon points="659.5,224.6 673.0,229.2 670.4,266.8 656.7,261.3" fill="#9d9e9f" stroke="#9d9e9f" stroke-width="0.7" stroke-linejoin="round" /><polygon points="989.0,229.2 1002.5,224.6 1005.3,261.3 991.6,266.8" fill="#615e5e" stroke="#615e5e" stroke-width="0.7" stroke-linejoin="round" /><polygon points="685.6,155.6 697.5,158.0 682.2,192.3 669.3,188.9" fill="#a2a3a4" stroke="#a2a3a4" stroke-width="0.7" stroke-linejoin="round" /><polygon points="964.5,158.0 976.4,155.6 992.7,188.9 979.8,192.3" fill="#7a7b7c" stroke="#7a7b7c" stroke-width="0.7" stroke-linejoin="round" /><polygon points="920.8,377.7 943.7,372.8 925.4,396.6 906.1,401.0" fill="#423f3f" stroke="#423f3f" stroke-width="0.7" stroke-linejoin="round" /><polygon points="718.3,372.8 741.2,377.7 755.9,401.0 736.6,396.6" fill="#6d6e6f" stroke="#6d6e6f" stroke-width="0.7" stroke-linejoin="round" /><polygon points="669.3,188.9 682.2,192.3 673.0,229.2 659.5,224.6" fill="#a1a2a3" stroke="#a1a2a3" stroke-width="0.7" stroke-linejoin="round" /><polygon points="979.8,192.3 992.7,188.9 1002.5,224.6 989.0,229.2" fill="#6d6e6f" stroke="#6d6e6f" stroke-width="0.7" stroke-linejoin="round" /><polygon points="779.7,85.1 790.4,85.4 771.1,104.6 755.4,103.8" fill="#a1a2a3" stroke="#a1a2a3" stroke-width="0.7" stroke-linejoin="round" /><polygon points="871.6,85.4 882.3,85.1 906.6,103.8 890.9,104.6" fill="#838485" stroke="#838485" stroke-width="0.7" stroke-linejoin="round" /><polygon points="831.0,407.1 857.7,406.4 851.5,421.7 831.0,422.3" fill="#4f4c4c" stroke="#4f4c4c" stroke-width="0.7" stroke-linejoin="round" /><polygon points="804.3,406.4 831.0,407.1 831.0,422.3 810.5,421.7" fill="#555252" stroke="#555252" stroke-width="0.7" stroke-linejoin="round" /><polygon points="743.2,103.0 755.4,103.8 733.7,129.3 718.2,127.8" fill="#a2a3a4" stroke="#a2a3a4" stroke-width="0.7" stroke-linejoin="round" /><polygon points="906.6,103.8 918.8,103.0 943.8,127.8 928.3,129.3" fill="#808182" stroke="#808182" stroke-width="0.7" stroke-linejoin="round" /><polygon points="790.4,85.4 802.9,85.7 789.4,105.1 771.1,104.6" fill="#a2a3a4" stroke="#a2a3a4" stroke-width="0.7" stroke-linejoin="round" /><polygon points="859.1,85.7 871.6,85.4 890.9,104.6 872.6,105.1" fill="#88898a" stroke="#88898a" stroke-width="0.7" stroke-linejoin="round" /><polygon points="674.3,303.4 695.1,309.0 704.2,343.2 684.7,337.3" fill="#8d8e8f" stroke="#8d8e8f" stroke-width="0.7" stroke-linejoin="round" /><polygon points="966.9,309.0 987.7,303.4 977.3,337.3 957.8,343.2" fill="#4f4c4c" stroke="#4f4c4c" stroke-width="0.7" stroke-linejoin="round" /><polygon points="741.2,377.7 768.5,381.4 778.8,404.4 755.9,401.0" fill="#666768" stroke="#666768" stroke-width="0.7" stroke-linejoin="round" /><polygon points="893.5,381.4 920.8,377.7 906.1,401.0 883.2,404.4" fill="#494646" stroke="#494646" stroke-width="0.7" stroke-linejoin="round" /><polygon points="845.4,85.8 859.1,85.7 872.6,105.1 852.3,105.5" fill="#8f9091" stroke="#8f9091" stroke-width="0.7" stroke-linejoin="round" /><polygon points="802.9,85.7 816.6,85.8 809.7,105.5 789.4,105.1" fill="#a1a2a3" stroke="#a1a2a3" stroke-width="0.7" stroke-linejoin="round" /><polygon points="718.2,127.8 733.7,129.3 715.5,160.3 697.5,158.0" fill="#a5a6a7" stroke="#a5a6a7" stroke-width="0.7" stroke-linejoin="round" /><polygon points="928.3,129.3 943.8,127.8 964.5,158.0 946.5,160.3" fill="#848586" stroke="#848586" stroke-width="0.7" stroke-linejoin="round" /><polygon points="704.2,343.2 729.8,348.2 741.2,377.7 718.3,372.8" fill="#7e7f80" stroke="#7e7f80" stroke-width="0.7" stroke-linejoin="round" /><polygon points="932.2,348.2 957.8,343.2 943.7,372.8 920.8,377.7" fill="#4b4848" stroke="#4b4848" stroke-width="0.7" stroke-linejoin="round" /><polygon points="831.0,85.9 845.4,85.8 852.3,105.5 831.0,105.6" fill="#98999a" stroke="#98999a" stroke-width="0.7" stroke-linejoin="round" /><polygon points="816.6,85.8 831.0,85.9 831.0,105.6 809.7,105.5" fill="#9e9fa0" stroke="#9e9fa0" stroke-width="0.7" stroke-linejoin="round" /><polygon points="755.4,103.8 771.1,104.6 753.6,130.5 733.7,129.3" fill="#a4a5a6" stroke="#a4a5a6" stroke-width="0.7" stroke-linejoin="round" /><polygon points="890.9,104.6 906.6,103.8 928.3,129.3 908.4,130.5" fill="#88898a" stroke="#88898a" stroke-width="0.7" stroke-linejoin="round" /><polygon points="670.4,266.8 691.6,271.8 695.1,309.0 674.3,303.4" fill="#999a9b" stroke="#999a9b" stroke-width="0.7" stroke-linejoin="round" /><polygon points="970.4,271.8 991.6,266.8 987.7,303.4 966.9,309.0" fill="#5f6061" stroke="#5f6061" stroke-width="0.7" stroke-linejoin="round" /><polygon points="697.5,158.0 715.5,160.3 702.1,195.6 682.2,192.3" fill="#a7a8a9" stroke="#a7a8a9" stroke-width="0.7" stroke-linejoin="round" /><polygon points="946.5,160.3 964.5,158.0 979.8,192.3 959.9,195.6" fill="#838485" stroke="#838485" stroke-width="0.7" stroke-linejoin="round" /><polygon points="768.5,381.4 798.9,383.7 804.3,406.4 778.8,404.4" fill="#616263" stroke="#616263" stroke-width="0.7" stroke-linejoin="round" /><polygon points="863.1,383.7 893.5,381.4 883.2,404.4 857.7,406.4" fill="#504d4d" stroke="#504d4d" stroke-width="0.7" stroke-linejoin="round" /><polygon points="673.0,229.2 693.9,233.4 691.6,271.8 670.4,266.8" fill="#a1a2a3" stroke="#a1a2a3" stroke-width="0.7" stroke-linejoin="round" /><polygon points="968.1,233.4 989.0,229.2 991.6,266.8 970.4,271.8" fill="#6f7071" stroke="#6f7071" stroke-width="0.7" stroke-linejoin="round" /><polygon points="682.2,192.3 702.1,195.6 693.9,233.4 673.0,229.2" fill="#a6a7a8" stroke="#a6a7a8" stroke-width="0.7" stroke-linejoin="round" /><polygon points="959.9,195.6 979.8,192.3 989.0,229.2 968.1,233.4" fill="#7a7b7c" stroke="#7a7b7c" stroke-width="0.7" stroke-linejoin="round" /><polygon points="798.9,383.7 831.0,384.5 831.0,407.1 804.3,406.4" fill="#5f5c5c" stroke="#5f5c5c" stroke-width="0.7" stroke-linejoin="round" /><polygon points="831.0,384.5 863.1,383.7 857.7,406.4 831.0,407.1" fill="#585555" stroke="#585555" stroke-width="0.7" stroke-linejoin="round" /><polygon points="872.6,105.1 890.9,104.6 908.4,130.5 884.8,131.5" fill="#8f9091" stroke="#8f9091" stroke-width="0.7" stroke-linejoin="round" /><polygon points="771.1,104.6 789.4,105.1 777.2,131.5 753.6,130.5" fill="#a6a7a8" stroke="#a6a7a8" stroke-width="0.7" stroke-linejoin="round" /><polygon points="939.6,313.8 966.9,309.0 957.8,343.2 932.2,348.2" fill="#5a5757" stroke="#5a5757" stroke-width="0.7" stroke-linejoin="round" /><polygon points="695.1,309.0 722.4,313.8 729.8,348.2 704.2,343.2" fill="#8a8b8c" stroke="#8a8b8c" stroke-width="0.7" stroke-linejoin="round" /><polygon points="733.7,129.3 753.6,130.5 739.0,162.3 715.5,160.3" fill="#a8a9aa" stroke="#a8a9aa" stroke-width="0.7" stroke-linejoin="round" /><polygon points="908.4,130.5 928.3,129.3 946.5,160.3 923.0,162.3" fill="#8d8e8f" stroke="#8d8e8f" stroke-width="0.7" stroke-linejoin="round" /><polygon points="729.8,348.2 760.5,352.0 768.5,381.4 741.2,377.7" fill="#757677" stroke="#757677" stroke-width="0.7" stroke-linejoin="round" /><polygon points="901.5,352.0 932.2,348.2 920.8,377.7 893.5,381.4" fill="#545151" stroke="#545151" stroke-width="0.7" stroke-linejoin="round" /><polygon points="789.4,105.1 809.7,105.5 803.4,132.1 777.2,131.5" fill="#a7a8a9" stroke="#a7a8a9" stroke-width="0.7" stroke-linejoin="round" /><polygon points="852.3,105.5 872.6,105.1 884.8,131.5 858.6,132.1" fill="#959697" stroke="#959697" stroke-width="0.7" stroke-linejoin="round" /><polygon points="809.7,105.5 831.0,105.6 831.0,132.3 803.4,132.1" fill="#a4a5a6" stroke="#a4a5a6" stroke-width="0.7" stroke-linejoin="round" /><polygon points="831.0,105.6 852.3,105.5 858.6,132.1 831.0,132.3" fill="#9d9e9f" stroke="#9d9e9f" stroke-width="0.7" stroke-linejoin="round" /><polygon points="691.6,271.8 719.6,276.1 722.4,313.8 695.1,309.0" fill="#98999a" stroke="#98999a" stroke-width="0.7" stroke-linejoin="round" /><polygon points="942.4,276.1 970.4,271.8 966.9,309.0 939.6,313.8" fill="#6b6c6d" stroke="#6b6c6d" stroke-width="0.7" stroke-linejoin="round" /><polygon points="715.5,160.3 739.0,162.3 728.1,198.3 702.1,195.6" fill="#aeafb0" stroke="#aeafb0" stroke-width="0.7" stroke-linejoin="round" /><polygon points="923.0,162.3 946.5,160.3 959.9,195.6 933.9,198.3" fill="#8b8c8d" stroke="#8b8c8d" stroke-width="0.7" stroke-linejoin="round" /><polygon points="760.5,352.0 794.8,354.4 798.9,383.7 768.5,381.4" fill="#6e6f70" stroke="#6e6f70" stroke-width="0.7" stroke-linejoin="round" /><polygon points="867.2,354.4 901.5,352.0 893.5,381.4 863.1,383.7" fill="#5d5a5a" stroke="#5d5a5a" stroke-width="0.7" stroke-linejoin="round" /><polygon points="753.6,130.5 777.2,131.5 767.0,163.8 739.0,162.3" fill="#acadae" stroke="#acadae" stroke-width="0.7" stroke-linejoin="round" /><polygon points="884.8,131.5 908.4,130.5 923.0,162.3 895.0,163.8" fill="#949596" stroke="#949596" stroke-width="0.7" stroke-linejoin="round" /><polygon points="940.5,236.9 968.1,233.4 970.4,271.8 942.4,276.1" fill="#7c7d7e" stroke="#7c7d7e" stroke-width="0.7" stroke-linejoin="round" /><polygon points="693.9,233.4 721.5,236.9 719.6,276.1 691.6,271.8" fill="#a4a5a6" stroke="#a4a5a6" stroke-width="0.7" stroke-linejoin="round" /><polygon points="933.9,198.3 959.9,195.6 968.1,233.4 940.5,236.9" fill="#858687" stroke="#858687" stroke-width="0.7" stroke-linejoin="round" /><polygon points="702.1,195.6 728.1,198.3 721.5,236.9 693.9,233.4" fill="#abacad" stroke="#abacad" stroke-width="0.7" stroke-linejoin="round" /><polygon points="722.4,313.8 755.3,317.4 760.5,352.0 729.8,348.2" fill="#858687" stroke="#858687" stroke-width="0.7" stroke-linejoin="round" /><polygon points="906.7,317.4 939.6,313.8 932.2,348.2 901.5,352.0" fill="#606162" stroke="#606162" stroke-width="0.7" stroke-linejoin="round" /><polygon points="831.0,355.2 867.2,354.4 863.1,383.7 831.0,384.5" fill="#626364" stroke="#626364" stroke-width="0.7" stroke-linejoin="round" /><polygon points="794.8,354.4 831.0,355.2 831.0,384.5 798.9,383.7" fill="#68696a" stroke="#68696a" stroke-width="0.7" stroke-linejoin="round" /><polygon points="777.2,131.5 803.4,132.1 798.2,164.8 767.0,163.8" fill="#afb0b1" stroke="#afb0b1" stroke-width="0.7" stroke-linejoin="round" /><polygon points="858.6,132.1 884.8,131.5 895.0,163.8 863.8,164.8" fill="#9a9b9c" stroke="#9a9b9c" stroke-width="0.7" stroke-linejoin="round" /><polygon points="739.0,162.3 767.0,163.8 759.3,200.5 728.1,198.3" fill="#b6b7b8" stroke="#b6b7b8" stroke-width="0.7" stroke-linejoin="round" /><polygon points="895.0,163.8 923.0,162.3 933.9,198.3 902.7,200.5" fill="#939495" stroke="#939495" stroke-width="0.7" stroke-linejoin="round" /><polygon points="719.6,276.1 753.3,279.3 755.3,317.4 722.4,313.8" fill="#949596" stroke="#949596" stroke-width="0.7" stroke-linejoin="round" /><polygon points="908.7,279.3 942.4,276.1 939.6,313.8 906.7,317.4" fill="#737475" stroke="#737475" stroke-width="0.7" stroke-linejoin="round" /><polygon points="803.4,132.1 831.0,132.3 831.0,165.1 798.2,164.8" fill="#abacad" stroke="#abacad" stroke-width="0.7" stroke-linejoin="round" /><polygon points="831.0,132.3 858.6,132.1 863.8,164.8 831.0,165.1" fill="#a1a2a3" stroke="#a1a2a3" stroke-width="0.7" stroke-linejoin="round" /><polygon points="755.3,317.4 792.1,319.7 794.8,354.4 760.5,352.0" fill="#7e7f80" stroke="#7e7f80" stroke-width="0.7" stroke-linejoin="round" /><polygon points="869.9,319.7 906.7,317.4 901.5,352.0 867.2,354.4" fill="#696a6b" stroke="#696a6b" stroke-width="0.7" stroke-linejoin="round" /><polygon points="728.1,198.3 759.3,200.5 754.7,239.6 721.5,236.9" fill="#b2b3b4" stroke="#b2b3b4" stroke-width="0.7" stroke-linejoin="round" /><polygon points="902.7,200.5 933.9,198.3 940.5,236.9 907.3,239.6" fill="#8d8e8f" stroke="#8d8e8f" stroke-width="0.7" stroke-linejoin="round" /><polygon points="721.5,236.9 754.7,239.6 753.3,279.3 719.6,276.1" fill="#a5a6a7" stroke="#a5a6a7" stroke-width="0.7" stroke-linejoin="round" /><polygon points="907.3,239.6 940.5,236.9 942.4,276.1 908.7,279.3" fill="#858687" stroke="#858687" stroke-width="0.7" stroke-linejoin="round" /><polygon points="831.0,320.5 869.9,319.7 867.2,354.4 831.0,355.2" fill="#717273" stroke="#717273" stroke-width="0.7" stroke-linejoin="round" /><polygon points="792.1,319.7 831.0,320.5 831.0,355.2 794.8,354.4" fill="#78797a" stroke="#78797a" stroke-width="0.7" stroke-linejoin="round" /><polygon points="767.0,163.8 798.2,164.8 794.2,201.8 759.3,200.5" fill="#b7b8b9" stroke="#b7b8b9" stroke-width="0.7" stroke-linejoin="round" /><polygon points="863.8,164.8 895.0,163.8 902.7,200.5 867.8,201.8" fill="#9a9b9c" stroke="#9a9b9c" stroke-width="0.7" stroke-linejoin="round" /><polygon points="753.3,279.3 791.1,281.4 792.1,319.7 755.3,317.4" fill="#909192" stroke="#909192" stroke-width="0.7" stroke-linejoin="round" /><polygon points="870.9,281.4 908.7,279.3 906.7,317.4 869.9,319.7" fill="#7a7b7c" stroke="#7a7b7c" stroke-width="0.7" stroke-linejoin="round" /><polygon points="798.2,164.8 831.0,165.1 831.0,202.3 794.2,201.8" fill="#aeafb0" stroke="#aeafb0" stroke-width="0.7" stroke-linejoin="round" /><polygon points="831.0,165.1 863.8,164.8 867.8,201.8 831.0,202.3" fill="#a2a3a4" stroke="#a2a3a4" stroke-width="0.7" stroke-linejoin="round" /><polygon points="759.3,200.5 794.2,201.8 791.8,241.4 754.7,239.6" fill="#b3b4b5" stroke="#b3b4b5" stroke-width="0.7" stroke-linejoin="round" /><polygon points="867.8,201.8 902.7,200.5 907.3,239.6 870.2,241.4" fill="#969798" stroke="#969798" stroke-width="0.7" stroke-linejoin="round" /><polygon points="754.7,239.6 791.8,241.4 791.1,281.4 753.3,279.3" fill="#a4a5a6" stroke="#a4a5a6" stroke-width="0.7" stroke-linejoin="round" /><polygon points="870.2,241.4 907.3,239.6 908.7,279.3 870.9,281.4" fill="#8d8e8f" stroke="#8d8e8f" stroke-width="0.7" stroke-linejoin="round" /><polygon points="831.0,282.1 870.9,281.4 869.9,319.7 831.0,320.5" fill="#828384" stroke="#828384" stroke-width="0.7" stroke-linejoin="round" /><polygon points="791.1,281.4 831.0,282.1 831.0,320.5 792.1,319.7" fill="#898a8b" stroke="#898a8b" stroke-width="0.7" stroke-linejoin="round" /><polygon points="831.0,202.3 867.8,201.8 870.2,241.4 831.0,241.9" fill="#9fa0a1" stroke="#9fa0a1" stroke-width="0.7" stroke-linejoin="round" /><polygon points="794.2,201.8 831.0,202.3 831.0,241.9 791.8,241.4" fill="#abacad" stroke="#abacad" stroke-width="0.7" stroke-linejoin="round" /><polygon points="831.0,241.9 870.2,241.4 870.9,281.4 831.0,282.1" fill="#959697" stroke="#959697" stroke-width="0.7" stroke-linejoin="round" /><polygon points="791.8,241.4 831.0,241.9 831.0,282.1 791.1,281.4" fill="#9e9fa0" stroke="#9e9fa0" stroke-width="0.7" stroke-linejoin="round" /></g>
<defs><radialGradient id="sdk" cx="771" cy="200" r="290" gradientUnits="userSpaceOnUse"><stop offset="0.45" stop-color="#1a1515" stop-opacity="0"/><stop offset="0.62" stop-color="#1a1515" stop-opacity="0.09"/><stop offset="0.75" stop-color="#1a1515" stop-opacity="0.22"/><stop offset="0.83" stop-color="#1a1515" stop-opacity="0.38"/><stop offset="0.9" stop-color="#1a1515" stop-opacity="0.5"/><stop offset="1" stop-color="#1a1515" stop-opacity="0.55"/></radialGradient></defs>
<circle cx="831" cy="250" r="177.5" fill="url(#sdk)"/>
<circle cx="831" cy="250" r="177.5" fill="none" stroke="#4a4a4b" stroke-width="1" opacity="0.6"/>
<polygon points="335.0,340.0 344.7,339.5 382.3,740.1 379.5,738.5 376.7,736.9 373.9,735.0 371.1,732.9 368.3,730.0" fill="#9b9d9c" stroke="#9b9d9c" stroke-width="0.6" stroke-linejoin="round" /><polygon points="344.7,339.5 356.3,338.9 399.1,747.3 395.7,746.1 392.4,744.8 389.0,743.3 385.7,741.8 382.3,740.1" fill="#959796" stroke="#959796" stroke-width="0.6" stroke-linejoin="round" /><polygon points="356.3,338.9 367.9,338.3 415.9,751.3 412.5,750.8 409.2,750.1 405.8,749.3 402.5,748.3 399.1,747.3" fill="#8d8f8f" stroke="#8d8f8f" stroke-width="0.6" stroke-linejoin="round" /><polygon points="367.9,338.3 377.5,337.8 429.9,752.2 427.1,752.2 424.3,752.1 421.5,752.0 418.7,751.7 415.9,751.3" fill="#858687" stroke="#858687" stroke-width="0.6" stroke-linejoin="round" /><polygon points="377.5,337.8 386.3,337.4 442.5,751.0 440.0,751.4 437.5,751.7 434.9,752.0 432.4,752.1 429.9,752.2" fill="#7b7c7e" stroke="#7b7c7e" stroke-width="0.6" stroke-linejoin="round" /><polygon points="386.3,337.4 395.0,336.9 455.1,747.9 452.6,748.7 450.1,749.4 447.5,750.0 445.0,750.6 442.5,751.0" fill="#707173" stroke="#707173" stroke-width="0.6" stroke-linejoin="round" /><polygon points="395.0,336.9 402.7,336.5 466.3,743.6 464.1,744.6 461.8,745.5 459.6,746.4 457.3,747.2 455.1,747.9" fill="#646466" stroke="#646466" stroke-width="0.6" stroke-linejoin="round" /><polygon points="402.7,336.5 410.4,336.1 477.5,737.9 475.3,739.2 473.0,740.4 470.8,741.5 468.5,742.6 466.3,743.6" fill="#565657" stroke="#565657" stroke-width="0.6" stroke-linejoin="round" /><polygon points="410.4,336.1 418.2,335.7 488.7,730.8 486.5,732.3 484.2,733.8 482.0,735.2 479.7,736.6 477.5,737.9" fill="#4a494a" stroke="#4a494a" stroke-width="0.6" stroke-linejoin="round" /><polygon points="418.2,335.7 424.9,335.4 498.5,723.3 496.5,724.9 494.6,726.5 492.6,728.0 490.7,729.4 488.7,730.8" fill="#434142" stroke="#434142" stroke-width="0.6" stroke-linejoin="round" /><polygon points="424.9,335.4 431.7,335.0 508.3,713.3 506.3,716.0 504.4,718.1 502.4,719.9 500.5,721.7 498.5,723.3" fill="#3e3c3d" stroke="#3e3c3d" stroke-width="0.6" stroke-linejoin="round" />
<defs><clipPath id="cbg"><polygon points="0.0,150.0 40.0,215.0 76.0,241.0 121.0,279.0 160.0,300.0 199.0,318.0 262.0,339.5 334.0,352.5 391.0,351.5 432.0,346.0 502.0,319.5 551.0,290.0 571.0,271.0 617.0,213.0 653.0,140.0 670.0,83.0 680.0,40.0 684.0,0.0 0.0,0.0"/></clipPath></defs>
<defs><linearGradient id="bgl" x1="0" y1="0" x2="110" y2="0" gradientUnits="userSpaceOnUse"><stop offset="0" stop-color="#7e807f"/><stop offset="0.45" stop-color="#757776"/><stop offset="1" stop-color="#666766"/></linearGradient></defs>
<g clip-path="url(#cbg)"><rect x="0" y="0" width="700" height="360" fill="#35322f"/><polygon points="0,0 110,0 110,150 95,212 0,212" fill="url(#bgl)"/><polygon points="0,212 95,212 84,250 0,250" fill="#5e5e5c"/><polygon points="97.8,227.7 83.4,229.6 134.0,283.9 145.0,281.9" fill="#4b4948" stroke="#4b4948" stroke-width="0.7" stroke-linejoin="round" /><polygon points="70.3,-251.9 58.7,-253.9 23.3,-199.6 38.2,-197.7" fill="#878787" stroke="#878787" stroke-width="0.7" stroke-linejoin="round" /><polygon points="658.7,229.6 643.8,227.7 611.7,281.9 623.3,283.9" fill="#4b4947" stroke="#4b4947" stroke-width="0.7" stroke-linejoin="round" /><polygon points="548.0,-253.9 537.0,-251.9 584.2,-197.7 598.6,-199.6" fill="#41403d" stroke="#41403d" stroke-width="0.7" stroke-linejoin="round" /><polygon points="353.1,360.3 343.0,360.8 389.4,361.0 389.4,361.0" fill="#3c3a37" stroke="#3c3a37" stroke-width="0.7" stroke-linejoin="round" /><polygon points="435.8,360.8 425.6,360.3 389.4,361.0 389.4,361.0" fill="#3f3d3a" stroke="#3f3d3a" stroke-width="0.7" stroke-linejoin="round" /><polygon points="292.6,-331.0 292.6,-331.0 246.2,-330.8 256.4,-330.3" fill="#777777" stroke="#777777" stroke-width="0.7" stroke-linejoin="round" /><polygon points="292.6,-331.0 292.6,-331.0 328.9,-330.3 339.0,-330.8" fill="#747474" stroke="#747474" stroke-width="0.7" stroke-linejoin="round" /><polygon points="145.0,281.9 134.0,283.9 192.2,325.1 199.7,323.2" fill="#302d2a" stroke="#302d2a" stroke-width="0.7" stroke-linejoin="round" /><polygon points="113.4,-293.2 105.4,-295.1 58.7,-253.9 70.3,-251.9" fill="#858585" stroke="#858585" stroke-width="0.7" stroke-linejoin="round" /><polygon points="623.3,283.9 611.7,281.9 568.6,323.2 576.6,325.1" fill="#4a4947" stroke="#4a4947" stroke-width="0.7" stroke-linejoin="round" /><polygon points="489.8,-295.1 482.3,-293.2 537.0,-251.9 548.0,-253.9" fill="#454341" stroke="#454341" stroke-width="0.7" stroke-linejoin="round" /><polygon points="343.0,360.8 334.6,361.4 389.4,361.0 389.4,361.0" fill="#3c3a37" stroke="#3c3a37" stroke-width="0.7" stroke-linejoin="round" /><polygon points="444.4,361.4 435.8,360.8 389.4,361.0 389.4,361.0" fill="#3f3d3b" stroke="#3f3d3b" stroke-width="0.7" stroke-linejoin="round" /><polygon points="292.6,-331.0 292.6,-331.0 237.6,-331.4 246.2,-330.8" fill="#777777" stroke="#777777" stroke-width="0.7" stroke-linejoin="round" /><polygon points="292.6,-331.0 292.6,-331.0 339.0,-330.8 347.4,-331.4" fill="#737373" stroke="#737373" stroke-width="0.7" stroke-linejoin="round" /><polygon points="166.1,-320.4 161.4,-321.8 105.4,-295.1 113.4,-293.2" fill="#828282" stroke="#828282" stroke-width="0.7" stroke-linejoin="round" /><polygon points="199.7,323.2 192.2,325.1 255.7,351.8 260.0,350.4" fill="#2b2925" stroke="#2b2925" stroke-width="0.7" stroke-linejoin="round" /><polygon points="426.3,-321.8 422.0,-320.4 482.3,-293.2 489.8,-295.1" fill="#545352" stroke="#545352" stroke-width="0.7" stroke-linejoin="round" /><polygon points="576.6,325.1 568.6,323.2 515.9,350.4 520.6,351.8" fill="#484745" stroke="#484745" stroke-width="0.7" stroke-linejoin="round" /><polygon points="334.6,361.4 328.2,362.1 389.4,361.0 389.4,361.0" fill="#3c3937" stroke="#3c3937" stroke-width="0.7" stroke-linejoin="round" /><polygon points="451.0,362.1 444.4,361.4 389.4,361.0 389.4,361.0" fill="#3f3e3b" stroke="#3f3e3b" stroke-width="0.7" stroke-linejoin="round" /><polygon points="292.6,-331.0 292.6,-331.0 231.0,-332.1 237.6,-331.4" fill="#787878" stroke="#787878" stroke-width="0.7" stroke-linejoin="round" /><polygon points="292.6,-331.0 292.6,-331.0 347.4,-331.4 353.8,-332.1" fill="#737373" stroke="#737373" stroke-width="0.7" stroke-linejoin="round" /><polygon points="260.0,350.4 255.7,351.8 322.3,363.6 324.0,362.8" fill="#33302d" stroke="#33302d" stroke-width="0.7" stroke-linejoin="round" /><polygon points="226.6,-332.8 224.7,-333.6 161.4,-321.8 166.1,-320.4" fill="#7d7d7d" stroke="#7d7d7d" stroke-width="0.7" stroke-linejoin="round" /><polygon points="520.6,351.8 515.9,350.4 455.4,362.8 457.3,363.6" fill="#454341" stroke="#454341" stroke-width="0.7" stroke-linejoin="round" /><polygon points="359.7,-333.6 358.0,-332.8 422.0,-320.4 426.3,-321.8" fill="#676767" stroke="#676767" stroke-width="0.7" stroke-linejoin="round" /><polygon points="328.2,362.1 324.0,362.8 389.4,361.0 389.4,361.0" fill="#3b3936" stroke="#3b3936" stroke-width="0.7" stroke-linejoin="round" /><polygon points="455.4,362.8 451.0,362.1 389.4,361.0 389.4,361.0" fill="#403e3b" stroke="#403e3b" stroke-width="0.7" stroke-linejoin="round" /><polygon points="292.6,-331.0 292.6,-331.0 226.6,-332.8 231.0,-332.1" fill="#787878" stroke="#787878" stroke-width="0.7" stroke-linejoin="round" /><polygon points="292.6,-331.0 292.6,-331.0 353.8,-332.1 358.0,-332.8" fill="#727272" stroke="#727272" stroke-width="0.7" stroke-linejoin="round" /><polygon points="324.0,362.8 322.3,363.6 389.4,361.0 389.4,361.0" fill="#3b3936" stroke="#3b3936" stroke-width="0.7" stroke-linejoin="round" /><polygon points="292.6,-331.0 292.6,-331.0 224.7,-333.6 226.6,-332.8" fill="#787878" stroke="#787878" stroke-width="0.7" stroke-linejoin="round" /><polygon points="457.3,363.6 455.4,362.8 389.4,361.0 389.4,361.0" fill="#403e3b" stroke="#403e3b" stroke-width="0.7" stroke-linejoin="round" /><polygon points="292.6,-331.0 292.6,-331.0 358.0,-332.8 359.7,-333.6" fill="#727272" stroke="#727272" stroke-width="0.7" stroke-linejoin="round" /><polygon points="292.6,-331.0 292.6,-331.0 225.4,-334.4 224.7,-333.6" fill="#787878" stroke="#787878" stroke-width="0.7" stroke-linejoin="round" /><polygon points="292.6,-331.0 292.6,-331.0 359.7,-333.6 358.8,-334.4" fill="#727272" stroke="#727272" stroke-width="0.7" stroke-linejoin="round" /><polygon points="322.3,363.6 323.2,364.4 389.4,361.0 389.4,361.0" fill="#3b3936" stroke="#3b3936" stroke-width="0.7" stroke-linejoin="round" /><polygon points="456.6,364.4 457.3,363.6 389.4,361.0 389.4,361.0" fill="#403e3b" stroke="#403e3b" stroke-width="0.7" stroke-linejoin="round" /><polygon points="292.6,-331.0 292.6,-331.0 358.8,-334.4 355.3,-335.1" fill="#727272" stroke="#727272" stroke-width="0.7" stroke-linejoin="round" /><polygon points="292.6,-331.0 292.6,-331.0 228.7,-335.1 225.4,-334.4" fill="#787878" stroke="#787878" stroke-width="0.7" stroke-linejoin="round" /><polygon points="453.3,365.1 456.6,364.4 389.4,361.0 389.4,361.0" fill="#403e3b" stroke="#403e3b" stroke-width="0.7" stroke-linejoin="round" /><polygon points="323.2,364.4 326.7,365.1 389.4,361.0 389.4,361.0" fill="#3b3936" stroke="#3b3936" stroke-width="0.7" stroke-linejoin="round" /><polygon points="224.7,-333.6 225.4,-334.4 161.8,-323.2 161.4,-321.8" fill="#7d7d7d" stroke="#7d7d7d" stroke-width="0.7" stroke-linejoin="round" /><polygon points="255.7,351.8 256.5,353.2 323.2,364.4 322.3,363.6" fill="#33302d" stroke="#33302d" stroke-width="0.7" stroke-linejoin="round" /><polygon points="358.8,-334.4 359.7,-333.6 426.3,-321.8 425.5,-323.2" fill="#676767" stroke="#676767" stroke-width="0.7" stroke-linejoin="round" /><polygon points="520.2,353.2 520.6,351.8 457.3,363.6 456.6,364.4" fill="#454341" stroke="#454341" stroke-width="0.7" stroke-linejoin="round" /><polygon points="292.6,-331.0 292.6,-331.0 234.5,-335.8 228.7,-335.1" fill="#787878" stroke="#787878" stroke-width="0.7" stroke-linejoin="round" /><polygon points="292.6,-331.0 292.6,-331.0 355.3,-335.1 349.2,-335.8" fill="#737373" stroke="#737373" stroke-width="0.7" stroke-linejoin="round" /><polygon points="326.7,365.1 332.8,365.8 389.4,361.0 389.4,361.0" fill="#3c3a37" stroke="#3c3a37" stroke-width="0.7" stroke-linejoin="round" /><polygon points="447.5,365.8 453.3,365.1 389.4,361.0 389.4,361.0" fill="#403e3b" stroke="#403e3b" stroke-width="0.7" stroke-linejoin="round" /><polygon points="161.4,-321.8 161.8,-323.2 104.7,-296.9 105.4,-295.1" fill="#828282" stroke="#828282" stroke-width="0.7" stroke-linejoin="round" /><polygon points="192.2,325.1 192.1,326.9 256.5,353.2 255.7,351.8" fill="#2b2825" stroke="#2b2825" stroke-width="0.7" stroke-linejoin="round" /><polygon points="425.5,-323.2 426.3,-321.8 489.8,-295.1 489.9,-296.9" fill="#535251" stroke="#535251" stroke-width="0.7" stroke-linejoin="round" /><polygon points="577.3,326.9 576.6,325.1 520.6,351.8 520.2,353.2" fill="#484745" stroke="#484745" stroke-width="0.7" stroke-linejoin="round" /><polygon points="292.6,-331.0 292.6,-331.0 242.8,-336.4 234.5,-335.8" fill="#787878" stroke="#787878" stroke-width="0.7" stroke-linejoin="round" /><polygon points="292.6,-331.0 292.6,-331.0 349.2,-335.8 340.8,-336.4" fill="#737373" stroke="#737373" stroke-width="0.7" stroke-linejoin="round" /><polygon points="332.8,365.8 341.2,366.4 389.4,361.0 389.4,361.0" fill="#3c3a37" stroke="#3c3a37" stroke-width="0.7" stroke-linejoin="round" /><polygon points="439.2,366.4 447.5,365.8 389.4,361.0 389.4,361.0" fill="#3f3e3b" stroke="#3f3e3b" stroke-width="0.7" stroke-linejoin="round" /><polygon points="134.0,283.9 132.3,285.9 192.1,326.9 192.2,325.1" fill="#2f2d29" stroke="#2f2d29" stroke-width="0.7" stroke-linejoin="round" /><polygon points="105.4,-295.1 104.7,-296.9 56.5,-255.9 58.7,-253.9" fill="#868686" stroke="#868686" stroke-width="0.7" stroke-linejoin="round" /><polygon points="489.9,-296.9 489.8,-295.1 548.0,-253.9 549.7,-255.9" fill="#444240" stroke="#444240" stroke-width="0.7" stroke-linejoin="round" /><polygon points="625.5,285.9 623.3,283.9 576.6,325.1 577.3,326.9" fill="#4b4947" stroke="#4b4947" stroke-width="0.7" stroke-linejoin="round" /><polygon points="292.6,-331.0 292.6,-331.0 253.0,-336.9 242.8,-336.4" fill="#777777" stroke="#777777" stroke-width="0.7" stroke-linejoin="round" /><polygon points="292.6,-331.0 292.6,-331.0 340.8,-336.4 330.4,-336.9" fill="#737373" stroke="#737373" stroke-width="0.7" stroke-linejoin="round" /><polygon points="341.2,366.4 351.6,366.9 389.4,361.0 389.4,361.0" fill="#3c3a37" stroke="#3c3a37" stroke-width="0.7" stroke-linejoin="round" /><polygon points="429.0,366.9 439.2,366.4 389.4,361.0 389.4,361.0" fill="#3f3d3a" stroke="#3f3d3a" stroke-width="0.7" stroke-linejoin="round" /><polygon points="58.7,-253.9 56.5,-255.9 19.4,-201.5 23.3,-199.6" fill="#878787" stroke="#878787" stroke-width="0.7" stroke-linejoin="round" /><polygon points="83.4,229.6 80.0,231.5 132.3,285.9 134.0,283.9" fill="#4a4947" stroke="#4a4947" stroke-width="0.7" stroke-linejoin="round" /><polygon points="549.7,-255.9 548.0,-253.9 598.6,-199.6 602.0,-201.5" fill="#41403d" stroke="#41403d" stroke-width="0.7" stroke-linejoin="round" /><polygon points="662.6,231.5 658.7,229.6 623.3,283.9 625.5,285.9" fill="#4b4a48" stroke="#4b4a48" stroke-width="0.7" stroke-linejoin="round" /><polygon points="355.3,-335.1 358.8,-334.4 425.5,-323.2 419.4,-324.6" fill="#676767" stroke="#676767" stroke-width="0.7" stroke-linejoin="round" /><polygon points="225.4,-334.4 228.7,-335.1 167.5,-324.6 161.8,-323.2" fill="#7d7d7d" stroke="#7d7d7d" stroke-width="0.7" stroke-linejoin="round" /><polygon points="514.5,354.6 520.2,353.2 456.6,364.4 453.3,365.1" fill="#454341" stroke="#454341" stroke-width="0.7" stroke-linejoin="round" /><polygon points="256.5,353.2 262.6,354.6 326.7,365.1 323.2,364.4" fill="#33302d" stroke="#33302d" stroke-width="0.7" stroke-linejoin="round" /><polygon points="292.6,-331.0 292.6,-331.0 330.4,-336.9 318.4,-337.3" fill="#747474" stroke="#747474" stroke-width="0.7" stroke-linejoin="round" /><polygon points="292.6,-331.0 292.6,-331.0 264.9,-337.3 253.0,-336.9" fill="#777777" stroke="#777777" stroke-width="0.7" stroke-linejoin="round" /><polygon points="351.6,366.9 363.6,367.3 389.4,361.0 389.4,361.0" fill="#3d3b38" stroke="#3d3b38" stroke-width="0.7" stroke-linejoin="round" /><polygon points="417.1,367.3 429.0,366.9 389.4,361.0 389.4,361.0" fill="#3f3d3a" stroke="#3f3d3a" stroke-width="0.7" stroke-linejoin="round" /><polygon points="23.3,-199.6 19.4,-201.5 -5.0,-136.0 0.4,-134.5" fill="#878787" stroke="#878787" stroke-width="0.7" stroke-linejoin="round" /><polygon points="42.3,164.5 37.3,166.0 80.0,231.5 83.4,229.6" fill="#6f6f6f" stroke="#6f6f6f" stroke-width="0.7" stroke-linejoin="round" /><polygon points="602.0,-201.5 598.6,-199.6 639.7,-134.5 644.7,-136.0" fill="#444240" stroke="#444240" stroke-width="0.7" stroke-linejoin="round" /><polygon points="687.0,166.0 681.6,164.5 658.7,229.6 662.6,231.5" fill="#4a4846" stroke="#4a4846" stroke-width="0.7" stroke-linejoin="round" /><polygon points="292.6,-331.0 292.6,-331.0 278.0,-337.5 264.9,-337.3" fill="#767676" stroke="#767676" stroke-width="0.7" stroke-linejoin="round" /><polygon points="292.6,-331.0 292.6,-331.0 318.4,-337.3 305.3,-337.5" fill="#757575" stroke="#757575" stroke-width="0.7" stroke-linejoin="round" /><polygon points="363.6,367.3 376.7,367.5 389.4,361.0 389.4,361.0" fill="#3d3b38" stroke="#3d3b38" stroke-width="0.7" stroke-linejoin="round" /><polygon points="404.0,367.5 417.1,367.3 389.4,361.0 389.4,361.0" fill="#3e3c3a" stroke="#3e3c3a" stroke-width="0.7" stroke-linejoin="round" /><polygon points="0.4,-134.5 -5.0,-136.0 -15.4,-62.5 -9.1,-61.8" fill="#878787" stroke="#878787" stroke-width="0.7" stroke-linejoin="round" /><polygon points="12.4,91.8 6.3,92.5 37.3,166.0 42.3,164.5" fill="#808080" stroke="#808080" stroke-width="0.7" stroke-linejoin="round" /><polygon points="644.7,-136.0 639.7,-134.5 669.6,-61.8 675.7,-62.5" fill="#474543" stroke="#474543" stroke-width="0.7" stroke-linejoin="round" /><polygon points="697.4,92.5 691.1,91.8 681.6,164.5 687.0,166.0" fill="#484745" stroke="#484745" stroke-width="0.7" stroke-linejoin="round" /><polygon points="292.6,-331.0 292.6,-331.0 305.3,-337.5 291.6,-337.6" fill="#757575" stroke="#757575" stroke-width="0.7" stroke-linejoin="round" /><polygon points="292.6,-331.0 292.6,-331.0 291.6,-337.6 278.0,-337.5" fill="#767676" stroke="#767676" stroke-width="0.7" stroke-linejoin="round" /><polygon points="376.7,367.5 390.4,367.6 389.4,361.0 389.4,361.0" fill="#3e3b39" stroke="#3e3b39" stroke-width="0.7" stroke-linejoin="round" /><polygon points="390.4,367.6 404.0,367.5 389.4,361.0 389.4,361.0" fill="#3e3c39" stroke="#3e3c39" stroke-width="0.7" stroke-linejoin="round" /><polygon points="-9.1,-61.8 -15.4,-62.5 -11.6,15.0 -5.0,15.0" fill="#878787" stroke="#878787" stroke-width="0.7" stroke-linejoin="round" /><polygon points="-5.0,15.0 -11.6,15.0 6.3,92.5 12.4,91.8" fill="#878787" stroke="#878787" stroke-width="0.7" stroke-linejoin="round" /><polygon points="675.7,-62.5 669.6,-61.8 687.0,15.0 693.6,15.0" fill="#484745" stroke="#484745" stroke-width="0.7" stroke-linejoin="round" /><polygon points="693.6,15.0 687.0,15.0 691.1,91.8 697.4,92.5" fill="#494846" stroke="#494846" stroke-width="0.7" stroke-linejoin="round" /><polygon points="228.7,-335.1 234.5,-335.8 178.5,-325.9 167.5,-324.6" fill="#7d7d7d" stroke="#7d7d7d" stroke-width="0.7" stroke-linejoin="round" /><polygon points="349.2,-335.8 355.3,-335.1 419.4,-324.6 408.1,-325.9" fill="#696969" stroke="#696969" stroke-width="0.7" stroke-linejoin="round" /><polygon points="262.6,354.6 273.9,355.9 332.8,365.8 326.7,365.1" fill="#34312e" stroke="#34312e" stroke-width="0.7" stroke-linejoin="round" /><polygon points="503.5,355.9 514.5,354.6 453.3,365.1 447.5,365.8" fill="#444240" stroke="#444240" stroke-width="0.7" stroke-linejoin="round" /><polygon points="419.4,-324.6 425.5,-323.2 489.9,-296.9 482.2,-298.7" fill="#545352" stroke="#545352" stroke-width="0.7" stroke-linejoin="round" /><polygon points="570.1,328.7 577.3,326.9 520.2,353.2 514.5,354.6" fill="#484745" stroke="#484745" stroke-width="0.7" stroke-linejoin="round" /><polygon points="161.8,-323.2 167.5,-324.6 111.9,-298.7 104.7,-296.9" fill="#828282" stroke="#828282" stroke-width="0.7" stroke-linejoin="round" /><polygon points="192.1,326.9 199.8,328.7 262.6,354.6 256.5,353.2" fill="#2b2925" stroke="#2b2925" stroke-width="0.7" stroke-linejoin="round" /><polygon points="234.5,-335.8 242.8,-336.4 194.4,-327.0 178.5,-325.9" fill="#7c7c7c" stroke="#7c7c7c" stroke-width="0.7" stroke-linejoin="round" /><polygon points="340.8,-336.4 349.2,-335.8 408.1,-325.9 391.8,-327.0" fill="#6b6b6b" stroke="#6b6b6b" stroke-width="0.7" stroke-linejoin="round" /><polygon points="273.9,355.9 290.2,357.0 341.2,366.4 332.8,365.8" fill="#35332f" stroke="#35332f" stroke-width="0.7" stroke-linejoin="round" /><polygon points="487.6,357.0 503.5,355.9 447.5,365.8 439.2,366.4" fill="#43423f" stroke="#43423f" stroke-width="0.7" stroke-linejoin="round" /><polygon points="482.2,-298.7 489.9,-296.9 549.7,-255.9 541.1,-257.9" fill="#454341" stroke="#454341" stroke-width="0.7" stroke-linejoin="round" /><polygon points="104.7,-296.9 111.9,-298.7 64.5,-257.9 56.5,-255.9" fill="#868686" stroke="#868686" stroke-width="0.7" stroke-linejoin="round" /><polygon points="617.5,287.9 625.5,285.9 577.3,326.9 570.1,328.7" fill="#4a4947" stroke="#4a4947" stroke-width="0.7" stroke-linejoin="round" /><polygon points="132.3,285.9 140.9,287.9 199.8,328.7 192.1,326.9" fill="#2f2c29" stroke="#2f2c29" stroke-width="0.7" stroke-linejoin="round" /><polygon points="167.5,-324.6 178.5,-325.9 127.1,-300.4 111.9,-298.7" fill="#818181" stroke="#818181" stroke-width="0.7" stroke-linejoin="round" /><polygon points="199.8,328.7 215.5,330.4 273.9,355.9 262.6,354.6" fill="#2d2a27" stroke="#2d2a27" stroke-width="0.7" stroke-linejoin="round" /><polygon points="408.1,-325.9 419.4,-324.6 482.2,-298.7 466.5,-300.4" fill="#575756" stroke="#575756" stroke-width="0.7" stroke-linejoin="round" /><polygon points="554.9,330.4 570.1,328.7 514.5,354.6 503.5,355.9" fill="#484644" stroke="#484644" stroke-width="0.7" stroke-linejoin="round" /><polygon points="242.8,-336.4 253.0,-336.9 214.8,-327.9 194.4,-327.0" fill="#7b7b7b" stroke="#7b7b7b" stroke-width="0.7" stroke-linejoin="round" /><polygon points="330.4,-336.9 340.8,-336.4 391.8,-327.0 371.2,-327.9" fill="#6e6e6e" stroke="#6e6e6e" stroke-width="0.7" stroke-linejoin="round" /><polygon points="290.2,357.0 310.8,357.9 351.6,366.9 341.2,366.4" fill="#373532" stroke="#373532" stroke-width="0.7" stroke-linejoin="round" /><polygon points="467.2,357.9 487.6,357.0 439.2,366.4 429.0,366.9" fill="#42413e" stroke="#42413e" stroke-width="0.7" stroke-linejoin="round" /><polygon points="541.1,-257.9 549.7,-255.9 602.0,-201.5 593.1,-203.3" fill="#41403d" stroke="#41403d" stroke-width="0.7" stroke-linejoin="round" /><polygon points="56.5,-255.9 64.5,-257.9 27.7,-203.3 19.4,-201.5" fill="#878787" stroke="#878787" stroke-width="0.7" stroke-linejoin="round" /><polygon points="654.3,233.3 662.6,231.5 625.5,285.9 617.5,287.9" fill="#4b4a48" stroke="#4b4a48" stroke-width="0.7" stroke-linejoin="round" /><polygon points="80.0,231.5 88.9,233.3 140.9,287.9 132.3,285.9" fill="#494745" stroke="#494745" stroke-width="0.7" stroke-linejoin="round" /><polygon points="318.4,-337.3 330.4,-336.9 371.2,-327.9 347.2,-328.6" fill="#707070" stroke="#707070" stroke-width="0.7" stroke-linejoin="round" /><polygon points="253.0,-336.9 264.9,-337.3 238.6,-328.6 214.8,-327.9" fill="#797979" stroke="#797979" stroke-width="0.7" stroke-linejoin="round" /><polygon points="443.4,358.6 467.2,357.9 429.0,366.9 417.1,367.3" fill="#413f3d" stroke="#413f3d" stroke-width="0.7" stroke-linejoin="round" /><polygon points="310.8,357.9 334.8,358.6 363.6,367.3 351.6,366.9" fill="#3a3734" stroke="#3a3734" stroke-width="0.7" stroke-linejoin="round" /><polygon points="593.1,-203.3 602.0,-201.5 644.7,-136.0 635.9,-137.3" fill="#43423f" stroke="#43423f" stroke-width="0.7" stroke-linejoin="round" /><polygon points="678.5,167.3 687.0,166.0 662.6,231.5 654.3,233.3" fill="#4a4846" stroke="#4a4846" stroke-width="0.7" stroke-linejoin="round" /><polygon points="19.4,-201.5 27.7,-203.3 3.5,-137.3 -5.0,-136.0" fill="#878787" stroke="#878787" stroke-width="0.7" stroke-linejoin="round" /><polygon points="37.3,166.0 46.1,167.3 88.9,233.3 80.0,231.5" fill="#6e6e6e" stroke="#6e6e6e" stroke-width="0.7" stroke-linejoin="round" /><polygon points="264.9,-337.3 278.0,-337.5 265.1,-329.0 238.6,-328.6" fill="#787878" stroke="#787878" stroke-width="0.7" stroke-linejoin="round" /><polygon points="305.3,-337.5 318.4,-337.3 347.2,-328.6 320.6,-329.0" fill="#737373" stroke="#737373" stroke-width="0.7" stroke-linejoin="round" /><polygon points="334.8,358.6 361.4,359.0 376.7,367.5 363.6,367.3" fill="#3c3937" stroke="#3c3937" stroke-width="0.7" stroke-linejoin="round" /><polygon points="416.9,359.0 443.4,358.6 417.1,367.3 404.0,367.5" fill="#403e3b" stroke="#403e3b" stroke-width="0.7" stroke-linejoin="round" /><polygon points="635.9,-137.3 644.7,-136.0 675.7,-62.5 667.1,-63.3" fill="#464543" stroke="#464543" stroke-width="0.7" stroke-linejoin="round" /><polygon points="689.0,93.3 697.4,92.5 687.0,166.0 678.5,167.3" fill="#484745" stroke="#484745" stroke-width="0.7" stroke-linejoin="round" /><polygon points="-5.0,-136.0 3.5,-137.3 -7.0,-63.3 -15.4,-62.5" fill="#878787" stroke="#878787" stroke-width="0.7" stroke-linejoin="round" /><polygon points="6.3,92.5 14.9,93.3 46.1,167.3 37.3,166.0" fill="#808080" stroke="#808080" stroke-width="0.7" stroke-linejoin="round" /><polygon points="278.0,-337.5 291.6,-337.6 292.8,-329.1 265.1,-329.0" fill="#767676" stroke="#767676" stroke-width="0.7" stroke-linejoin="round" /><polygon points="291.6,-337.6 305.3,-337.5 320.6,-329.0 292.8,-329.1" fill="#747474" stroke="#747474" stroke-width="0.7" stroke-linejoin="round" /><polygon points="389.2,359.1 416.9,359.0 404.0,367.5 390.4,367.6" fill="#3e3c3a" stroke="#3e3c3a" stroke-width="0.7" stroke-linejoin="round" /><polygon points="361.4,359.0 389.2,359.1 390.4,367.6 376.7,367.5" fill="#3d3b38" stroke="#3d3b38" stroke-width="0.7" stroke-linejoin="round" /><polygon points="667.1,-63.3 675.7,-62.5 693.6,15.0 685.1,15.0" fill="#484745" stroke="#484745" stroke-width="0.7" stroke-linejoin="round" /><polygon points="685.1,15.0 693.6,15.0 697.4,92.5 689.0,93.3" fill="#494846" stroke="#494846" stroke-width="0.7" stroke-linejoin="round" /><polygon points="-15.4,-62.5 -7.0,-63.3 -3.1,15.0 -11.6,15.0" fill="#878787" stroke="#878787" stroke-width="0.7" stroke-linejoin="round" /><polygon points="-11.6,15.0 -3.1,15.0 14.9,93.3 6.3,92.5" fill="#878787" stroke="#878787" stroke-width="0.7" stroke-linejoin="round" /><polygon points="215.5,330.4 238.8,331.8 290.2,357.0 273.9,355.9" fill="#2f2c29" stroke="#2f2c29" stroke-width="0.7" stroke-linejoin="round" /><polygon points="178.5,-325.9 194.4,-327.0 150.0,-301.8 127.1,-300.4" fill="#808080" stroke="#808080" stroke-width="0.7" stroke-linejoin="round" /><polygon points="391.8,-327.0 408.1,-325.9 466.5,-300.4 443.2,-301.8" fill="#5d5d5c" stroke="#5d5d5c" stroke-width="0.7" stroke-linejoin="round" /><polygon points="532.0,331.8 554.9,330.4 503.5,355.9 487.6,357.0" fill="#464543" stroke="#464543" stroke-width="0.7" stroke-linejoin="round" /><polygon points="140.9,287.9 160.0,289.6 215.5,330.4 199.8,328.7" fill="#2e2b28" stroke="#2e2b28" stroke-width="0.7" stroke-linejoin="round" /><polygon points="111.9,-298.7 127.1,-300.4 83.1,-259.6 64.5,-257.9" fill="#858585" stroke="#858585" stroke-width="0.7" stroke-linejoin="round" /><polygon points="466.5,-300.4 482.2,-298.7 541.1,-257.9 522.0,-259.6" fill="#474543" stroke="#474543" stroke-width="0.7" stroke-linejoin="round" /><polygon points="598.9,289.6 617.5,287.9 570.1,328.7 554.9,330.4" fill="#4a4847" stroke="#4a4847" stroke-width="0.7" stroke-linejoin="round" /><polygon points="502.2,333.0 532.0,331.8 487.6,357.0 467.2,357.9" fill="#454341" stroke="#454341" stroke-width="0.7" stroke-linejoin="round" /><polygon points="238.8,331.8 268.9,333.0 310.8,357.9 290.2,357.0" fill="#312e2b" stroke="#312e2b" stroke-width="0.7" stroke-linejoin="round" /><polygon points="371.2,-327.9 391.8,-327.0 443.2,-301.8 413.1,-303.0" fill="#636363" stroke="#636363" stroke-width="0.7" stroke-linejoin="round" /><polygon points="194.4,-327.0 214.8,-327.9 179.8,-303.0 150.0,-301.8" fill="#7e7e7e" stroke="#7e7e7e" stroke-width="0.7" stroke-linejoin="round" /><polygon points="64.5,-257.9 83.1,-259.6 48.9,-204.9 27.7,-203.3" fill="#878787" stroke="#878787" stroke-width="0.7" stroke-linejoin="round" /><polygon points="88.9,233.3 110.5,234.9 160.0,289.6 140.9,287.9" fill="#474543" stroke="#474543" stroke-width="0.7" stroke-linejoin="round" /><polygon points="522.0,-259.6 541.1,-257.9 593.1,-203.3 571.5,-204.9" fill="#42403d" stroke="#42403d" stroke-width="0.7" stroke-linejoin="round" /><polygon points="633.1,234.9 654.3,233.3 617.5,287.9 598.9,289.6" fill="#4a4947" stroke="#4a4947" stroke-width="0.7" stroke-linejoin="round" /><polygon points="127.1,-300.4 150.0,-301.8 112.0,-261.2 83.1,-259.6" fill="#838383" stroke="#838383" stroke-width="0.7" stroke-linejoin="round" /><polygon points="160.0,289.6 189.4,291.2 238.8,331.8 215.5,330.4" fill="#2d2b27" stroke="#2d2b27" stroke-width="0.7" stroke-linejoin="round" /><polygon points="443.2,-301.8 466.5,-300.4 522.0,-259.6 492.6,-261.2" fill="#4c4b49" stroke="#4c4b49" stroke-width="0.7" stroke-linejoin="round" /><polygon points="570.0,291.2 598.9,289.6 554.9,330.4 532.0,331.8" fill="#494745" stroke="#494745" stroke-width="0.7" stroke-linejoin="round" /><polygon points="214.8,-327.9 238.6,-328.6 215.2,-303.9 179.8,-303.0" fill="#7c7c7c" stroke="#7c7c7c" stroke-width="0.7" stroke-linejoin="round" /><polygon points="347.2,-328.6 371.2,-327.9 413.1,-303.0 377.5,-303.9" fill="#6a6a6a" stroke="#6a6a6a" stroke-width="0.7" stroke-linejoin="round" /><polygon points="466.8,333.9 502.2,333.0 467.2,357.9 443.4,358.6" fill="#43413e" stroke="#43413e" stroke-width="0.7" stroke-linejoin="round" /><polygon points="268.9,333.0 304.5,333.9 334.8,358.6 310.8,357.9" fill="#34312e" stroke="#34312e" stroke-width="0.7" stroke-linejoin="round" /><polygon points="27.7,-203.3 48.9,-204.9 26.4,-138.6 3.5,-137.3" fill="#878787" stroke="#878787" stroke-width="0.7" stroke-linejoin="round" /><polygon points="46.1,167.3 69.4,168.6 110.5,234.9 88.9,233.3" fill="#6d6d6d" stroke="#6d6d6d" stroke-width="0.7" stroke-linejoin="round" /><polygon points="571.5,-204.9 593.1,-203.3 635.9,-137.3 612.6,-138.6" fill="#42413e" stroke="#42413e" stroke-width="0.7" stroke-linejoin="round" /><polygon points="655.6,168.6 678.5,167.3 654.3,233.3 633.1,234.9" fill="#494846" stroke="#494846" stroke-width="0.7" stroke-linejoin="round" /><polygon points="238.6,-328.6 265.1,-329.0 254.7,-304.5 215.2,-303.9" fill="#797979" stroke="#797979" stroke-width="0.7" stroke-linejoin="round" /><polygon points="427.3,334.5 466.8,333.9 443.4,358.6 416.9,359.0" fill="#403e3b" stroke="#403e3b" stroke-width="0.7" stroke-linejoin="round" /><polygon points="304.5,333.9 344.1,334.5 361.4,359.0 334.8,358.6" fill="#383632" stroke="#383632" stroke-width="0.7" stroke-linejoin="round" /><polygon points="320.6,-329.0 347.2,-328.6 377.5,-303.9 337.9,-304.5" fill="#707070" stroke="#707070" stroke-width="0.7" stroke-linejoin="round" /><polygon points="3.5,-137.3 26.4,-138.6 17.0,-64.0 -7.0,-63.3" fill="#878787" stroke="#878787" stroke-width="0.7" stroke-linejoin="round" /><polygon points="14.9,93.3 39.1,94.0 69.4,168.6 46.1,167.3" fill="#808080" stroke="#808080" stroke-width="0.7" stroke-linejoin="round" /><polygon points="612.6,-138.6 635.9,-137.3 667.1,-63.3 642.9,-64.0" fill="#454341" stroke="#454341" stroke-width="0.7" stroke-linejoin="round" /><polygon points="665.0,94.0 689.0,93.3 678.5,167.3 655.6,168.6" fill="#474643" stroke="#474643" stroke-width="0.7" stroke-linejoin="round" /><polygon points="292.8,-329.1 320.6,-329.0 337.9,-304.5 296.2,-304.7" fill="#747474" stroke="#747474" stroke-width="0.7" stroke-linejoin="round" /><polygon points="265.1,-329.0 292.8,-329.1 296.2,-304.7 254.7,-304.5" fill="#777777" stroke="#777777" stroke-width="0.7" stroke-linejoin="round" /><polygon points="385.8,334.7 427.3,334.5 416.9,359.0 389.2,359.1" fill="#3d3b38" stroke="#3d3b38" stroke-width="0.7" stroke-linejoin="round" /><polygon points="344.1,334.5 385.8,334.7 389.2,359.1 361.4,359.0" fill="#3b3936" stroke="#3b3936" stroke-width="0.7" stroke-linejoin="round" /><polygon points="-7.0,-63.3 17.0,-64.0 21.3,15.0 -3.1,15.0" fill="#878787" stroke="#878787" stroke-width="0.7" stroke-linejoin="round" /><polygon points="-3.1,15.0 21.3,15.0 39.1,94.0 14.9,93.3" fill="#878787" stroke="#878787" stroke-width="0.7" stroke-linejoin="round" /><polygon points="642.9,-64.0 667.1,-63.3 685.1,15.0 660.7,15.0" fill="#474643" stroke="#474643" stroke-width="0.7" stroke-linejoin="round" /><polygon points="660.7,15.0 685.1,15.0 689.0,93.3 665.0,94.0" fill="#484644" stroke="#484644" stroke-width="0.7" stroke-linejoin="round" /><polygon points="150.0,-301.8 179.8,-303.0 150.2,-262.5 112.0,-261.2" fill="#818181" stroke="#818181" stroke-width="0.7" stroke-linejoin="round" /><polygon points="189.4,291.2 227.9,292.5 268.9,333.0 238.8,331.8" fill="#2e2c28" stroke="#2e2c28" stroke-width="0.7" stroke-linejoin="round" /><polygon points="413.1,-303.0 443.2,-301.8 492.6,-261.2 454.1,-262.5" fill="#555453" stroke="#555453" stroke-width="0.7" stroke-linejoin="round" /><polygon points="531.8,292.5 570.0,291.2 532.0,331.8 502.2,333.0" fill="#464543" stroke="#464543" stroke-width="0.7" stroke-linejoin="round" /><polygon points="83.1,-259.6 112.0,-261.2 82.7,-206.4 48.9,-204.9" fill="#868686" stroke="#868686" stroke-width="0.7" stroke-linejoin="round" /><polygon points="110.5,234.9 144.6,236.4 189.4,291.2 160.0,289.6" fill="#454341" stroke="#454341" stroke-width="0.7" stroke-linejoin="round" /><polygon points="492.6,-261.2 522.0,-259.6 571.5,-204.9 537.4,-206.4" fill="#43413f" stroke="#43413f" stroke-width="0.7" stroke-linejoin="round" /><polygon points="599.3,236.4 633.1,234.9 598.9,289.6 570.0,291.2" fill="#494846" stroke="#494846" stroke-width="0.7" stroke-linejoin="round" /><polygon points="377.5,-303.9 413.1,-303.0 454.1,-262.5 407.9,-263.5" fill="#616161" stroke="#616161" stroke-width="0.7" stroke-linejoin="round" /><polygon points="179.8,-303.0 215.2,-303.9 196.2,-263.5 150.2,-262.5" fill="#7e7e7e" stroke="#7e7e7e" stroke-width="0.7" stroke-linejoin="round" /><polygon points="485.8,293.5 531.8,292.5 502.2,333.0 466.8,333.9" fill="#43413f" stroke="#43413f" stroke-width="0.7" stroke-linejoin="round" /><polygon points="227.9,292.5 274.1,293.5 304.5,333.9 268.9,333.0" fill="#312e2b" stroke="#312e2b" stroke-width="0.7" stroke-linejoin="round" /><polygon points="48.9,-204.9 82.7,-206.4 63.8,-139.7 26.4,-138.6" fill="#878787" stroke="#878787" stroke-width="0.7" stroke-linejoin="round" /><polygon points="69.4,168.6 107.1,169.7 144.6,236.4 110.5,234.9" fill="#6c6c6c" stroke="#6c6c6c" stroke-width="0.7" stroke-linejoin="round" /><polygon points="537.4,-206.4 571.5,-204.9 612.6,-138.6 574.9,-139.7" fill="#41403d" stroke="#41403d" stroke-width="0.7" stroke-linejoin="round" /><polygon points="618.2,169.7 655.6,168.6 633.1,234.9 599.3,236.4" fill="#474644" stroke="#474644" stroke-width="0.7" stroke-linejoin="round" /><polygon points="112.0,-261.2 150.2,-262.5 127.9,-207.6 82.7,-206.4" fill="#838383" stroke="#838383" stroke-width="0.7" stroke-linejoin="round" /><polygon points="454.1,-262.5 492.6,-261.2 537.4,-206.4 491.8,-207.6" fill="#484745" stroke="#484745" stroke-width="0.7" stroke-linejoin="round" /><polygon points="144.6,236.4 190.2,237.6 227.9,292.5 189.4,291.2" fill="#413f3c" stroke="#413f3c" stroke-width="0.7" stroke-linejoin="round" /><polygon points="554.1,237.6 599.3,236.4 570.0,291.2 531.8,292.5" fill="#474543" stroke="#474543" stroke-width="0.7" stroke-linejoin="round" /><polygon points="337.9,-304.5 377.5,-303.9 407.9,-263.5 356.3,-264.1" fill="#6c6c6c" stroke="#6c6c6c" stroke-width="0.7" stroke-linejoin="round" /><polygon points="215.2,-303.9 254.7,-304.5 247.6,-264.1 196.2,-263.5" fill="#7b7b7b" stroke="#7b7b7b" stroke-width="0.7" stroke-linejoin="round" /><polygon points="434.4,294.1 485.8,293.5 466.8,333.9 427.3,334.5" fill="#3e3c3a" stroke="#3e3c3a" stroke-width="0.7" stroke-linejoin="round" /><polygon points="274.1,293.5 325.7,294.1 344.1,334.5 304.5,333.9" fill="#322f2c" stroke="#322f2c" stroke-width="0.7" stroke-linejoin="round" /><polygon points="26.4,-138.6 63.8,-139.7 56.6,-64.6 17.0,-64.0" fill="#878787" stroke="#878787" stroke-width="0.7" stroke-linejoin="round" /><polygon points="39.1,94.0 78.9,94.6 107.1,169.7 69.4,168.6" fill="#808080" stroke="#808080" stroke-width="0.7" stroke-linejoin="round" /><polygon points="574.9,-139.7 612.6,-138.6 642.9,-64.0 603.1,-64.6" fill="#43413f" stroke="#43413f" stroke-width="0.7" stroke-linejoin="round" /><polygon points="625.4,94.6 665.0,94.0 655.6,168.6 618.2,169.7" fill="#444341" stroke="#444341" stroke-width="0.7" stroke-linejoin="round" /><polygon points="296.2,-304.7 337.9,-304.5 356.3,-264.1 301.9,-264.3" fill="#737373" stroke="#737373" stroke-width="0.7" stroke-linejoin="round" /><polygon points="254.7,-304.5 296.2,-304.7 301.9,-264.3 247.6,-264.1" fill="#777777" stroke="#777777" stroke-width="0.7" stroke-linejoin="round" /><polygon points="380.1,294.3 434.4,294.1 427.3,334.5 385.8,334.7" fill="#393734" stroke="#393734" stroke-width="0.7" stroke-linejoin="round" /><polygon points="325.7,294.1 380.1,294.3 385.8,334.7 344.1,334.5" fill="#35332f" stroke="#35332f" stroke-width="0.7" stroke-linejoin="round" /><polygon points="17.0,-64.0 56.6,-64.6 61.7,15.0 21.3,15.0" fill="#878787" stroke="#878787" stroke-width="0.7" stroke-linejoin="round" /><polygon points="21.3,15.0 61.7,15.0 78.9,94.6 39.1,94.0" fill="#878787" stroke="#878787" stroke-width="0.7" stroke-linejoin="round" /><polygon points="603.1,-64.6 642.9,-64.0 660.7,15.0 620.3,15.0" fill="#444340" stroke="#444340" stroke-width="0.7" stroke-linejoin="round" /><polygon points="620.3,15.0 660.7,15.0 665.0,94.0 625.4,94.6" fill="#454441" stroke="#454441" stroke-width="0.7" stroke-linejoin="round" /><polygon points="150.2,-262.5 196.2,-263.5 182.7,-208.5 127.9,-207.6" fill="#7f7f7f" stroke="#7f7f7f" stroke-width="0.7" stroke-linejoin="round" /><polygon points="407.9,-263.5 454.1,-262.5 491.8,-207.6 436.7,-208.5" fill="#565655" stroke="#565655" stroke-width="0.7" stroke-linejoin="round" /><polygon points="190.2,237.6 245.3,238.5 274.1,293.5 227.9,292.5" fill="#3c3a37" stroke="#3c3a37" stroke-width="0.7" stroke-linejoin="round" /><polygon points="499.3,238.5 554.1,237.6 531.8,292.5 485.8,293.5" fill="#42403e" stroke="#42403e" stroke-width="0.7" stroke-linejoin="round" /><polygon points="82.7,-206.4 127.9,-207.6 114.3,-140.6 63.8,-139.7" fill="#858585" stroke="#858585" stroke-width="0.7" stroke-linejoin="round" /><polygon points="107.1,169.7 157.9,170.6 190.2,237.6 144.6,236.4" fill="#676767" stroke="#676767" stroke-width="0.7" stroke-linejoin="round" /><polygon points="491.8,-207.6 537.4,-206.4 574.9,-139.7 524.1,-140.6" fill="#43413f" stroke="#43413f" stroke-width="0.7" stroke-linejoin="round" /><polygon points="567.7,170.6 618.2,169.7 599.3,236.4 554.1,237.6" fill="#454341" stroke="#454341" stroke-width="0.7" stroke-linejoin="round" /><polygon points="196.2,-263.5 247.6,-264.1 244.4,-209.0 182.7,-208.5" fill="#7b7b7b" stroke="#7b7b7b" stroke-width="0.7" stroke-linejoin="round" /><polygon points="356.3,-264.1 407.9,-263.5 436.7,-208.5 374.9,-209.0" fill="#666666" stroke="#666666" stroke-width="0.7" stroke-linejoin="round" /><polygon points="245.3,238.5 307.1,239.0 325.7,294.1 274.1,293.5" fill="#383632" stroke="#383632" stroke-width="0.7" stroke-linejoin="round" /><polygon points="437.6,239.0 499.3,238.5 485.8,293.5 434.4,294.1" fill="#3c3a37" stroke="#3c3a37" stroke-width="0.7" stroke-linejoin="round" /><polygon points="63.8,-139.7 114.3,-140.6 110.5,-65.1 56.6,-64.6" fill="#858585" stroke="#858585" stroke-width="0.7" stroke-linejoin="round" /><polygon points="78.9,94.6 132.9,95.1 157.9,170.6 107.1,169.7" fill="#7d7d7d" stroke="#7d7d7d" stroke-width="0.7" stroke-linejoin="round" /><polygon points="524.1,-140.6 574.9,-139.7 603.1,-64.6 549.1,-65.1" fill="#41403d" stroke="#41403d" stroke-width="0.7" stroke-linejoin="round" /><polygon points="571.5,95.1 625.4,94.6 618.2,169.7 567.7,170.6" fill="#403e3c" stroke="#403e3c" stroke-width="0.7" stroke-linejoin="round" /><polygon points="247.6,-264.1 301.9,-264.3 309.6,-209.2 244.4,-209.0" fill="#777777" stroke="#777777" stroke-width="0.7" stroke-linejoin="round" /><polygon points="301.9,-264.3 356.3,-264.1 374.9,-209.0 309.6,-209.2" fill="#717171" stroke="#717171" stroke-width="0.7" stroke-linejoin="round" /><polygon points="372.4,239.2 437.6,239.0 434.4,294.1 380.1,294.3" fill="#34312e" stroke="#34312e" stroke-width="0.7" stroke-linejoin="round" /><polygon points="307.1,239.0 372.4,239.2 380.1,294.3 325.7,294.1" fill="#312e2b" stroke="#312e2b" stroke-width="0.7" stroke-linejoin="round" /><polygon points="56.6,-64.6 110.5,-65.1 116.8,15.0 61.7,15.0" fill="#858585" stroke="#858585" stroke-width="0.7" stroke-linejoin="round" /><polygon points="61.7,15.0 116.8,15.0 132.9,95.1 78.9,94.6" fill="#858585" stroke="#858585" stroke-width="0.7" stroke-linejoin="round" /><polygon points="549.1,-65.1 603.1,-64.6 620.3,15.0 565.2,15.0" fill="#42403d" stroke="#42403d" stroke-width="0.7" stroke-linejoin="round" /><polygon points="565.2,15.0 620.3,15.0 625.4,94.6 571.5,95.1" fill="#42403e" stroke="#42403e" stroke-width="0.7" stroke-linejoin="round" /><polygon points="127.9,-207.6 182.7,-208.5 175.9,-141.3 114.3,-140.6" fill="#818181" stroke="#818181" stroke-width="0.7" stroke-linejoin="round" /><polygon points="436.7,-208.5 491.8,-207.6 524.1,-140.6 462.3,-141.3" fill="#4c4b4a" stroke="#4c4b4a" stroke-width="0.7" stroke-linejoin="round" /><polygon points="157.9,170.6 219.7,171.3 245.3,238.5 190.2,237.6" fill="#606060" stroke="#606060" stroke-width="0.7" stroke-linejoin="round" /><polygon points="506.1,171.3 567.7,170.6 554.1,237.6 499.3,238.5" fill="#403f3c" stroke="#403f3c" stroke-width="0.7" stroke-linejoin="round" /><polygon points="182.7,-208.5 244.4,-209.0 245.4,-141.7 175.9,-141.3" fill="#7c7c7c" stroke="#7c7c7c" stroke-width="0.7" stroke-linejoin="round" /><polygon points="374.9,-209.0 436.7,-208.5 462.3,-141.3 392.7,-141.7" fill="#606060" stroke="#606060" stroke-width="0.7" stroke-linejoin="round" /><polygon points="219.7,171.3 289.3,171.7 307.1,239.0 245.3,238.5" fill="#575655" stroke="#575655" stroke-width="0.7" stroke-linejoin="round" /><polygon points="436.6,171.7 506.1,171.3 499.3,238.5 437.6,239.0" fill="#3a3835" stroke="#3a3835" stroke-width="0.7" stroke-linejoin="round" /><polygon points="114.3,-140.6 175.9,-141.3 176.3,-65.4 110.5,-65.1" fill="#818181" stroke="#818181" stroke-width="0.7" stroke-linejoin="round" /><polygon points="132.9,95.1 198.9,95.4 219.7,171.3 157.9,170.6" fill="#777777" stroke="#777777" stroke-width="0.7" stroke-linejoin="round" /><polygon points="462.3,-141.3 524.1,-140.6 549.1,-65.1 483.1,-65.4" fill="#464542" stroke="#464542" stroke-width="0.7" stroke-linejoin="round" /><polygon points="505.7,95.4 571.5,95.1 567.7,170.6 506.1,171.3" fill="#3d3b38" stroke="#3d3b38" stroke-width="0.7" stroke-linejoin="round" /><polygon points="309.6,-209.2 374.9,-209.0 392.7,-141.7 319.0,-141.9" fill="#6f6f6f" stroke="#6f6f6f" stroke-width="0.7" stroke-linejoin="round" /><polygon points="244.4,-209.0 309.6,-209.2 319.0,-141.9 245.4,-141.7" fill="#767676" stroke="#767676" stroke-width="0.7" stroke-linejoin="round" /><polygon points="363.0,171.9 436.6,171.7 437.6,239.0 372.4,239.2" fill="#393734" stroke="#393734" stroke-width="0.7" stroke-linejoin="round" /><polygon points="289.3,171.7 363.0,171.9 372.4,239.2 307.1,239.0" fill="#494846" stroke="#494846" stroke-width="0.7" stroke-linejoin="round" /><polygon points="110.5,-65.1 176.3,-65.4 184.1,15.0 116.8,15.0" fill="#818181" stroke="#818181" stroke-width="0.7" stroke-linejoin="round" /><polygon points="116.8,15.0 184.1,15.0 198.9,95.4 132.9,95.1" fill="#808080" stroke="#808080" stroke-width="0.7" stroke-linejoin="round" /><polygon points="483.1,-65.4 549.1,-65.1 565.2,15.0 497.9,15.0" fill="#44423f" stroke="#44423f" stroke-width="0.7" stroke-linejoin="round" /><polygon points="497.9,15.0 565.2,15.0 571.5,95.1 505.7,95.4" fill="#43413e" stroke="#43413e" stroke-width="0.7" stroke-linejoin="round" /><polygon points="198.9,95.4 273.4,95.7 289.3,171.7 219.7,171.3" fill="#6f6f6f" stroke="#6f6f6f" stroke-width="0.7" stroke-linejoin="round" /><polygon points="175.9,-141.3 245.4,-141.7 250.8,-65.7 176.3,-65.4" fill="#7c7c7c" stroke="#7c7c7c" stroke-width="0.7" stroke-linejoin="round" /><polygon points="392.7,-141.7 462.3,-141.3 483.1,-65.4 408.6,-65.7" fill="#5a5959" stroke="#5a5959" stroke-width="0.7" stroke-linejoin="round" /><polygon points="431.2,95.7 505.7,95.4 506.1,171.3 436.6,171.7" fill="#43423f" stroke="#43423f" stroke-width="0.7" stroke-linejoin="round" /><polygon points="319.0,-141.9 392.7,-141.7 408.6,-65.7 329.7,-65.7" fill="#6d6d6d" stroke="#6d6d6d" stroke-width="0.7" stroke-linejoin="round" /><polygon points="245.4,-141.7 319.0,-141.9 329.7,-65.7 250.8,-65.7" fill="#767676" stroke="#767676" stroke-width="0.7" stroke-linejoin="round" /><polygon points="352.3,95.7 431.2,95.7 436.6,171.7 363.0,171.9" fill="#595857" stroke="#595857" stroke-width="0.7" stroke-linejoin="round" /><polygon points="273.4,95.7 352.3,95.7 363.0,171.9 289.3,171.7" fill="#696969" stroke="#696969" stroke-width="0.7" stroke-linejoin="round" /><polygon points="176.3,-65.4 250.8,-65.7 260.3,15.0 184.1,15.0" fill="#7b7b7b" stroke="#7b7b7b" stroke-width="0.7" stroke-linejoin="round" /><polygon points="184.1,15.0 260.3,15.0 273.4,95.7 198.9,95.4" fill="#7a7a7a" stroke="#7a7a7a" stroke-width="0.7" stroke-linejoin="round" /><polygon points="408.6,-65.7 483.1,-65.4 497.9,15.0 421.7,15.0" fill="#555453" stroke="#555453" stroke-width="0.7" stroke-linejoin="round" /><polygon points="421.7,15.0 497.9,15.0 505.7,95.4 431.2,95.7" fill="#51504e" stroke="#51504e" stroke-width="0.7" stroke-linejoin="round" /><polygon points="329.7,-65.7 408.6,-65.7 421.7,15.0 341.0,15.0" fill="#6b6b6b" stroke="#6b6b6b" stroke-width="0.7" stroke-linejoin="round" /><polygon points="250.8,-65.7 329.7,-65.7 341.0,15.0 260.3,15.0" fill="#757575" stroke="#757575" stroke-width="0.7" stroke-linejoin="round" /><polygon points="341.0,15.0 421.7,15.0 431.2,95.7 352.3,95.7" fill="#686868" stroke="#686868" stroke-width="0.7" stroke-linejoin="round" /><polygon points="260.3,15.0 341.0,15.0 352.3,95.7 273.4,95.7" fill="#747474" stroke="#747474" stroke-width="0.7" stroke-linejoin="round" /></g>
<polyline points="0.0,150.0 40.0,215.0 76.0,241.0 121.0,279.0 160.0,300.0 199.0,318.0 262.0,339.5 334.0,352.5 391.0,351.5 432.0,346.0 502.0,319.5 551.0,290.0 571.0,271.0 617.0,213.0 653.0,140.0 670.0,83.0 680.0,40.0" fill="none" stroke="#2a2827" stroke-width="1" stroke-linejoin="round" opacity="0.7"/>
<polygon points="834.3,760.0 842.5,762.4 842.5,841.5 840.9,839.9 839.2,838.2 837.6,836.4 835.9,834.3 834.3,831.6" fill="#858687" stroke="#858687" stroke-width="0.6" stroke-linejoin="round" /><polygon points="842.5,762.4 854.8,766.0 854.8,851.2 852.4,849.5 849.9,847.7 847.4,845.8 845.0,843.7 842.5,841.5" fill="#8e8f90" stroke="#8e8f90" stroke-width="0.6" stroke-linejoin="round" /><polygon points="854.8,766.0 875.4,772.0 875.4,860.4 871.3,859.3 867.2,857.8 863.1,856.0 858.9,853.8 854.8,851.2" fill="#939595" stroke="#939595" stroke-width="0.6" stroke-linejoin="round" /><polygon points="875.4,772.0 887.7,775.6 887.7,861.6 885.2,861.6 882.8,861.5 880.3,861.3 877.8,860.9 875.4,860.4" fill="#8d8e8f" stroke="#8d8e8f" stroke-width="0.6" stroke-linejoin="round" /><polygon points="887.7,775.6 898.0,778.6 898.0,859.9 895.9,860.4 893.9,860.8 891.8,861.2 889.8,861.4 887.7,861.6" fill="#828384" stroke="#828384" stroke-width="0.6" stroke-linejoin="round" /><polygon points="898.0,778.6 908.2,781.6 908.2,856.0 906.2,856.9 904.1,857.8 902.1,858.6 900.0,859.3 898.0,859.9" fill="#767778" stroke="#767778" stroke-width="0.6" stroke-linejoin="round" /><polygon points="908.2,781.6 916.5,784.0 916.5,851.2 914.8,852.3 913.2,853.3 911.5,854.2 909.9,855.1 908.2,856.0" fill="#696a6b" stroke="#696a6b" stroke-width="0.6" stroke-linejoin="round" /><polygon points="916.5,784.0 923.6,786.1 923.6,845.9 922.2,847.1 920.8,848.2 919.3,849.2 917.9,850.2 916.5,851.2" fill="#59595a" stroke="#59595a" stroke-width="0.6" stroke-linejoin="round" /><polygon points="923.6,786.1 929.8,787.9 929.8,840.5 928.6,841.6 927.3,842.8 926.1,843.9 924.9,844.9 923.6,845.9" fill="#484748" stroke="#484748" stroke-width="0.6" stroke-linejoin="round" /><polygon points="929.8,787.9 937.0,790.0 937.0,831.6 935.6,834.1 934.1,835.9 932.7,837.5 931.2,839.0 929.8,840.5" fill="#3c3a3b" stroke="#3c3a3b" stroke-width="0.6" stroke-linejoin="round" />
<polygon points="703.0,317.0 565.0,344.0 548.0,353.0 532.0,370.0 522.0,390.0 517.0,415.0 518.0,442.0 530.8,560.0 534.0,581.0 539.2,604.4 548.8,629.2 562.7,651.4 579.7,671.0 598.0,687.2 617.5,696.3 1000.0,819.6 1079.2,846.3 1111.8,853.1 1143.7,851.5 1172.3,841.9 1197.4,823.7 1214.5,799.0 1273.8,711.2 1282.9,680.4 1289.8,641.6 1297.7,580.0 1306.4,519.4 1306.4,485.1 1296.6,452.1 1278.4,421.3 1253.3,396.6 1222.5,380.2 1189.4,371.5 1000.0,350.5" fill="#959796" stroke="#959796" stroke-width="0.8" stroke-linejoin="round" />
<polygon points="703.0,317.0 1000.0,350.5 1189.4,371.5 1114.0,413.3 1000.0,398.0 565.0,344.0" fill="#8a8b8d" stroke="#8a8b8d" stroke-width="0.8" stroke-linejoin="round" />
<polygon points="1189.4,371.5 1222.5,380.2 1150.6,423.5 1114.0,413.3" fill="#8c8d8f" stroke="#1a1a1a" stroke-width="0.8" stroke-linejoin="round" />
<polygon points="1222.5,380.2 1253.3,396.6 1186.0,443.4 1150.6,423.5" fill="#87888a" stroke="#1a1a1a" stroke-width="0.8" stroke-linejoin="round" />
<polygon points="1253.3,396.6 1278.4,421.3 1215.6,471.9 1186.0,443.4" fill="#7f8083" stroke="#1a1a1a" stroke-width="0.8" stroke-linejoin="round" />
<polygon points="1278.4,421.3 1296.6,452.1 1236.1,506.8 1215.6,471.9" fill="#767779" stroke="#1a1a1a" stroke-width="0.8" stroke-linejoin="round" />
<polygon points="1296.6,452.1 1306.4,485.1 1247.5,544.5 1236.1,506.8" fill="#666668" stroke="#1a1a1a" stroke-width="0.8" stroke-linejoin="round" />
<polygon points="1306.4,485.1 1306.4,519.4 1247.5,582.8 1247.5,544.5" fill="#4e4e4f" stroke="#1a1a1a" stroke-width="0.8" stroke-linejoin="round" />
<polygon points="1306.4,519.4 1297.7,580.0 1289.8,641.6 1282.9,680.4 1223.6,768.2 1247.5,582.8" fill="#403e3f" stroke="#1a1a1a" stroke-width="0.8" stroke-linejoin="round" />
<polygon points="1282.9,680.4 1273.8,711.2 1214.5,799.0 1223.6,768.2" fill="#4a494a" stroke="#1a1a1a" stroke-width="0.8" stroke-linejoin="round" />
<defs><linearGradient id="sel" x1="560" y1="400" x2="1190" y2="800" gradientUnits="userSpaceOnUse"><stop offset="0" stop-color="#b0a79d"/><stop offset="1" stop-color="#b1aa9f"/></linearGradient></defs>
<polygon points="579.6,387.7 593.8,388.4 1000.0,452.5 1105.6,468.7 1131.2,476.0 1152.4,488.6 1170.0,505.7 1182.5,526.2 1188.2,549.0 1189.4,576.0 1170.0,750.0 1164.3,772.8 1154.0,787.6 1139.2,799.0 1122.1,805.2 1102.7,806.3 1079.2,801.8 1000.0,777.4 616.7,661.3 602.4,654.5 590.0,644.9 579.7,633.0 570.5,618.8 564.8,603.0 562.2,584.8 547.8,448.6 547.0,432.7 548.9,420.3 553.0,407.9 560.2,397.3 569.0,390.9" fill="url(#sel)" stroke="#ffffff" stroke-width="1.35" stroke-linejoin="round" />
<polyline points="703.0,317.0 565.0,344.0 548.0,353.0 532.0,370.0 522.0,390.0 517.0,415.0 518.0,442.0 530.8,560.0 534.0,581.0 539.2,604.4 548.8,629.2 562.7,651.4 579.7,671.0 598.0,687.2 617.5,696.3 1000.0,819.6 1079.2,846.3 1111.8,853.1 1143.7,851.5 1172.3,841.9 1197.4,823.7 1214.5,799.0 1273.8,711.2 1282.9,680.4 1289.8,641.6 1297.7,580.0 1306.4,519.4 1306.4,485.1 1296.6,452.1 1278.4,421.3 1253.3,396.6 1222.5,380.2 1189.4,371.5 1000.0,350.5 703.0,317.0" fill="none" stroke="#151515" stroke-width="1.1" stroke-linejoin="round" />
<polyline points="565.0,344.0 1000.0,398.0 1114.0,413.3 1150.6,423.5 1186.0,443.4 1215.6,471.9 1236.1,506.8 1247.5,544.5 1247.5,582.8 1223.6,768.2 1214.5,799.0" fill="none" stroke="#151515" stroke-width="0.9" stroke-linejoin="round" />
<polyline points="565.0,344.0 1000.0,398.0" fill="none" stroke="#151515" stroke-width="0.9" stroke-linejoin="round" />
<polyline points="703.0,317.0 565.0,344.0" fill="none" stroke="#151515" stroke-width="0.9" stroke-linejoin="round" />
<polyline points="703.0,317.0 684.0,318.5 587.7,344.0" fill="none" stroke="#151515" stroke-width="0.8" stroke-linejoin="round" />
<line x1="565.0" y1="344.0" x2="579.6" y2="387.7" stroke="#151515" stroke-width="0.9" />
<line x1="587.7" y1="344.0" x2="593.8" y2="388.4" stroke="#151515" stroke-width="0.9" />
<line x1="548.0" y1="353.0" x2="565.5" y2="393.0" stroke="#151515" stroke-width="0.9" />
<line x1="532.0" y1="370.0" x2="555.6" y2="402.6" stroke="#151515" stroke-width="0.9" />
<line x1="522.0" y1="390.0" x2="548.8" y2="418.5" stroke="#151515" stroke-width="0.9" />
<line x1="517.0" y1="415.0" x2="547.0" y2="431.0" stroke="#151515" stroke-width="0.9" />
<line x1="518.0" y1="442.0" x2="547.8" y2="449.0" stroke="#151515" stroke-width="0.9" />
<line x1="533.3" y1="580.0" x2="562.2" y2="584.8" stroke="#151515" stroke-width="0.9" />
<line x1="539.2" y1="604.4" x2="564.8" y2="603.0" stroke="#151515" stroke-width="0.9" />
<line x1="548.8" y1="629.2" x2="570.5" y2="618.8" stroke="#151515" stroke-width="0.9" />
<line x1="562.7" y1="651.4" x2="579.7" y2="633.0" stroke="#151515" stroke-width="0.9" />
<line x1="579.7" y1="671.0" x2="590.0" y2="644.9" stroke="#151515" stroke-width="0.9" />
<line x1="598.0" y1="687.2" x2="602.4" y2="654.5" stroke="#151515" stroke-width="0.9" />
<line x1="617.5" y1="696.3" x2="616.7" y2="661.3" stroke="#151515" stroke-width="0.9" />
<line x1="1079.2" y1="846.3" x2="1079.2" y2="801.8" stroke="#151515" stroke-width="0.9" />
<line x1="1111.8" y1="853.1" x2="1102.7" y2="806.3" stroke="#151515" stroke-width="0.9" />
<line x1="1143.7" y1="851.5" x2="1122.1" y2="805.2" stroke="#151515" stroke-width="0.9" />
<line x1="1172.3" y1="841.9" x2="1139.2" y2="799.0" stroke="#151515" stroke-width="0.9" />
<line x1="1197.4" y1="823.7" x2="1154.0" y2="787.6" stroke="#151515" stroke-width="0.9" />
<line x1="1214.5" y1="799.0" x2="1164.3" y2="772.8" stroke="#151515" stroke-width="0.9" />
<line x1="1223.6" y1="768.2" x2="1170.0" y2="750.0" stroke="#151515" stroke-width="0.9" />
<line x1="1114.0" y1="413.3" x2="1105.6" y2="468.7" stroke="#151515" stroke-width="0.9" />
<line x1="1150.6" y1="423.5" x2="1131.2" y2="476.0" stroke="#151515" stroke-width="0.9" />
<line x1="1186.0" y1="443.4" x2="1152.4" y2="488.6" stroke="#151515" stroke-width="0.9" />
<line x1="1215.6" y1="471.9" x2="1170.0" y2="505.7" stroke="#151515" stroke-width="0.9" />
<line x1="1236.1" y1="506.8" x2="1182.5" y2="526.2" stroke="#151515" stroke-width="0.9" />
<line x1="1247.5" y1="544.5" x2="1188.2" y2="549.0" stroke="#151515" stroke-width="0.9" />
<line x1="1247.5" y1="582.8" x2="1189.4" y2="576.0" stroke="#151515" stroke-width="0.9" />
<line x1="1223.6" y1="768.2" x2="1282.9" y2="680.4" stroke="#151515" stroke-width="0.9" />
<g>
<line x1="819.0" y1="558.5" x2="819.0" y2="472.0" stroke="#5a8fe8" stroke-width="2" />
<polygon points="812.0,473.0 826.0,473.0 818.5,444.0" fill="#4f8ff7" stroke="#4f8ff7" stroke-width="0.8" stroke-linejoin="round" />
<line x1="832.0" y1="573.0" x2="876.0" y2="547.0" stroke="#f0626e" stroke-width="2" />
<polygon points="873.0,541.0 880.0,554.0 892.0,541.0" fill="#f5505f" stroke="#f5505f" stroke-width="0.8" stroke-linejoin="round" />
<line x1="800.0" y1="576.0" x2="734.0" y2="559.0" stroke="#86d03a" stroke-width="2" />
<polygon points="736.0,552.0 733.0,566.0 709.0,555.0" fill="#88d838" stroke="#88d838" stroke-width="0.8" stroke-linejoin="round" />
<polygon points="759.5,501.0 773.0,504.0 773.5,519.0 760.0,516.5" fill="#ee6a73" stroke="#f0626e" stroke-width="1" stroke-linejoin="round" fill-opacity="0.5"/>
<polygon points="849.0,498.0 858.0,494.0 858.0,509.0 849.0,513.5" fill="#8fd048" stroke="#86d03a" stroke-width="1" stroke-linejoin="round" fill-opacity="0.6"/>
<polygon points="793.0,551.0 805.0,547.5 814.0,550.0 802.0,554.5" fill="#5a8fe8" stroke="#5a8fe8" stroke-width="1" stroke-linejoin="round" fill-opacity="0.6"/>
<circle cx="819.5" cy="581" r="22.5" fill="none" stroke="#e8e6e2" stroke-width="1.8"/>
</g>
<circle cx="1597" cy="811" r="13.5" fill="none" stroke="#ffffff" stroke-width="1.6"/>
<circle cx="1597" cy="811" r="13.5" fill="none" stroke="#e8323c" stroke-width="1.8" stroke-dasharray="5.3 5.3"/>
<line x1="1565.0" y1="807.0" x2="1589.0" y2="810.0" stroke="#222" stroke-width="1.2" />
<line x1="1605.0" y1="812.0" x2="1628.0" y2="816.0" stroke="#222" stroke-width="1.2" />
<line x1="1600.0" y1="783.0" x2="1598.5" y2="803.0" stroke="#222" stroke-width="1.2" />
<line x1="1596.0" y1="819.0" x2="1594.0" y2="838.0" stroke="#222" stroke-width="1.2" />
<line x1="1565.0" y1="807.0" x2="1569.0" y2="807.5" stroke="#e33" stroke-width="1.5" />
<line x1="1624.0" y1="815.5" x2="1629.0" y2="816.5" stroke="#e33" stroke-width="1.5" />
<line x1="1600.3" y1="783.0" x2="1600.0" y2="787.0" stroke="#8c3" stroke-width="1.5" />
<line x1="1594.2" y1="835.0" x2="1594.0" y2="839.0" stroke="#8c3" stroke-width="1.5" />
</svg>
<div class="abs" style="left:0.0px;top:0.0px;width:1724.0px;height:39.0px;background:rgba(46,46,46,0.62);border-radius:0;"></div>
<div class="abs" style="left:0.0px;top:39.0px;width:350.0px;height:36.5px;background:rgba(46,46,46,0.62);border-radius:0 0 8px 0;"></div>
<div class="abs" style="left:1483.2px;top:39.0px;width:240.8px;height:36.5px;background:rgba(46,46,46,0.62);border-radius:0 0 0 7px;"></div>
<div class="abs" style="left:0;top:0;width:1724px;height:1px;background:rgba(255,255,255,0.08)"></div>
<div class="abs" style="left:13.4px;top:5.0px;width:44.9px;height:27.2px;background:#272727;border-radius:6px;"></div>
<svg class="abs" style="left:17.0px;top:5.0px" width="30" height="27" viewBox="0 0 30 27"><g stroke="#e6e6e6" stroke-width="1.5" fill="none" stroke-linecap="round"><path d="M4.5 14.5 H23"/><path d="M3.5 19.5 H24.5"/><path d="M11.5 11.5 L7.5 24"/><path d="M19.5 16 L21 24"/></g><circle cx="19.7" cy="9" r="4.9" fill="#e8e8e8"/><circle cx="18.3" cy="7.6" r="1.6" fill="#fff"/></svg>
<svg class="abs" style="left:45px;top:16.5px" width="10" height="7.5" viewBox="0 0 10 7.5"><path d="M1 1 L5.0 5.5 L9 1" stroke="#e0e0e0" stroke-width="1.7" fill="none" stroke-linecap="round" stroke-linejoin="round"/></svg>
<div class="abs" style="left:66.8px;top:5.0px;width:130.4px;height:27.2px;background:#272727;border-radius:6px;"></div>
<svg class="abs" style="left:71.0px;top:5.0px" width="28" height="27" viewBox="0 0 28 27"><g stroke="#c8c8c8" stroke-width="1.4" fill="none"><rect x="3.2" y="6" width="4" height="4"/><rect x="3.2" y="19.5" width="4" height="4"/><rect x="17" y="19.5" width="4" height="4"/><path d="M7.2 8 H14 M5.2 10 V19.5 M7.2 21.5 H17 M19 11.5 V19.5"/></g><rect x="15.3" y="3.3" width="7.6" height="7.6" fill="#f0f0f0"/></svg>
<span class="t" style="left:105.0px;top:8.9px;color:#e6e6e6;">编辑模式</span>
<svg class="abs" style="left:183.5px;top:16.5px" width="10" height="7.5" viewBox="0 0 10 7.5"><path d="M1 1 L5.0 5.5 L9 1" stroke="#e0e0e0" stroke-width="1.7" fill="none" stroke-linecap="round" stroke-linejoin="round"/></svg>
<div class="abs" style="left:205.7px;top:5.0px;width:85.5px;height:27.2px;background:#545454;border-radius:6px;"></div>
<div class="abs" style="left:262.7px;top:5.0px;width:28.5px;height:27.2px;background:#4772b3;border-radius:0 6px 6px 0;"></div>
<div class="abs" style="left:233.3px;top:5.0px;width:1.0px;height:27.2px;background:#3c3c3c;border-radius:0;"></div>
<div class="abs" style="left:262.2px;top:5.0px;width:1.0px;height:27.2px;background:#3c3c3c;border-radius:0;"></div>
<svg class="abs" style="left:206.0px;top:5.0px" width="28" height="27" viewBox="0 0 28 27"><path d="M6.5 9 V6.5 Q6.5 5 8 5 H22 V19 L18.5 22.5 H8 Q6.5 22.5 6.5 21 V18" stroke="#9a9a9a" stroke-width="1.4" fill="none"/><rect x="3.2" y="11" width="5" height="5.4" fill="#f0f0f0"/></svg>
<svg class="abs" style="left:234.0px;top:5.0px" width="28" height="27" viewBox="0 0 28 27"><path d="M6 22.5 V9.5 Q6 5 10.5 5 H23.5 V18.5 L21 21" stroke="#9a9a9a" stroke-width="1.4" fill="none"/><rect x="13.8" y="10" width="4.6" height="15" fill="#f0f0f0"/></svg>
<svg class="abs" style="left:263.0px;top:5.0px" width="28" height="27" viewBox="0 0 28 27"><path d="M8 7.5 Q9 4 12.5 4 H25 V17.5 Q25 19.5 22 21" stroke="#c5d3ea" stroke-width="1.4" fill="none"/><rect x="3.5" y="9.5" width="15.5" height="15.5" rx="1" fill="#ffffff"/></svg>
<span class="t" style="left:310.0px;top:8.9px;color:#e6e6e6;">视图</span>
<span class="t" style="left:366.0px;top:8.9px;color:#e6e6e6;">选择</span>
<span class="t" style="left:422.0px;top:8.9px;color:#e6e6e6;">添加</span>
<span class="t" style="left:478.0px;top:8.9px;color:#e6e6e6;">网格</span>
<span class="t" style="left:534.0px;top:8.9px;color:#e6e6e6;">顶点</span>
<span class="t" style="left:590.0px;top:8.9px;color:#e6e6e6;">边</span>
<span class="t" style="left:629.0px;top:8.9px;color:#e6e6e6;">面</span>
<span class="t" style="left:668.5px;top:8.9px;color:#e6e6e6;">UV</span>
<div class="abs" style="left:725.4px;top:5.0px;width:89.6px;height:27.2px;background:#272727;border-radius:6px;"></div>
<svg class="abs" style="left:728.0px;top:5.0px" width="30" height="27" viewBox="0 0 30 27"><g stroke="#e6e6e6" stroke-width="1.5" fill="none" stroke-linecap="round" stroke-linejoin="round"><path d="M6.5 20 V4.5 M3.5 7.5 L6.5 4.2 L9.5 7.5"/><path d="M9 22.5 H23 M20 19.5 L23.3 22.5 L20 25.5"/><circle cx="6.5" cy="22.5" r="2.3"/></g><g stroke="#9a9a9a" stroke-width="1.4" fill="none" stroke-linecap="round"><path d="M8.5 20.5 L19.5 9.5 M14.5 9 H20 V14.5"/></g></svg>
<span class="t" style="left:763.5px;top:8.9px;color:#e6e6e6;">全局</span>
<svg class="abs" style="left:801px;top:16.5px" width="10" height="7.5" viewBox="0 0 10 7.5"><path d="M1 1 L5.0 5.5 L9 1" stroke="#e0e0e0" stroke-width="1.7" fill="none" stroke-linecap="round" stroke-linejoin="round"/></svg>
<div class="abs" style="left:824.0px;top:5.0px;width:44.0px;height:27.2px;background:#272727;border-radius:6px;"></div>
<svg class="abs" style="left:827.0px;top:5.0px" width="28" height="27" viewBox="0 0 28 27"><g stroke="#e6e6e6" stroke-width="1.5" fill="none"><circle cx="16" cy="11" r="6.8"/><circle cx="10.5" cy="20" r="5.8" stroke-dasharray="30 6.5" stroke-dashoffset="-3"/></g><circle cx="14.6" cy="13.2" r="2.2" fill="#e6e6e6"/></svg>
<svg class="abs" style="left:854.5px;top:16.5px" width="10" height="7.5" viewBox="0 0 10 7.5"><path d="M1 1 L5.0 5.5 L9 1" stroke="#e0e0e0" stroke-width="1.7" fill="none" stroke-linecap="round" stroke-linejoin="round"/></svg>
<div class="abs" style="left:877.3px;top:5.0px;width:72.5px;height:27.2px;background:#272727;border-radius:6px;"></div>
<div class="abs" style="left:877.3px;top:5.0px;width:27.4px;height:27.2px;background:#545454;border-radius:6px 0 0 6px;"></div>
<svg class="abs" style="left:877.0px;top:5.0px" width="28" height="27" viewBox="0 0 28 27"><path d="M6.5 10.5 L10 7 Q15 3.5 20 8 Q24.5 13 20.5 18 L15.5 23.5 L12 20.5 L17 15 Q19 12.5 17 10.7 Q15 9 13 11 L9.8 14 Z" stroke="#a8a8a8" stroke-width="1.4" fill="none" stroke-linejoin="round"/></svg>
<svg class="abs" style="left:906.0px;top:5.0px" width="28" height="27" viewBox="0 0 28 27"><g stroke="#e6e6e6" stroke-width="1.5" fill="none"><path d="M3.5 13 V23.5 M21.5 13 V23.5 M3.5 19 H21.5 M9.5 16.5 V21.5 M15.5 16.5 V21.5"/></g><rect x="17.5" y="4" width="6" height="6" fill="#e6e6e6"/></svg>
<svg class="abs" style="left:936px;top:16.5px" width="10" height="7.5" viewBox="0 0 10 7.5"><path d="M1 1 L5.0 5.5 L9 1" stroke="#e0e0e0" stroke-width="1.7" fill="none" stroke-linecap="round" stroke-linejoin="round"/></svg>
<div class="abs" style="left:959.0px;top:5.0px;width:72.6px;height:27.2px;background:#272727;border-radius:6px;"></div>
<div class="abs" style="left:959.0px;top:5.0px;width:27.3px;height:27.2px;background:#545454;border-radius:6px 0 0 6px;"></div>
<svg class="abs" style="left:959.0px;top:5.0px" width="28" height="27" viewBox="0 0 28 27"><circle cx="13.7" cy="13.7" r="9" stroke="#9a9a9a" stroke-width="1.4" fill="none"/><circle cx="13.7" cy="13.7" r="3" fill="#f0f0f0"/></svg>
<svg class="abs" style="left:989.0px;top:5.0px" width="28" height="27" viewBox="0 0 28 27"><path d="M3 22 C10 22 9.5 5 14 5 C18.5 5 18 22 25 22" stroke="#6a6a6a" stroke-width="1.5" fill="none"/></svg>
<svg class="abs" style="left:1018.7px;top:16.5px" width="10" height="7.5" viewBox="0 0 10 7.5"><path d="M1 1 L5.0 5.5 L9 1" stroke="#5a5a5a" stroke-width="1.7" fill="none" stroke-linecap="round" stroke-linejoin="round"/></svg>
<div class="abs" style="left:1306.2px;top:5.0px;width:43.8px;height:27.2px;background:#272727;border-radius:6px;"></div>
<svg class="abs" style="left:1307.0px;top:5.0px" width="30" height="27" viewBox="0 0 30 27"><path d="M7 9.5 Q14.5 0.5 23 9.5 Q14.5 18 7 9.5Z" fill="#e8e8e8"/><circle cx="15" cy="9.3" r="3.6" fill="#272727"/><circle cx="15" cy="9.3" r="1.8" fill="#e8e8e8"/><path d="M2 13.5 L12.5 17.5 L8.2 19.2 L6.5 23.8Z" fill="#e8e8e8"/></svg>
<svg class="abs" style="left:1336px;top:16.5px" width="10" height="7.5" viewBox="0 0 10 7.5"><path d="M1 1 L5.0 5.5 L9 1" stroke="#e0e0e0" stroke-width="1.7" fill="none" stroke-linecap="round" stroke-linejoin="round"/></svg>
<div class="abs" style="left:1359.3px;top:5.0px;width:55.7px;height:27.2px;background:#272727;border-radius:6px;"></div>
<div class="abs" style="left:1359.3px;top:5.0px;width:26.7px;height:27.2px;background:#4772b3;border-radius:6px 0 0 6px;"></div>
<svg class="abs" style="left:1359.0px;top:5.0px" width="28" height="27" viewBox="0 0 28 27"><g stroke="#fff" stroke-width="1.6" fill="none" stroke-linecap="round" stroke-linejoin="round"><circle cx="6.5" cy="21.5" r="2.6"/><path d="M8.5 19.5 L22.5 5.5 M16 4.5 H23 V11.5"/><path d="M4 9 C12 9 18.5 15 20 24"/></g></svg>
<svg class="abs" style="left:1396px;top:16.5px" width="10" height="7.5" viewBox="0 0 10 7.5"><path d="M1 1 L5.0 5.5 L9 1" stroke="#e0e0e0" stroke-width="1.7" fill="none" stroke-linecap="round" stroke-linejoin="round"/></svg>
<div class="abs" style="left:1424.0px;top:5.0px;width:102.0px;height:27.2px;background:#272727;border-radius:6px;"></div>
<div class="abs" style="left:1424.0px;top:5.0px;width:27.0px;height:27.2px;background:#4772b3;border-radius:6px 0 0 6px;"></div>
<svg class="abs" style="left:1424.0px;top:5.0px" width="28" height="27" viewBox="0 0 28 27"><defs><clipPath id="ovc1"><circle cx="16" cy="11.4" r="7.4"/></clipPath></defs><circle cx="10.3" cy="17.1" r="6.5" stroke="#fff" stroke-width="1.6" fill="none"/><circle cx="16" cy="11.4" r="7.4" fill="#fff"/><circle cx="10.3" cy="17.1" r="6.5" stroke="#4772b3" stroke-width="2" fill="none" clip-path="url(#ovc1)"/></svg>
<svg class="abs" style="left:1460.5px;top:16.5px" width="10" height="7.5" viewBox="0 0 10 7.5"><path d="M1 1 L5.0 5.5 L9 1" stroke="#e0e0e0" stroke-width="1.7" fill="none" stroke-linecap="round" stroke-linejoin="round"/></svg>
<div class="abs" style="left:1480.2px;top:5.0px;width:1.0px;height:27.2px;background:#3a3a3a;border-radius:0;"></div>
<svg class="abs" style="left:1483.0px;top:5.0px" width="28" height="27" viewBox="0 0 28 27"><g stroke="#c8c8c8" stroke-width="1.4" fill="none"><rect x="2.2" y="6" width="4" height="4"/><rect x="2.2" y="19.5" width="4" height="4"/><rect x="16" y="19.5" width="4" height="4"/><path d="M6.2 8 H13 M4.2 10 V19.5 M6.2 21.5 H16 M18 11.5 V19.5"/></g><rect x="14.3" y="3.3" width="7.6" height="7.6" fill="#f0f0f0"/></svg>
<svg class="abs" style="left:1512.5px;top:16.5px" width="10" height="7.5" viewBox="0 0 10 7.5"><path d="M1 1 L5.0 5.5 L9 1" stroke="#e0e0e0" stroke-width="1.7" fill="none" stroke-linecap="round" stroke-linejoin="round"/></svg>
<div class="abs" style="left:1535.5px;top:5.0px;width:26.3px;height:27.2px;background:#545454;border-radius:6px;"></div>
<svg class="abs" style="left:1535.0px;top:5.0px" width="28" height="27" viewBox="0 0 28 27"><g stroke="#e0e0e0" stroke-width="1.5" fill="none" stroke-linejoin="round"><path d="M8.5 8 V4.5 H23 V19 H19.5"/><rect x="4" y="8" width="15.5" height="15.5" stroke-width="1.7"/></g><path d="M9 12.5 V17.5 M9.5 18.3 H11.5 M13.5 18.3 H15.5" stroke="#e0e0e0" stroke-width="1.4" fill="none"/></svg>
<div class="abs" style="left:1571.2px;top:5.0px;width:139.6px;height:27.2px;background:#545454;border-radius:6px;"></div>
<div class="abs" style="left:1598.8px;top:5.0px;width:27.5px;height:27.2px;background:#4772b3;border-radius:0;"></div>
<div class="abs" style="left:1682.2px;top:5.0px;width:28.6px;height:27.2px;background:#272727;border-radius:0 6px 6px 0;"></div>
<div class="abs" style="left:1653.9px;top:5.0px;width:1.0px;height:27.2px;background:#404040;border-radius:0;"></div>
<svg class="abs" style="left:1571.0px;top:5.0px" width="28" height="27" viewBox="0 0 28 27"><g stroke="#e0e0e0" stroke-width="1.4" fill="none"><circle cx="14" cy="13.7" r="9.6"/><ellipse cx="14" cy="13.7" rx="4.3" ry="9.6"/><path d="M5 10 H23 M5 17.5 H23"/></g></svg>
<svg class="abs" style="left:1598.8px;top:5.0px" width="28" height="27" viewBox="0 0 28 27"><circle cx="13.7" cy="13.7" r="9.6" fill="#dbe4f5" stroke="#fff" stroke-width="1.4"/></svg>
<svg class="abs" style="left:1626.5px;top:5.0px" width="28" height="27" viewBox="0 0 28 27"><circle cx="14" cy="13.7" r="9.6" stroke="#e0e0e0" stroke-width="1.4" fill="none"/><path d="M14 13.7 V4.1 A9.6 9.6 0 0 0 4.4 13.7 Z" fill="#cfcfcf"/><path d="M14 13.7 H4.4 A9.6 9.6 0 0 0 6 19 Z" fill="#cfcfcf"/><path d="M12 21 l2 -2 M15 22 l3 -3 M18.5 21 l2.5 -2.5 M21 18 l1.5 -1.5" stroke="#cfcfcf" stroke-width="1.2"/></svg>
<svg class="abs" style="left:1654.5px;top:5.0px" width="28" height="27" viewBox="0 0 28 27"><circle cx="14" cy="13.7" r="9.6" stroke="#e0e0e0" stroke-width="1.4" fill="none"/><path d="M8 12 A6.5 6.5 0 0 1 13 7" stroke="#e0e0e0" stroke-width="1.8" fill="none" stroke-linecap="round"/><path d="M15 21.5 l2 -2 M18 20.5 l2 -2 M20.5 18 l1.5 -1.5" stroke="#cfcfcf" stroke-width="1.2"/></svg>
<svg class="abs" style="left:1691.5px;top:16.5px" width="10" height="7.5" viewBox="0 0 10 7.5"><path d="M1 1 L5.0 5.5 L9 1" stroke="#e0e0e0" stroke-width="1.7" fill="none" stroke-linecap="round" stroke-linejoin="round"/></svg>
<span class="t" style="left:14.0px;top:48.3px;color:#e6e6e6;">方向:</span>
<div class="abs" style="left:59.0px;top:43.8px;width:142.9px;height:27.2px;background:#272727;border-radius:6px;"></div>
<svg class="abs" style="left:63.0px;top:44.0px" width="28" height="27" viewBox="0 0 28 27"><g stroke="#b8b8b8" stroke-width="1.3" fill="none" stroke-linecap="round" stroke-linejoin="round"><path d="M9 14 V4.5 M6.3 7.3 L9 4.3 L11.7 7.3"/><path d="M15 18 H24 M21.3 15.3 L24.3 18 L21.3 20.7"/><path d="M6.5 20.5 L3 24 M3 21 V24.2 H6.2"/></g><circle cx="9.8" cy="17.5" r="3" fill="#e6e6e6"/></svg>
<span class="t" style="left:97.5px;top:48.3px;color:#e6e6e6;">默认</span>
<svg class="abs" style="left:188.5px;top:56px" width="10" height="7.5" viewBox="0 0 10 7.5"><path d="M1 1 L5.0 5.5 L9 1" stroke="#e0e0e0" stroke-width="1.7" fill="none" stroke-linecap="round" stroke-linejoin="round"/></svg>
<span class="t" style="left:217.5px;top:48.3px;color:#e6e6e6;">拖拽:</span>
<div class="abs" style="left:269.0px;top:43.8px;width:70.5px;height:27.2px;background:#272727;border-radius:6px;"></div>
<span class="t" style="left:280.0px;top:48.3px;color:#e6e6e6;">框选</span>
<svg class="abs" style="left:324.5px;top:56px" width="10" height="7.5" viewBox="0 0 10 7.5"><path d="M1 1 L5.0 5.5 L9 1" stroke="#e0e0e0" stroke-width="1.7" fill="none" stroke-linecap="round" stroke-linejoin="round"/></svg>
<svg class="abs" style="left:1497.0px;top:44.0px" width="28" height="27" viewBox="0 0 28 27"><g stroke="#c8c8c8" stroke-width="1.4" fill="none" stroke-linecap="round"><path d="M9.5 5.5 C3 3.5 2.5 9.5 6.5 12 C2 15.5 4 22.5 7 22 C9.5 21.5 9.5 18 9.5 16.5"/><path d="M18.5 5.5 C25 3.5 25.5 9.5 21.5 12 C26 15.5 24 22.5 21 22 C18.5 21.5 18.5 18 18.5 16.5"/><path d="M14 3 V25" stroke-dasharray="3.5 2"/></g></svg>
<div class="abs" style="left:1525.0px;top:43.8px;width:72.0px;height:27.2px;background:#545454;border-radius:6px;"></div>
<div class="abs" style="left:1548.5px;top:43.8px;width:1.0px;height:27.2px;background:#444;border-radius:0;"></div>
<div class="abs" style="left:1573.0px;top:43.8px;width:1.0px;height:27.2px;background:#444;border-radius:0;"></div>
<span class="t" style="left:1531.3px;top:48.3px;color:#e6e6e6;">X</span>
<span class="t" style="left:1555.7px;top:48.3px;color:#e6e6e6;">Y</span>
<span class="t" style="left:1580.3px;top:48.3px;color:#e6e6e6;">Z</span>
<div class="abs" style="left:1606.3px;top:43.8px;width:26.7px;height:27.2px;background:#545454;border-radius:6px;"></div>
<svg class="abs" style="left:1606.0px;top:44.0px" width="28" height="27" viewBox="0 0 28 27"><g stroke="#e0e0e0" stroke-width="1.4" fill="none"><rect x="17.5" y="4" width="4.5" height="4.5"/><rect x="3.5" y="18.5" width="4.5" height="4.5"/></g><g stroke="#a0a0a0" stroke-width="1.4" fill="none" stroke-dasharray="4 3"><path d="M5.5 16.5 C5.5 10 11 7 16 6.5"/><path d="M10 21.5 C16 21 20 16 20 10.5"/></g></svg>
<div class="abs" style="left:1641.6px;top:43.8px;width:69.2px;height:27.2px;background:#272727;border-radius:6px;"></div>
<span class="t" style="left:1653.0px;top:48.3px;color:#e6e6e6;">选项</span>
<svg class="abs" style="left:1697.3px;top:56px" width="10" height="7.5" viewBox="0 0 10 7.5"><path d="M1 1 L5.0 5.5 L9 1" stroke="#e0e0e0" stroke-width="1.7" fill="none" stroke-linecap="round" stroke-linejoin="round"/></svg>
<div class="abs" style="left:3px;top:78px;width:6px;height:945px;border-radius:3px;background:rgba(0,0,0,0.17)"></div>
<div class="abs" style="left:13px;top:88.3px;width:58.4px;height:98.7px;background:#262626;border-radius:5px;box-shadow:0 1px 2px rgba(0,0,0,0.35)"></div>
<div class="abs" style="left:13px;top:195.6px;width:58.4px;height:197.9px;background:#262626;border-radius:5px;box-shadow:0 1px 2px rgba(0,0,0,0.35)"></div>
<div class="abs" style="left:13px;top:403.3px;width:58.4px;height:98.7px;background:#262626;border-radius:5px;box-shadow:0 1px 2px rgba(0,0,0,0.35)"></div>
<div class="abs" style="left:13px;top:510.7px;width:58.4px;height:48.8px;background:#262626;border-radius:5px;box-shadow:0 1px 2px rgba(0,0,0,0.35)"></div>
<div class="abs" style="left:13px;top:567.3px;width:58.4px;height:553.7px;background:#262626;border-radius:5px;box-shadow:0 1px 2px rgba(0,0,0,0.35)"></div>
<svg class="abs" style="left:13px;top:88.3px" width="58" height="49" viewBox="0 0 58 49"><rect x="13" y="8.5" width="32" height="32" rx="2" stroke="#e4b162" stroke-width="1.6" fill="none" stroke-dasharray="6.2 3.2"/><path d="M24.5 15.5 L36.5 27 L29.5 27.8 L24.8 33 Z" fill="#e6e6e6"/><path d="M52.5 40.5 V46 H47 Z" fill="#8a8a8a"/></svg>
<svg class="abs" style="left:13px;top:137.7px" width="58" height="49" viewBox="0 0 58 49"><circle cx="29" cy="24.5" r="16.5" stroke="#fff" stroke-width="2" fill="none"/><circle cx="29" cy="24.5" r="16.5" stroke="#b03a40" stroke-width="2" fill="none" stroke-dasharray="6.5 6.46" stroke-dashoffset="3"/><path d="M29 14 V21 M29 28 V35 M18.5 24.5 H25.5 M32.5 24.5 H39.5" stroke="#b5b5b5" stroke-width="1.6"/></svg>
<div class="abs" style="left:13px;top:195.6px;width:58.4px;height:49.4px;background:#4772b3;border-radius:5px 5px 0 0"></div>
<svg class="abs" style="left:13px;top:195.6px" width="58" height="49" viewBox="0 0 58 49"><g fill="#e6e6e6"><path d="M29 7 L33.5 13.5 H24.5Z"/><path d="M29 42 L33.5 35.5 H24.5Z"/><path d="M11.5 24.5 L18 20 V29Z"/><path d="M46.5 24.5 L40 20 V29Z"/></g><path d="M29 15.5 V20 M29 29 V33.5 M20 24.5 H24.5 M33.5 24.5 H38" stroke="#e6e6e6" stroke-width="2"/></svg>
<svg class="abs" style="left:13px;top:245.0px" width="58" height="49" viewBox="0 0 58 49"><path d="M17 19 A13.5 13.5 0 0 1 41 18" stroke="#e6e6e6" stroke-width="1.6" fill="none"/><path d="M41 30 A13.5 13.5 0 0 1 18 31.5" stroke="#e6e6e6" stroke-width="1.6" fill="none"/><path d="M11.5 23 H20.5 L16 30Z" fill="#e6e6e6"/><path d="M37.5 26 H46.5 L42 19Z" fill="#e6e6e6"/><path d="M29 19.5 L34.5 24.5 L29 29.5 L23.5 24.5Z" fill="#bdbdbd"/></svg>
<svg class="abs" style="left:13px;top:294.5px" width="58" height="49" viewBox="0 0 58 49"><path d="M19.5 15 V9.5 H43.5 V34 H37" stroke="#b5b5b5" stroke-width="1.5" fill="none"/><rect x="17.5" y="22.5" width="14" height="14" fill="#e6e6e6"/><path d="M32.5 21 L40.5 13 M35.5 12.5 H41 V18" stroke="#e6e6e6" stroke-width="1.7" fill="none"/><path d="M52.5 40.5 V46 H47 Z" fill="#8a8a8a"/></svg>
<svg class="abs" style="left:13px;top:344.0px" width="58" height="49" viewBox="0 0 58 49"><rect x="23" y="18.5" width="12" height="12" fill="#e6e6e6"/><g fill="#e6e6e6"><path d="M29 8.5 L32.5 13.5 H25.5Z"/><path d="M29 40.5 L32.5 35.5 H25.5Z"/><path d="M13 24.5 L18 21 V28Z"/><path d="M45 24.5 L40 21 V28Z"/></g><g stroke="#e6e6e6" stroke-width="1.5" fill="none"><path d="M16.5 17 A15 15 0 0 1 22.5 11.3"/><path d="M35.5 11.3 A15 15 0 0 1 41.5 17"/><path d="M41.5 32 A15 15 0 0 1 35.5 37.7"/><path d="M22.5 37.7 A15 15 0 0 1 16.5 32"/></g></svg>
<svg class="abs" style="left:13px;top:403.3px" width="58" height="49" viewBox="0 0 58 49"><path d="M14 29 L32.5 8.5 L38.5 14 L20 34 L13 36 Z" fill="#e6e6e6"/><path d="M30 11 L36 16.5" stroke="#262626" stroke-width="1.4"/><path d="M14.5 29.5 L19.5 33.8" stroke="#262626" stroke-width="1.2"/><path d="M14.5 36.5 C23 44.5 28 29.5 35 29 C40 28.8 42.5 32 44.5 35" stroke="#8fdcab" stroke-width="1.8" fill="none"/><path d="M52.5 40.5 V46 H47 Z" fill="#8a8a8a"/></svg>
<svg class="abs" style="left:13px;top:452.7px" width="58" height="49" viewBox="0 0 58 49"><path d="M17 7.5 H24 V9.3 H22 V36 H47.5 V40.5 H17 V38.5 H18.8 V9.5 H17Z" fill="#e6e6e6"/><path d="M26 35.5 V19 A17 17 0 0 1 41 35.5Z" fill="#8fdcab"/><path d="M26 16.5 A19 19 0 0 1 43.5 35.5" stroke="#8fdcab" stroke-width="1.5" fill="none"/><g stroke="#262626" stroke-width="0.9"><path d="M19 12.5 H21.8 M19 15.5 H21.8 M19 18.5 H21.8 M19 21.5 H21.8 M19 24.5 H21.8 M19 27.5 H21.8 M19 30.5 H21.8 M19 33.5 H21.8 M25 37.500 V40 M28 37.5 V40 M31 37.5 V40 M34 37.5 V40 M37 37.5 V40 M40 37.5 V40 M43 37.5 V40"/></g></svg>
<svg class="abs" style="left:13px;top:510.7px" width="58" height="49" viewBox="0 0 58 49"><path d="M13.5 6 V17 M8 11.5 H19" stroke="#8fdcab" stroke-width="2.8"/><g stroke="#8fdcab" stroke-width="1.5" fill="none"><ellipse cx="31.5" cy="16.5" rx="13" ry="5.5"/><path d="M18.5 16.5 V36 A13 5.5 0 0 0 44.5 36 V16.5"/><path d="M18.5 26.5 A13 5.5 0 0 0 44.5 26.5"/><path d="M26 21.5 V41 M37 21.5 V41"/></g><path d="M52.5 40.5 V46 H47 Z" fill="#8a8a8a"/></svg>
<div class="abs" style="left:13px;top:567.3px;width:58.4px;height:49.7px;background:#343434;border-radius:5px 5px 0 0"></div>
<svg class="abs" style="left:13px;top:567.3px" width="58" height="49" viewBox="0 0 58 49"><path d="M14.3 12.4 L22.7 4.7 H44.2 V12.4 L35.8 20.1 H14.3 Z" fill="#7dffb6"/><g stroke="#e6e6e6" stroke-width="1.4" fill="none" stroke-linejoin="round"><path d="M14.3 20.1 V37.8 H35.8 V20.1"/><path d="M44.2 12.4 V30.1 L35.8 37.8"/></g><path d="M52.5 40.5 V46 H47 Z" fill="#8a8a8a"/></svg>
<svg class="abs" style="left:13px;top:617.0px" width="58" height="49" viewBox="0 0 58 49"><path d="M14.3 16.3 H35.8 V37.8 H14.3 Z" fill="#8fdcab"/><rect x="21.5" y="23" width="7.7" height="8" fill="#262626"/><path d="M14.3 16.3 L21.5 23 M35.8 16.3 L29.2 23 M14.3 37.8 L21.5 31 M35.8 37.8 L29.2 31" stroke="#262626" stroke-width="1.1"/><g stroke="#e6e6e6" stroke-width="1.4" fill="none" stroke-linejoin="round"><path d="M14.3 16.3 L22.700000000000003 8.600000000000001 H44.199999999999996 L35.8 16.3"/><path d="M44.199999999999996 8.600000000000001 V30.099999999999998 L35.8 37.8"/></g></svg>
<svg class="abs" style="left:13px;top:666.7px" width="58" height="49" viewBox="0 0 58 49"><path d="M14.3 22 L18 14.5 L22.5 10 H38 L44.2 17.5 L35.8 22 Z" fill="#8fdcab"/><g stroke="#e6e6e6" stroke-width="1.4" fill="none" stroke-linejoin="round"><path d="M14.3 22 H35.8 V37.8 H14.3 Z"/><path d="M35.8 22 L44.2 17.5 V30.1 L35.8 37.8"/><path d="M14.3 22 L18 14.5 L22.5 10 H38 L44.2 17.5"/><path d="M35.8 22 L32 14.5 L22.5 10" stroke-opacity="0.0"/></g></svg>
<svg class="abs" style="left:13px;top:716.4px" width="58" height="49" viewBox="0 0 58 49"><g stroke="#e6e6e6" stroke-width="1.4" fill="none" stroke-linejoin="round"><path d="M14.3 16.3 H35.8 V37.8 H14.3 Z"/><path d="M14.3 16.3 L22.700000000000003 8.600000000000001 H44.199999999999996 L35.8 16.3"/><path d="M44.199999999999996 8.600000000000001 V30.099999999999998 L35.8 37.8"/></g><rect x="22.500" y="36.600" width="6" height="2.600" fill="#262626"/><path d="M25.500 38.500 V18.500 Q25.500 14 33 8.800" stroke="#8fdcab" stroke-width="1.700" fill="none"/><path d="M52.5 40.5 V46 H47 Z" fill="#8a8a8a"/></svg>
<svg class="abs" style="left:13px;top:766.1px" width="58" height="49" viewBox="0 0 58 49"><g stroke="#e6e6e6" stroke-width="1.4" fill="none" stroke-linejoin="round"><path d="M14.3 16.3 H35.8 V37.8 H14.3 Z"/><path d="M14.3 16.3 L22.700000000000003 8.600000000000001 H44.199999999999996 L35.8 16.3"/><path d="M44.199999999999996 8.600000000000001 V30.099999999999998 L35.8 37.8"/></g><path d="M31.4 9.5 L21.5 16.3 L31 38" stroke="#8fdcab" stroke-width="1.600" fill="none" stroke-linejoin="round"/><circle cx="21.5" cy="16.3" r="2.300" fill="#8fdcab"/><circle cx="31.4" cy="9.5" r="2.300" fill="#8fdcab"/><circle cx="31" cy="38" r="2.300" fill="#8fdcab"/><path d="M52.5 40.5 V46 H47 Z" fill="#8a8a8a"/></svg>
<svg class="abs" style="left:13px;top:815.8px" width="58" height="49" viewBox="0 0 58 49"><path d="M16.4 23 L25.9 8.9 L41.9 14.8 L42.4 37.700 L16.4 37.700 Z" fill="#8fdcab"/><g fill="#fff"><circle cx="16.4" cy="23" r="2.600"/><circle cx="25.9" cy="8.9" r="2.600"/><circle cx="41.9" cy="14.8" r="2.600"/><circle cx="42.4" cy="37.700" r="2.600"/><circle cx="16.400" cy="37.700" r="2.600"/></g></svg>
<svg class="abs" style="left:13px;top:865.5px" width="58" height="49" viewBox="0 0 58 49"><circle cx="27" cy="26.5" r="16" fill="#8fdcab"/><path d="M27 26.5 L28.500 6 A20.500 20.500 0 0 1 46.500 18 Z" fill="#262626"/><path d="M29.500 8.500 V22 M29.500 8.500 A18 18 0 0 0 22 9.500" stroke="#e6e6e6" stroke-width="1.300" fill="none"/><path d="M40.500 14.500 Q47 22 42.500 31" stroke="#e6e6e6" stroke-width="1.300" fill="none"/><path d="M40.500 14.500 L38 19.500" stroke="#e6e6e6" stroke-width="1.300"/><g stroke="#262626" stroke-width="1.100"><path d="M27 26.500 V42.500 M27 26.500 L13 18.500 M27 26.500 L13 34.500 M27 26.500 L41 34.500 M27 26.500 H11 M27 26.500 V10"/></g></svg>
<svg class="abs" style="left:13px;top:915.2px" width="58" height="49" viewBox="0 0 58 49"><path d="M15.500 16 Q22 9 29 8.500 Q37 9.500 42.500 16.500 Q44 24 41.500 32.500 Q35 37 28 37.500 Q21 36.500 16 32 Q14 24 15.500 16Z" fill="#dcbdea"/><g stroke="#262626" stroke-width="1.100" fill="none"><path d="M15 23.500 Q29 26.500 43.500 24.500"/><path d="M29 8.500 Q27.500 23 28 37.500"/><path d="M15.500 16 Q29 19 42.500 16.500"/></g><path d="M52.5 40.5 V46 H47 Z" fill="#8a8a8a"/></svg>
<svg class="abs" style="left:13px;top:964.9px" width="58" height="49" viewBox="0 0 58 49"><g stroke="#e6e6e6" stroke-width="1.400" fill="none" stroke-linejoin="round"><path d="M22.500 19 H36.500 V38.500 H22.500 Z"/><path d="M22.500 19 L29.500 11.500 H43.500 L36.500 19"/><path d="M43.500 11.500 V31 L36.500 38.500"/><path d="M17 38.500 H14.500 V21 L23 11.500 H29.500"/></g><path d="M18.500 38.500 V21.500 Q18.500 19 26.500 11.500" stroke="#dcbdea" stroke-width="1.500" fill="none"/><path d="M10 8 L15.500 5 V11Z M15 8 H18" fill="#dcbdea" stroke="#dcbdea" stroke-width="1.200"/><path d="M52.5 40.5 V46 H47 Z" fill="#8a8a8a"/></svg>
<svg class="abs" style="left:13px;top:1014.6px" width="58" height="49" viewBox="0 0 58 49"><g fill="#dcbdea"><path d="M29 6 L33 11.500 H25Z"/><path d="M29 43 L33 37.500 H25Z"/><path d="M12.500 24.500 L18 20.500 V28.500Z"/><path d="M45.500 24.500 L40 20.500 V28.500Z"/></g><path d="M29 11 V14 M29 35 V38 M17.500 24.500 H20" stroke="#dcbdea" stroke-width="1.600"/><g stroke="#e6e6e6" stroke-width="1.300" fill="none"><rect x="21" y="18" width="14" height="14"/><path d="M21 18 L24 15 H38 L35 18 M38 15 V29 L35 32"/></g><g fill="#dcbdea"><path d="M28 25 L22.500 22 V28Z M28 25 L33.500 22 V28Z" /><path d="M28 25 L25 19.500 H31Z M28 25 L25 30.500 H31Z"/></g><path d="M52.5 40.5 V46 H47 Z" fill="#8a8a8a"/></svg>
<svg class="abs" style="left:13px;top:1064.3px" width="58" height="49" viewBox="0 0 58 49"><path d="M8.2 18.8 L33.9 12.1 L49.5 33 L41.7 39.1 L38 45 H21 Z" fill="#dcbdea"/><path d="M8.900 20.400 L29.300 16.900 L41.700 39.100 M29.300 16.900 L33.900 12.100" stroke="#262626" stroke-width="1" fill="none"/><path d="M40.500 6.500 L46 3.500 V9.500Z M45.500 6.500 H49" fill="#dcbdea" stroke="#dcbdea" stroke-width="1.200"/></svg>
<div class="abs" style="left:13px;top:137.0px;width:58.4px;height:1.2px;background:#3a3a3a"></div>
<div class="abs" style="left:13px;top:244.3px;width:58.4px;height:1.2px;background:#3a3a3a"></div>
<div class="abs" style="left:13px;top:293.8px;width:58.4px;height:1.2px;background:#3a3a3a"></div>
<div class="abs" style="left:13px;top:343.3px;width:58.4px;height:1.2px;background:#3a3a3a"></div>
<div class="abs" style="left:13px;top:452.0px;width:58.4px;height:1.2px;background:#3a3a3a"></div>
<div class="abs" style="left:13px;top:616.3px;width:58.4px;height:1.2px;background:#3a3a3a"></div>
<div class="abs" style="left:13px;top:666.0px;width:58.4px;height:1.2px;background:#3a3a3a"></div>
<div class="abs" style="left:13px;top:715.7px;width:58.4px;height:1.2px;background:#3a3a3a"></div>
<div class="abs" style="left:13px;top:765.4px;width:58.4px;height:1.2px;background:#3a3a3a"></div>
<div class="abs" style="left:13px;top:815.1px;width:58.4px;height:1.2px;background:#3a3a3a"></div>
<div class="abs" style="left:13px;top:864.8px;width:58.4px;height:1.2px;background:#3a3a3a"></div>
<div class="abs" style="left:13px;top:914.5px;width:58.4px;height:1.2px;background:#3a3a3a"></div>
<div class="abs" style="left:13px;top:964.2px;width:58.4px;height:1.2px;background:#3a3a3a"></div>
<div class="abs" style="left:13px;top:1013.9px;width:58.4px;height:1.2px;background:#3a3a3a"></div>
<div class="abs" style="left:13px;top:1063.6px;width:58.4px;height:1.2px;background:#3a3a3a"></div>
<span class="t" style="left:97px;top:91.4px;color:#fff;text-shadow:0 0 2px #000,0 1px 2px rgba(0,0,0,0.8)">用户透视</span>
<span class="t" style="left:97px;top:118.4px;color:#fff;text-shadow:0 0 2px #000,0 1px 2px rgba(0,0,0,0.8)"><span style="letter-spacing:1px">(77) </span>立方体 <span style="letter-spacing:0.5px">| </span>立方体</span>
<div class="abs" style="left:75.3px;top:557px;width:213.5px;height:91.5px;background:#1d1d1d;border-radius:6px;box-shadow:0 2px 6px rgba(0,0,0,0.45)"></div>
<span class="t" style="left:94.3px;top:570.8px;color:#f0f0f0">挤出选区</span>
<span class="t" style="left:94.3px;top:591.0px;color:#f0f0f0">自由挤出或沿轴线挤出.</span>
<span class="t" style="left:94.3px;top:616.7px;color:#b4b4b4">快捷键: Shift 空格键, E</span>
<svg class="abs" style="left:-3px;top:-39px" width="2106" height="1271" viewBox="0 0 2106 1271"><circle cx="1651" cy="234.1" r="10.6" fill="#3a5580" stroke="#3b7fd8" stroke-width="1.5"/><circle cx="1691.7" cy="199.3" r="11.6" fill="#536b2d" stroke="#86cc20" stroke-width="1.6"/><line x1="1651" y1="190.2" x2="1651" y2="146" stroke="#2f83e0" stroke-width="2.4"/><line x1="1651" y1="190.2" x2="1676.8" y2="174.1" stroke="#c0364c" stroke-width="2.4"/><line x1="1651" y1="190.2" x2="1610.2" y2="180.2" stroke="#6c9c1e" stroke-width="2.4"/><circle cx="1625.6" cy="205.1" r="11.6" fill="#6e3b45" stroke="#f0405a" stroke-width="1.6"/><circle cx="1651" cy="145.4" r="12.2" fill="#2f83e0"/><circle cx="1676.800" cy="174.1" r="11.2" fill="#a93a4c"/><circle cx="1610.2" cy="180.2" r="11.500" fill="#6c9c1e"/><text x="1651" y="150.6" font-family="Liberation Sans,sans-serif" font-size="14.5" font-weight="bold" text-anchor="middle" fill="#0d2340">Z</text><text x="1676.800" y="179.3" font-family="Liberation Sans,sans-serif" font-size="14.5" font-weight="bold" text-anchor="middle" fill="#3a0d16">X</text><text x="1610.2" y="185.4" font-family="Liberation Sans,sans-serif" font-size="14.5" font-weight="bold" text-anchor="middle" fill="#1f3005">Y</text><circle cx="1691.7" cy="271.7" r="20.5" fill="#2a2a2a" fill-opacity="0.88"/><circle cx="1691.7" cy="316.3" r="20.5" fill="#2a2a2a" fill-opacity="0.88"/><circle cx="1691.7" cy="361.5" r="20.5" fill="#2a2a2a" fill-opacity="0.88"/><circle cx="1691.7" cy="406.6" r="20.5" fill="#2a2a2a" fill-opacity="0.88"/><circle cx="1690.2" cy="269.4" r="9.5" fill="#dcdcdc"/><path d="M1697 276.800 L1703.700 282.700" stroke="#dcdcdc" stroke-width="3" stroke-linecap="round"/><path d="M1690.200 264.300 V274.500 M1685.100 269.400 H1695.300" stroke="#2d2d2d" stroke-width="1.600"/><g stroke="#dcdcdc" stroke-width="3.1" stroke-linecap="round" fill="none"><path d="M1688.5 317 L1687.6 307.8"/><path d="M1692.2 317 L1692.2 306"/><path d="M1695.800 317 L1696.900 307.800"/><path d="M1699.200 319.500 L1702.600 312.800"/><path d="M1688 323 L1681.800 318.300"/></g><path d="M1685.800 315 H1700.300 Q1702.300 321.500 1698 326 Q1693 330 1688.300 327.200 Q1683.500 323.500 1685.800 315 Z" fill="#dcdcdc"/><g stroke="#dcdcdc" stroke-width="1.500" fill="#2d2d2d"><circle cx="1685.800" cy="357.600" r="4.500"/><circle cx="1696.100" cy="355.500" r="5.700"/></g><g fill="#2d2d2d"><circle cx="1685.800" cy="357.600" r="3.700"/><circle cx="1696.100" cy="355.500" r="4.900"/><rect x="1686" y="354" width="9" height="7.300"/></g><path d="M1684 361.800 H1697" stroke="#dcdcdc" stroke-width="1.500"/><circle cx="1685.800" cy="357.600" r="1.300" fill="#dcdcdc"/><circle cx="1696.300" cy="355.300" r="1.300" fill="#dcdcdc"/><g stroke="#dcdcdc" stroke-width="1.500" fill="none"><rect x="1687.600" y="365.400" width="9.500" height="7.800" rx="1.300"/><path d="M1684.200 367.700 H1687.600 M1684.200 367.700 V370"/><path d="M1699.300 369.300 L1704.400 366.200 V372.600 Z" stroke-linejoin="round"/></g><g stroke="#dcdcdc" stroke-width="1.600" fill="none" stroke-linejoin="round"><path d="M1686.300 397.500 H1698.500 L1704.300 415.500 H1681.500 Z"/><path d="M1690.400 397.500 L1689 415.500 M1694.400 397.500 L1696.800 415.500"/><path d="M1684.800 402.800 H1700.200 M1683.300 408.700 H1702.100"/></g><path d="M1727 146.300 H1717 Q1712.200 146.300 1712.200 151 V167.700 Q1712.200 172.400 1717 172.400 H1727 Z" fill="#3a3a3a" fill-opacity="0.95"/><path d="M1722.500 153.500 L1717 159.400 L1722.500 165.300" stroke="#a8a8a8" stroke-width="1.600" fill="none" stroke-linecap="round" stroke-linejoin="round"/></svg>
</div>
<div class="abs" style="left:1732px;top:39px;width:370.5px;height:219.7px;background:#282828;border-radius:10px;overflow:hidden">
<div class="abs" style="left:0.0px;top:65.5px;width:370.5px;height:29.0px;background:#2b2b2b;border-radius:0;"></div>
<div class="abs" style="left:0.0px;top:123.5px;width:370.5px;height:29.0px;background:#2b2b2b;border-radius:0;"></div>
<div class="abs" style="left:0.0px;top:181.2px;width:370.5px;height:29.0px;background:#2b2b2b;border-radius:0;"></div>
</div>
<div class="abs" style="left:1745.4px;top:43.5px;width:45.1px;height:28.0px;background:#282828;border-radius:6px;border:1px solid #3d3d3d"></div>
<svg class="abs" style="left:1750.0px;top:46.0px" width="26" height="24" viewBox="0 0 26 24"><rect x="2" y="1.500" width="7.500" height="4.500" rx="0.800" fill="#e6e6e6"/><rect x="12.500" y="9.500" width="10.500" height="4.500" rx="0.800" fill="#e6e6e6"/><rect x="12.500" y="17" width="10.500" height="4.500" rx="0.800" fill="#e6e6e6"/><path d="M5.500 6 V19.300 H12 M5.500 11.700 H12" stroke="#b0b0b0" stroke-width="1.400" fill="none"/></svg>
<svg class="abs" style="left:1776px;top:56px" width="10" height="7.5" viewBox="0 0 10 7.5"><path d="M1 1 L5.0 5.5 L9 1" stroke="#e0e0e0" stroke-width="1.7" fill="none" stroke-linecap="round" stroke-linejoin="round"/></svg>
<div class="abs" style="left:1797.5px;top:43.5px;width:45.0px;height:28.0px;background:#282828;border-radius:6px;border:1px solid #3d3d3d"></div>
<svg class="abs" style="left:1801.0px;top:46.0px" width="26" height="24" viewBox="0 0 26 24"><g fill="none" stroke="#e6e6e6" stroke-width="1.500"><path d="M3 8 V21.500 H17"/><path d="M6 5 V18.500 H20"/></g><rect x="9" y="1.500" width="14" height="14" fill="#e6e6e6"/><path d="M10.500 13.500 L15 6.500 L18 10.500 L19.500 9 L21.800 13.500Z" fill="#282828"/><circle cx="19.800" cy="4.800" r="1.300" fill="#282828"/></svg>
<svg class="abs" style="left:1828px;top:56px" width="10" height="7.5" viewBox="0 0 10 7.5"><path d="M1 1 L5.0 5.5 L9 1" stroke="#e0e0e0" stroke-width="1.7" fill="none" stroke-linecap="round" stroke-linejoin="round"/></svg>
<div class="abs" style="left:1865.0px;top:43.5px;width:174.5px;height:28.0px;background:#1d1d1d;border-radius:6px;border:1px solid #383838"></div>
<svg class="abs" style="left:1871.0px;top:47.0px" width="24" height="24" viewBox="0 0 24 24"><circle cx="9.500" cy="9" r="6.800" stroke="#e6e6e6" stroke-width="1.700" fill="none"/><path d="M14.500 14 L21 20.500" stroke="#e6e6e6" stroke-width="1.900" stroke-linecap="round"/></svg>
<span class="t" style="left:1904.0px;top:48.2px;color:#7a7a7a;">搜索</span>
<div class="abs" style="left:2062.5px;top:43.5px;width:39.5px;height:28.0px;background:#282828;border-radius:6px 0 0 6px;border:1px solid #3d3d3d;border-right:none"></div>
<svg class="abs" style="left:2066.0px;top:46.0px" width="24" height="24" viewBox="0 0 24 24"><path d="M2 3 H20 L13 11.500 V21 L9 18 V11.500 Z" stroke="#e6e6e6" stroke-width="1.600" fill="none" stroke-linejoin="round"/></svg>
<svg class="abs" style="left:2091px;top:56px" width="10" height="7.5" viewBox="0 0 10 7.5"><path d="M1 1 L5.0 5.5 L9 1" stroke="#9a9a9a" stroke-width="1.7" fill="none" stroke-linecap="round" stroke-linejoin="round"/></svg>
<svg class="abs" style="left:2046px;top:140px" width="60" height="90" viewBox="2046 140 60 90"><circle cx="2089.2" cy="185" r="33" fill="#6f6f6f"/></svg>
<svg class="abs" style="left:1766.0px;top:79.0px" width="21" height="22" viewBox="0 0 21 22"><path d="M1.500 2 H19.500 V6.500 H1.500Z" fill="#e6e6e6"/><path d="M3 8.500 H18 V20.500 H3Z" fill="#e6e6e6"/><rect x="7.200" y="11.300" width="6.600" height="2.600" rx="1.300" fill="#282828"/></svg>
<span class="t" style="left:1796.5px;top:80.7px;color:#e6e6e6;">场景集合</span>
<svg class="abs" style="left:1769.0px;top:114.5px" width="14" height="9" viewBox="0 0 14 9"><path d="M1 1 L7 7 L13 1" stroke="#e6e6e6" stroke-width="1.600" fill="none" stroke-linecap="round" stroke-linejoin="round"/></svg>
<div class="abs" style="left:1791.8px;top:105.0px;width:27.5px;height:28.0px;background:#4a4a4a;border-radius:6px;border:1px solid #5e5e5e"></div>
<svg class="abs" style="left:1795.0px;top:108.5px" width="21" height="22" viewBox="0 0 21 22"><path d="M1.500 2 H19.500 V6.500 H1.500Z" fill="#e6e6e6"/><path d="M3 8.500 H18 V20.500 H3Z" fill="#e6e6e6"/><rect x="7.200" y="11.300" width="6.600" height="2.600" rx="1.300" fill="#4a4a4a"/></svg>
<span class="t" style="left:1826.0px;top:110.2px;color:#ffffff;letter-spacing:0.3px">Collection</span>
<svg class="abs" style="left:2008.0px;top:111.0px" width="17" height="17" viewBox="0 0 17 17"><rect x="0.500" y="0.500" width="15.500" height="15.500" rx="2" fill="#e6e6e6"/><path d="M3.500 8.500 L7 12 L13 4.500" stroke="#282828" stroke-width="2.200" fill="none"/></svg>
<svg class="abs" style="left:2035.5px;top:111.0px" width="21" height="17" viewBox="0 0 21 17"><path d="M1 8 Q10.500 -3.500 20 8 Q10.500 19.500 1 8Z" fill="#e6e6e6"/><circle cx="10.500" cy="8" r="4.600" fill="#282828"/><circle cx="10.500" cy="8" r="2.500" fill="#e6e6e6"/></svg>
<svg class="abs" style="left:2064.0px;top:109.0px" width="22" height="20" viewBox="0 0 22 20"><path d="M1 4.500 H6 L7.500 1.500 H14.500 L16 4.500 H21 V19 H1Z" fill="#e6e6e6"/><circle cx="11" cy="11.500" r="5.300" fill="#282828"/><circle cx="11" cy="11.500" r="3.300" fill="none" stroke="#e6e6e6" stroke-width="1.500"/></svg>
<div class="abs" style="left:1775.2px;top:140.0px;width:1.0px;height:118.7px;background:#4e4e4e;border-radius:0;"></div>
<div class="abs" style="left:1748.500px;top:144.8px;width:6.400px;height:6.400px;border-radius:50%;background:#e6e6e6"></div>
<svg class="abs" style="left:1801.0px;top:141.0px" width="9" height="14" viewBox="0 0 9 14"><path d="M1 1 L7.500 7 L1 13" stroke="#e6e6e6" stroke-width="1.600" fill="none" stroke-linecap="round" stroke-linejoin="round"/></svg>
<svg class="abs" style="left:1823.5px;top:137.0px" width="23" height="23" viewBox="0 0 23 23"><path d="M3.300 3.300 H19.700 L11.500 19.300 Z" fill="none" stroke="#cb8449" stroke-width="4.400" stroke-linejoin="round"/></svg>
<span class="t" style="left:1854.5px;top:139.2px;color:#dcdcdc;letter-spacing:0.45px">Cube</span>
<svg class="abs" style="left:1928.5px;top:136.0px" width="22" height="22" viewBox="0 0 22 22"><g stroke="#10c79d" stroke-width="1.500" fill="none"><rect x="1" y="1" width="4.500" height="4.500"/><rect x="16.500" y="1" width="4.500" height="4.500"/><rect x="8.750" y="16.500" width="4.500" height="4.500"/><path d="M5.500 3.200 H16.500 M4.200 5.500 L9.800 16.500 M17.800 5.500 L12.200 16.500"/></g></svg>
<svg class="abs" style="left:2035.5px;top:139.5px" width="21" height="17" viewBox="0 0 21 17"><path d="M1 8 Q10.500 -3.500 20 8 Q10.500 19.500 1 8Z" fill="#e6e6e6"/><circle cx="10.500" cy="8" r="4.600" fill="#282828"/><circle cx="10.500" cy="8" r="2.500" fill="#e6e6e6"/></svg>
<svg class="abs" style="left:2064.0px;top:137.5px" width="22" height="20" viewBox="0 0 22 20"><path d="M1 4.500 H6 L7.500 1.500 H14.500 L16 4.500 H21 V19 H1Z" fill="#e6e6e6"/><circle cx="11" cy="11.500" r="5.300" fill="#282828"/><circle cx="11" cy="11.500" r="3.300" fill="none" stroke="#e6e6e6" stroke-width="1.500"/></svg>
<div class="abs" style="left:1748.500px;top:173.8px;width:6.400px;height:6.400px;border-radius:50%;background:#e6e6e6"></div>
<svg class="abs" style="left:1801.0px;top:170.0px" width="9" height="14" viewBox="0 0 9 14"><path d="M1 1 L7.500 7 L1 13" stroke="#e6e6e6" stroke-width="1.600" fill="none" stroke-linecap="round" stroke-linejoin="round"/></svg>
<svg class="abs" style="left:1823.5px;top:166.0px" width="23" height="23" viewBox="0 0 23 23"><path d="M3.300 3.300 H19.700 L11.500 19.300 Z" fill="none" stroke="#cb8449" stroke-width="4.400" stroke-linejoin="round"/></svg>
<span class="t" style="left:1854.5px;top:168.2px;color:#dcdcdc;letter-spacing:0.45px">Cube.001</span>
<svg class="abs" style="left:1965.5px;top:165.0px" width="22" height="22" viewBox="0 0 22 22"><g stroke="#10c79d" stroke-width="1.500" fill="none"><rect x="1" y="1" width="4.500" height="4.500"/><rect x="16.500" y="1" width="4.500" height="4.500"/><rect x="8.750" y="16.500" width="4.500" height="4.500"/><path d="M5.500 3.200 H16.500 M4.200 5.500 L9.800 16.500 M17.800 5.500 L12.200 16.500"/></g></svg>
<svg class="abs" style="left:2035.5px;top:168.5px" width="21" height="17" viewBox="0 0 21 17"><path d="M1 8 Q10.500 -3.500 20 8 Q10.500 19.500 1 8Z" fill="#e6e6e6"/><circle cx="10.500" cy="8" r="4.600" fill="#282828"/><circle cx="10.500" cy="8" r="2.500" fill="#e6e6e6"/></svg>
<svg class="abs" style="left:2064.0px;top:166.5px" width="22" height="20" viewBox="0 0 22 20"><path d="M1 4.500 H6 L7.500 1.500 H14.500 L16 4.500 H21 V19 H1Z" fill="#e6e6e6"/><circle cx="11" cy="11.500" r="5.300" fill="#282828"/><circle cx="11" cy="11.500" r="3.300" fill="none" stroke="#e6e6e6" stroke-width="1.500"/></svg>
<div class="abs" style="left:1748.500px;top:202.8px;width:6.400px;height:6.400px;border-radius:50%;background:#e6e6e6"></div>
<svg class="abs" style="left:1801.0px;top:199.0px" width="9" height="14" viewBox="0 0 9 14"><path d="M1 1 L7.500 7 L1 13" stroke="#e6e6e6" stroke-width="1.600" fill="none" stroke-linecap="round" stroke-linejoin="round"/></svg>
<svg class="abs" style="left:1823.5px;top:195.0px" width="23" height="23" viewBox="0 0 23 23"><path d="M3.300 3.300 H19.700 L11.500 19.300 Z" fill="none" stroke="#cb8449" stroke-width="4.400" stroke-linejoin="round"/></svg>
<span class="t" style="left:1854.5px;top:197.2px;color:#dcdcdc;letter-spacing:0.45px">Cube.002</span>
<svg class="abs" style="left:1965.5px;top:194.0px" width="22" height="22" viewBox="0 0 22 22"><g stroke="#10c79d" stroke-width="1.500" fill="none"><rect x="1" y="1" width="4.500" height="4.500"/><rect x="16.500" y="1" width="4.500" height="4.500"/><rect x="8.750" y="16.500" width="4.500" height="4.500"/><path d="M5.500 3.200 H16.500 M4.200 5.500 L9.800 16.500 M17.800 5.500 L12.200 16.500"/></g></svg>
<svg class="abs" style="left:2035.5px;top:197.5px" width="21" height="17" viewBox="0 0 21 17"><path d="M1 8 Q10.500 -3.500 20 8 Q10.500 19.500 1 8Z" fill="#e6e6e6"/><circle cx="10.500" cy="8" r="4.600" fill="#282828"/><circle cx="10.500" cy="8" r="2.500" fill="#e6e6e6"/></svg>
<svg class="abs" style="left:2064.0px;top:195.5px" width="22" height="20" viewBox="0 0 22 20"><path d="M1 4.500 H6 L7.500 1.500 H14.500 L16 4.500 H21 V19 H1Z" fill="#e6e6e6"/><circle cx="11" cy="11.500" r="5.300" fill="#282828"/><circle cx="11" cy="11.500" r="3.300" fill="none" stroke="#e6e6e6" stroke-width="1.500"/></svg>
<div class="abs" style="left:1748.500px;top:231.5px;width:6.400px;height:6.400px;border-radius:50%;background:#e6e6e6"></div>
<svg class="abs" style="left:1801.0px;top:227.7px" width="9" height="14" viewBox="0 0 9 14"><path d="M1 1 L7.500 7 L1 13" stroke="#e6e6e6" stroke-width="1.600" fill="none" stroke-linecap="round" stroke-linejoin="round"/></svg>
<svg class="abs" style="left:1823.5px;top:223.7px" width="23" height="23" viewBox="0 0 23 23"><path d="M3.300 3.300 H19.700 L11.500 19.300 Z" fill="none" stroke="#cb8449" stroke-width="4.400" stroke-linejoin="round"/></svg>
<span class="t" style="left:1854.5px;top:225.9px;color:#dcdcdc;letter-spacing:0.45px">柱体</span>
<svg class="abs" style="left:1920.7px;top:222.7px" width="22" height="22" viewBox="0 0 22 22"><g stroke="#10c79d" stroke-width="1.500" fill="none"><rect x="1" y="1" width="4.500" height="4.500"/><rect x="16.500" y="1" width="4.500" height="4.500"/><rect x="8.750" y="16.500" width="4.500" height="4.500"/><path d="M5.500 3.200 H16.500 M4.200 5.500 L9.800 16.500 M17.800 5.500 L12.200 16.500"/></g></svg>
<svg class="abs" style="left:2035.5px;top:226.2px" width="21" height="17" viewBox="0 0 21 17"><path d="M1 8 Q10.500 -3.500 20 8 Q10.500 19.500 1 8Z" fill="#e6e6e6"/><circle cx="10.500" cy="8" r="4.600" fill="#282828"/><circle cx="10.500" cy="8" r="2.500" fill="#e6e6e6"/></svg>
<svg class="abs" style="left:2064.0px;top:224.2px" width="22" height="20" viewBox="0 0 22 20"><path d="M1 4.500 H6 L7.500 1.500 H14.500 L16 4.500 H21 V19 H1Z" fill="#e6e6e6"/><circle cx="11" cy="11.500" r="5.300" fill="#282828"/><circle cx="11" cy="11.500" r="3.300" fill="none" stroke="#e6e6e6" stroke-width="1.500"/></svg>
<div class="abs" style="left:1732px;top:249px;width:370px;height:9.700px;overflow:hidden"><svg class="abs" style="left:91.5px;top:3.5px" width="23" height="23" viewBox="0 0 23 23"><path d="M3.300 3.300 H19.700 L11.500 19.300 Z" fill="none" stroke="#cb8449" stroke-width="4.400" stroke-linejoin="round"/></svg><svg class="abs" style="left:226.0px;top:2.5px" width="22" height="22" viewBox="0 0 22 22"><g stroke="#10c79d" stroke-width="1.500" fill="none"><rect x="1" y="1" width="4.500" height="4.500"/><rect x="16.500" y="1" width="4.500" height="4.500"/><rect x="8.750" y="16.500" width="4.500" height="4.500"/><path d="M5.500 3.200 H16.500 M4.200 5.500 L9.800 16.500 M17.800 5.500 L12.200 16.500"/></g></svg><svg class="abs" style="left:303.5px;top:6.0px" width="21" height="17" viewBox="0 0 21 17"><path d="M1 8 Q10.500 -3.500 20 8 Q10.500 19.500 1 8Z" fill="#e6e6e6"/><circle cx="10.500" cy="8" r="4.600" fill="#282828"/><circle cx="10.500" cy="8" r="2.500" fill="#e6e6e6"/></svg><svg class="abs" style="left:332.0px;top:4.0px" width="22" height="20" viewBox="0 0 22 20"><path d="M1 4.500 H6 L7.500 1.500 H14.500 L16 4.500 H21 V19 H1Z" fill="#e6e6e6"/><circle cx="11" cy="11.500" r="5.300" fill="#282828"/><circle cx="11" cy="11.500" r="3.300" fill="none" stroke="#e6e6e6" stroke-width="1.500"/></svg><span class="t" style="left:122.5px;top:4.500px;color:#dcdcdc">柱体.001</span><svg class="abs" style="left:69.0px;top:7.5px" width="9" height="14" viewBox="0 0 9 14"><path d="M1 1 L7.500 7 L1 13" stroke="#e6e6e6" stroke-width="1.600" fill="none"/></svg></div>
<div class="abs" style="left:2095.0px;top:80.5px;width:5.0px;height:86.5px;background:#454545;border-radius:2.500px;"></div>
<svg class="abs" style="left:2046px;top:140px" width="60" height="90" viewBox="2046 140 60 90"><defs><linearGradient id="rg" x1="0.2" y1="0" x2="0.55" y2="1"><stop offset="0" stop-color="#78cde8"/><stop offset="0.45" stop-color="#8fc0ea"/><stop offset="0.72" stop-color="#b9a6e6"/><stop offset="1" stop-color="#f49fce"/></linearGradient></defs><circle cx="2089.2" cy="185" r="33.1" fill="none" stroke="url(#rg)" stroke-width="6"/><g stroke="#020202" stroke-width="6.3" fill="none" stroke-linecap="round"><path d="M2075.3 171.4 L2083.6 174"/><path d="M2070.8 179.9 L2083.6 189.4"/><path d="M2088.4 177.4 L2102 171.4"/><path d="M2101.8 185.2 L2107 181.5"/><path d="M2083.2 195.4 V203.5"/><path d="M2094.9 188.4 V202.8"/></g></svg>
<div class="abs" style="left:1732px;top:263px;width:370.5px;height:972.5px;background:#303030;border-radius:10px;overflow:hidden">
<div class="abs" style="left:0.0px;top:39.0px;width:44.0px;height:933.5px;background:#1a1a1a;border-radius:0;"></div>
<div class="abs" style="left:0.0px;top:0.0px;width:370.5px;height:39.0px;background:#2f2f2f;border-radius:0;"></div>
<div class="abs" style="left:6.0px;top:52.0px;width:38.0px;height:38.0px;background:#1e1e1e;border-radius:6px 0 0 6px;"></div>
<div class="abs" style="left:6.0px;top:104.0px;width:38.0px;height:38.0px;background:#1e1e1e;border-radius:6px 0 0 6px;"></div>
<div class="abs" style="left:6.0px;top:144.0px;width:38.0px;height:38.0px;background:#1e1e1e;border-radius:6px 0 0 6px;"></div>
<div class="abs" style="left:6.0px;top:184.0px;width:38.0px;height:38.0px;background:#1e1e1e;border-radius:6px 0 0 6px;"></div>
<div class="abs" style="left:6.0px;top:224.0px;width:38.0px;height:38.0px;background:#1e1e1e;border-radius:6px 0 0 6px;"></div>
<div class="abs" style="left:6.0px;top:264.0px;width:38.0px;height:38.0px;background:#1e1e1e;border-radius:6px 0 0 6px;"></div>
<div class="abs" style="left:6.0px;top:315.0px;width:38.0px;height:38.0px;background:#1e1e1e;border-radius:6px 0 0 6px;"></div>
<div class="abs" style="left:6.0px;top:368.0px;width:38.0px;height:38.0px;background:#1e1e1e;border-radius:6px 0 0 6px;"></div>
<div class="abs" style="left:6.0px;top:407.7px;width:38.0px;height:38.0px;background:#303030;border-radius:6px 0 0 6px;"></div>
<div class="abs" style="left:6.0px;top:448.0px;width:38.0px;height:38.0px;background:#1e1e1e;border-radius:6px 0 0 6px;"></div>
<div class="abs" style="left:6.0px;top:487.8px;width:38.0px;height:38.0px;background:#1e1e1e;border-radius:6px 0 0 6px;"></div>
<div class="abs" style="left:6.0px;top:528.0px;width:38.0px;height:38.0px;background:#1e1e1e;border-radius:6px 0 0 6px;"></div>
<div class="abs" style="left:6.0px;top:567.6px;width:38.0px;height:38.0px;background:#1e1e1e;border-radius:6px 0 0 6px;"></div>
<div class="abs" style="left:6.0px;top:607.4px;width:38.0px;height:38.0px;background:#1e1e1e;border-radius:6px 0 0 6px;"></div>
</div>
<div class="abs" style="left:1745.6px;top:269.0px;width:44.8px;height:27.5px;background:#282828;border-radius:6px;border:1px solid #3d3d3d"></div>
<svg class="abs" style="left:1751.0px;top:271.5px" width="26" height="24" viewBox="0 0 26 24"><rect x="1.5" y="2" width="20" height="8.6" rx="4.3" fill="none" stroke="#e6e6e6" stroke-width="1.6"/><rect x="1.5" y="13.4" width="20" height="8.6" rx="4.3" fill="#e6e6e6"/><circle cx="6" cy="6.3" r="0" fill="#e6e6e6"/><rect x="2.3" y="2.8" width="9" height="7" rx="3.5" fill="#e6e6e6"/><rect x="12" y="14.4" width="8.400" height="6.600" rx="3.300" fill="#282828"/></svg>
<svg class="abs" style="left:1776.5px;top:281.5px" width="10" height="7.5" viewBox="0 0 10 7.5"><path d="M1 1 L5.0 5.5 L9 1" stroke="#e0e0e0" stroke-width="1.7" fill="none" stroke-linecap="round" stroke-linejoin="round"/></svg>
<div class="abs" style="left:1828.6px;top:269.0px;width:172.7px;height:27.5px;background:#1d1d1d;border-radius:6px;border:1px solid #383838"></div>
<svg class="abs" style="left:1835.0px;top:272.5px" width="24" height="24" viewBox="0 0 24 24"><circle cx="9.5" cy="9" r="6.8" stroke="#e6e6e6" stroke-width="1.7" fill="none"/><path d="M14.5 14 L21 20.500" stroke="#e6e6e6" stroke-width="1.9" stroke-linecap="round"/></svg>
<span class="t" style="left:1867.0px;top:273.7px;color:#7a7a7a;">搜索</span>
<div class="abs" style="left:2062.7px;top:269.0px;width:27.3px;height:27.5px;background:#282828;border-radius:6px;border:1px solid #3d3d3d"></div>
<svg class="abs" style="left:2071.5px;top:281.5px" width="10" height="7.5" viewBox="0 0 10 7.5"><path d="M1 1 L5.0 5.5 L9 1" stroke="#e0e0e0" stroke-width="1.7" fill="none" stroke-linecap="round" stroke-linejoin="round"/></svg>
<svg class="abs" style="left:1745.0px;top:322.0px" width="24" height="24" viewBox="0 0 24 24"><path d="M5.500 2.500 V12" stroke="#e6e6e6" stroke-width="1.800"/><path d="M2.800 14 H8.200 V18.500 Q8.200 21.500 5.500 21.500 Q2.800 21.500 2.800 18.500Z" fill="#e6e6e6"/><path d="M14.500 2.500 V7.500 L16 9.500 V20 Q16 21.700 17.700 21.700 Q19.400 21.700 19.400 20 V9.500 L21 7.500 V2.500 M16.500 3 V7.500 H19 V3" stroke="#e6e6e6" stroke-width="1.900" fill="none" stroke-linejoin="round"/></svg>
<svg class="abs" style="left:1745.0px;top:374.0px" width="24" height="24" viewBox="0 0 24 24"><path d="M1.500 6.500 H5 V4.500 H11 V6.500 H22.500 V21.500 H1.500Z" fill="#a9a9a9"/><path d="M15 3 H19 M17 1.500 V4.500" stroke="#a9a9a9" stroke-width="1.200"/><rect x="4" y="9.500" width="12.500" height="9.500" fill="#1e1e1e"/><path d="M4 12 H16.500 M4 14.500 H16.500 M4 17 H16.500" stroke="#a9a9a9" stroke-width="1.100"/><circle cx="19.500" cy="11.500" r="1.300" fill="#1e1e1e"/><circle cx="19.500" cy="16.500" r="1.300" fill="#1e1e1e"/></svg>
<svg class="abs" style="left:1745.0px;top:414.0px" width="24" height="24" viewBox="0 0 24 24"><path d="M1.500 3 Q1.500 1.500 3 1.500 H21 Q22.500 1.500 22.500 3 V11.500 H19 V8.500 H5 V11.500 H1.500Z" fill="#a9a9a9"/><rect x="6" y="10" width="12" height="11.500" fill="none" stroke="#a9a9a9" stroke-width="1.500"/><path d="M7.500 20 L11.500 14 L14 17.500 L15.300 16.200 L17 20Z" fill="#a9a9a9"/></svg>
<svg class="abs" style="left:1745.0px;top:454.0px" width="24" height="24" viewBox="0 0 24 24"><g fill="none" stroke="#a9a9a9" stroke-width="1.400"><path d="M2 8 V22 H16"/><path d="M5 5 V19 H19"/></g><rect x="8" y="1.500" width="14.500" height="14.500" fill="none" stroke="#a9a9a9" stroke-width="1.500"/><path d="M9.500 14.500 L14 7.500 L17 11.500 L18.500 10 L21 14.500Z" fill="#a9a9a9"/><circle cx="19" cy="5" r="1.300" fill="#a9a9a9"/></svg>
<svg class="abs" style="left:1745.0px;top:494.0px" width="24" height="24" viewBox="0 0 24 24"><path d="M6.500 2 C4 8 2 12 2.500 15.500 C3 18 8 18.500 10.500 17 C9.500 13 9 7 6.500 2Z" fill="#a9a9a9"/><circle cx="19.500" cy="4.500" r="2.900" fill="#a9a9a9"/><circle cx="16.500" cy="16.500" r="5.500" fill="#1e1e1e" stroke="#a9a9a9" stroke-width="1.600"/><path d="M13.600 15.300 A3 3 0 0 1 15.800 13.200" stroke="#a9a9a9" stroke-width="1.200" fill="none"/></svg>
<svg class="abs" style="left:1745.0px;top:534.0px" width="24" height="24" viewBox="0 0 24 24"><circle cx="12" cy="12.500" r="9.300" fill="none" stroke="#c25a66" stroke-width="1.700"/><path d="M4.500 9 Q7 4 12 4.500 Q13 7 10.500 8.500 Q11 11 8 12 Q6 11.500 4.500 9Z M12.500 12.500 Q16 11.500 18.500 14 Q17.500 19 14.500 20 Q13 17 13.500 15.500Z M15.500 5 Q18 6 19 8.500 L16.500 8Z" fill="#c25a66"/><path d="M2 21.500 L5 18.500 M19.500 5.500 L22.500 2.500" stroke="#c25a66" stroke-width="1.500"/></svg>
<svg class="abs" style="left:1746.0px;top:586.0px" width="22" height="22" viewBox="0 0 22 22"><rect x="1" y="1.500" width="20" height="4.600" fill="none" stroke="#e6e6e6" stroke-width="1.500"/><rect x="2.500" y="8" width="17" height="12.500" fill="none" stroke="#e6e6e6" stroke-width="1.500"/><rect x="7.700" y="10.800" width="6.600" height="2.600" rx="1.300" fill="#e6e6e6"/></svg>
<svg class="abs" style="left:1746.0px;top:639.0px" width="22" height="22" viewBox="0 0 22 22"><rect x="5" y="5" width="12" height="12" fill="#d08a52"/><path d="M1 5 V1 H5 M17 1 H21 V5 M21 17 V21 H17 M5 21 H1 V17" stroke="#d08a52" stroke-width="1.300" fill="none"/></svg>
<svg class="abs" style="left:1745.0px;top:678.0px" width="24" height="24" viewBox="0 0 24 24"><path d="M21.500 6 L17.500 10 L14 6.500 L18 2.500 Q14 1 11.500 4 Q9.500 6.500 11 10 L2.500 18.500 Q1 20.500 2.800 22 Q4.500 23.300 6 21.500 L14.500 13 Q18 14.500 20.500 12 Q23 9.500 21.500 6Z" fill="#6d9ff5"/></svg>
<svg class="abs" style="left:1745.0px;top:718.0px" width="24" height="24" viewBox="0 0 24 24"><g stroke="#5a86d8" stroke-width="1.400"><path d="M5 5.500 H20 M5 5.500 V20 M5 5.500 L19.500 20"/></g><circle cx="5" cy="5.500" r="3.500" fill="#5a86d8"/><circle cx="20" cy="5.500" r="2" fill="#5a86d8"/><circle cx="5" cy="20" r="2" fill="#5a86d8"/><circle cx="19.500" cy="20" r="2.800" fill="#5a86d8"/></svg>
<svg class="abs" style="left:1745.0px;top:758.0px" width="24" height="24" viewBox="0 0 24 24"><circle cx="11.500" cy="12.500" r="4.200" fill="#5a86d8"/><path d="M18.500 18.500 A9.600 9.600 0 1 1 16 4" stroke="#5a86d8" stroke-width="1.500" fill="none"/><circle cx="20" cy="5" r="2.600" fill="#5a86d8"/></svg>
<svg class="abs" style="left:1745.0px;top:798.0px" width="24" height="24" viewBox="0 0 24 24"><path d="M3 14 Q3 8 9 6.500 L18.500 2.500 Q22.500 1.500 22 5.500 L19.500 15 Q17.500 21.500 10.500 21.500 Q3 21.500 3 14Z" fill="none" stroke="#5a86d8" stroke-width="1.500"/><circle cx="10.500" cy="14" r="4.600" fill="none" stroke="#5a86d8" stroke-width="1.500"/><circle cx="10.500" cy="14" r="2" fill="#5a86d8"/><circle cx="19" cy="5.500" r="1.300" fill="#5a86d8"/></svg>
<svg class="abs" style="left:1746.0px;top:838.5px" width="22" height="22" viewBox="0 0 22 22"><g stroke="#10c79d" stroke-width="1.500" fill="none"><rect x="1" y="1" width="4.500" height="4.500"/><rect x="16.500" y="1" width="4.500" height="4.500"/><rect x="8.750" y="16.500" width="4.500" height="4.500"/><path d="M5.500 3.200 H16.500 M4.200 5.500 L9.800 16.500 M17.800 5.500 L12.200 16.500"/></g></svg>
<svg class="abs" style="left:1745.0px;top:878.0px" width="24" height="24" viewBox="0 0 24 24"><circle cx="12" cy="12" r="9.800" fill="#c25a66"/><path d="M12 12 V2.200 A9.800 9.800 0 0 1 21.800 12Z" fill="#1e1e1e"/><path d="M12 12 V21.800 A9.800 9.800 0 0 1 2.200 12Z" fill="#1e1e1e" fill-opacity="0"/><path d="M12 12 H21.800 A9.800 9.800 0 0 1 12 21.800Z" fill="#1e1e1e"/><path d="M12 12 H21.800 A9.800 9.800 0 0 1 12 21.800Z" fill="#c25a66" fill-opacity="0"/><path d="M12 2.200 A9.800 9.800 0 0 1 21.800 12 H12Z" fill="#c25a66"/><path d="M12 12 H21.300 A9.300 9.300 0 0 1 12 21.300Z" fill="#1e1e1e"/><circle cx="12" cy="12" r="9.800" fill="none" stroke="#c25a66" stroke-width="1.300"/></svg>
<svg class="abs" style="left:1748.8px;top:941px" width="10" height="7.5" viewBox="0 0 10 7.5"><path d="M1 1 L5.0 5.5 L9 1" stroke="#6a6a6a" stroke-width="1.7" fill="none" stroke-linecap="round" stroke-linejoin="round"/></svg>
<svg class="abs" style="left:1791.0px;top:318.0px" width="22" height="22" viewBox="0 0 22 22"><rect x="5" y="5" width="12" height="12" fill="#e6e6e6"/><path d="M1 5 V1 H5 M17 1 H21 V5 M21 17 V21 H17 M5 21 H1 V17" stroke="#bdbdbd" stroke-width="1.300" fill="none"/></svg>
<span class="t" style="left:1827.5px;top:319.2px;color:#e6e6e6;">立方体</span>
<svg class="abs" style="left:2063.0px;top:316.0px" width="24" height="24" viewBox="0 0 24 24"><g fill="none" stroke="#8e8e8e" stroke-width="1.600" stroke-linejoin="round" stroke-linecap="round"><path d="M14.500 2.500 L21.500 9.500 L19.500 10.500 L16.500 13.500 L15.500 18 L6.500 9 L11 8 L14 5 Z"/><path d="M10.500 13.500 L2.500 21.500"/></g></svg>
<div class="abs" style="left:1788.7px;top:367.5px;width:301.3px;height:28.2px;background:#545454;border-radius:5px;"></div>
<svg class="abs" style="left:1797.0px;top:373.0px" width="17" height="17" viewBox="0 0 17 17"><path d="M8.500 1.500 V15.500 M1.500 8.500 H15.500" stroke="#e6e6e6" stroke-width="1.500"/></svg>
<span class="t" style="left:1910.5px;top:372.3px;color:#e6e6e6;">添加修改器</span>
<div class="abs" style="left:3px;top:1152.5px;width:1724px;height:83.20000000000005px;background:#1d1d1d;border-radius:10px;overflow:hidden">
<div class="abs" style="left:0.0px;top:0.0px;width:1724.0px;height:37.5px;background:#2d2d2d;border-radius:0;"></div>
<div class="abs" style="left:0.0px;top:72.2px;width:1724.0px;height:11.0px;background:#303030;border-radius:0;"></div>
<div class="abs" style="left:0.0px;top:72.2px;width:64.9px;height:11.0px;background:#262626;border-radius:0;"></div>
<div class="abs" style="left:1660.2px;top:72.2px;width:63.8px;height:11.0px;background:#262626;border-radius:0;"></div>
<div class="abs" style="left:19.6px;top:72.20000000000005px;width:1px;height:11px;background:#1c1c1c"></div><div class="abs" style="left:58.0px;top:72.20000000000005px;width:1px;height:11px;background:#1c1c1c"></div><div class="abs" style="left:96.4px;top:72.20000000000005px;width:1px;height:11px;background:#1c1c1c"></div><div class="abs" style="left:134.9px;top:72.20000000000005px;width:1px;height:11px;background:#1c1c1c"></div><div class="abs" style="left:173.3px;top:72.20000000000005px;width:1px;height:11px;background:#1c1c1c"></div><div class="abs" style="left:211.8px;top:72.20000000000005px;width:1px;height:11px;background:#1c1c1c"></div><div class="abs" style="left:250.2px;top:72.20000000000005px;width:1px;height:11px;background:#1c1c1c"></div><div class="abs" style="left:288.6px;top:72.20000000000005px;width:1px;height:11px;background:#1c1c1c"></div><div class="abs" style="left:327.1px;top:72.20000000000005px;width:1px;height:11px;background:#1c1c1c"></div><div class="abs" style="left:365.5px;top:72.20000000000005px;width:1px;height:11px;background:#1c1c1c"></div><div class="abs" style="left:404.0px;top:72.20000000000005px;width:1px;height:11px;background:#1c1c1c"></div><div class="abs" style="left:442.4px;top:72.20000000000005px;width:1px;height:11px;background:#1c1c1c"></div><div class="abs" style="left:480.8px;top:72.20000000000005px;width:1px;height:11px;background:#1c1c1c"></div><div class="abs" style="left:519.3px;top:72.20000000000005px;width:1px;height:11px;background:#1c1c1c"></div><div class="abs" style="left:557.7px;top:72.20000000000005px;width:1px;height:11px;background:#1c1c1c"></div><div class="abs" style="left:596.2px;top:72.20000000000005px;width:1px;height:11px;background:#1c1c1c"></div><div class="abs" style="left:634.6px;top:72.20000000000005px;width:1px;height:11px;background:#1c1c1c"></div><div class="abs" style="left:673.0px;top:72.20000000000005px;width:1px;height:11px;background:#1c1c1c"></div><div class="abs" style="left:711.5px;top:72.20000000000005px;width:1px;height:11px;background:#1c1c1c"></div><div class="abs" style="left:749.9px;top:72.20000000000005px;width:1px;height:11px;background:#1c1c1c"></div><div class="abs" style="left:788.4px;top:72.20000000000005px;width:1px;height:11px;background:#1c1c1c"></div><div class="abs" style="left:826.8px;top:72.20000000000005px;width:1px;height:11px;background:#1c1c1c"></div><div class="abs" style="left:865.2px;top:72.20000000000005px;width:1px;height:11px;background:#1c1c1c"></div><div class="abs" style="left:903.7px;top:72.20000000000005px;width:1px;height:11px;background:#1c1c1c"></div><div class="abs" style="left:942.1px;top:72.20000000000005px;width:1px;height:11px;background:#1c1c1c"></div><div class="abs" style="left:980.6px;top:72.20000000000005px;width:1px;height:11px;background:#1c1c1c"></div><div class="abs" style="left:1019.0px;top:72.20000000000005px;width:1px;height:11px;background:#1c1c1c"></div><div class="abs" style="left:1057.4px;top:72.20000000000005px;width:1px;height:11px;background:#1c1c1c"></div><div class="abs" style="left:1095.9px;top:72.20000000000005px;width:1px;height:11px;background:#1c1c1c"></div><div class="abs" style="left:1134.3px;top:72.20000000000005px;width:1px;height:11px;background:#1c1c1c"></div><div class="abs" style="left:1172.8px;top:72.20000000000005px;width:1px;height:11px;background:#1c1c1c"></div><div class="abs" style="left:1211.2px;top:72.20000000000005px;width:1px;height:11px;background:#1c1c1c"></div><div class="abs" style="left:1249.6px;top:72.20000000000005px;width:1px;height:11px;background:#1c1c1c"></div><div class="abs" style="left:1288.1px;top:72.20000000000005px;width:1px;height:11px;background:#1c1c1c"></div><div class="abs" style="left:1326.5px;top:72.20000000000005px;width:1px;height:11px;background:#1c1c1c"></div><div class="abs" style="left:1365.0px;top:72.20000000000005px;width:1px;height:11px;background:#1c1c1c"></div><div class="abs" style="left:1403.4px;top:72.20000000000005px;width:1px;height:11px;background:#1c1c1c"></div><div class="abs" style="left:1441.8px;top:72.20000000000005px;width:1px;height:11px;background:#1c1c1c"></div><div class="abs" style="left:1480.3px;top:72.20000000000005px;width:1px;height:11px;background:#1c1c1c"></div><div class="abs" style="left:1518.7px;top:72.20000000000005px;width:1px;height:11px;background:#1c1c1c"></div><div class="abs" style="left:1557.2px;top:72.20000000000005px;width:1px;height:11px;background:#1c1c1c"></div><div class="abs" style="left:1595.6px;top:72.20000000000005px;width:1px;height:11px;background:#1c1c1c"></div><div class="abs" style="left:1634.0px;top:72.20000000000005px;width:1px;height:11px;background:#1c1c1c"></div><div class="abs" style="left:1672.5px;top:72.20000000000005px;width:1px;height:11px;background:#1c1c1c"></div><div class="abs" style="left:1710.9px;top:72.20000000000005px;width:1px;height:11px;background:#1c1c1c"></div>
</div>
<div class="abs" style="left:15.6px;top:1158.0px;width:45.2px;height:27.0px;background:#272727;border-radius:6px;border:1px solid #3a3a3a"></div>
<svg class="abs" style="left:21.0px;top:1160.5px" width="24" height="24" viewBox="0 0 24 24"><circle cx="11.500" cy="11.500" r="10.300" fill="#e6e6e6"/><path d="M13.500 5.500 L8.500 11.500 L13.500 17.500" stroke="#272727" stroke-width="2.400" fill="none" stroke-linecap="round" stroke-linejoin="round"/></svg>
<svg class="abs" style="left:46.5px;top:1170px" width="10" height="7.5" viewBox="0 0 10 7.5"><path d="M1 1 L5.0 5.5 L9 1" stroke="#e0e0e0" stroke-width="1.7" fill="none" stroke-linecap="round" stroke-linejoin="round"/></svg>
<span class="t" style="left:79.0px;top:1162.2px;color:#e6e6e6;">视图</span>
<span class="t" style="left:134.6px;top:1162.2px;color:#e6e6e6;">标记</span>
<div class="abs" style="left:187.8px;top:1158.0px;width:69.8px;height:27.0px;background:#272727;border-radius:6px;border:1px solid #3a3a3a"></div>
<span class="t" style="left:198.8px;top:1162.2px;color:#e6e6e6;">回放</span>
<svg class="abs" style="left:243.3px;top:1170px" width="10" height="7.5" viewBox="0 0 10 7.5"><path d="M1 1 L5.0 5.5 L9 1" stroke="#e0e0e0" stroke-width="1.7" fill="none" stroke-linecap="round" stroke-linejoin="round"/></svg>
<div class="abs" style="left:650.5px;top:1158.0px;width:56.9px;height:27.0px;background:#2a2a2a;border-radius:6px;border:1px solid #383838"></div>
<div class="abs" style="left:650.5px;top:1158.0px;width:28.3px;height:27.0px;background:#484848;border-radius:6px 0 0 6px;"></div>
<svg class="abs" style="left:654.0px;top:1161.0px" width="22" height="22" viewBox="0 0 22 22"><circle cx="10.500" cy="10.500" r="6.300" stroke="#d0d0d0" stroke-width="1.500" fill="none"/></svg>
<svg class="abs" style="left:688px;top:1170px" width="10" height="7.5" viewBox="0 0 10 7.5"><path d="M1 1 L5.0 5.5 L9 1" stroke="#555" stroke-width="1.7" fill="none" stroke-linecap="round" stroke-linejoin="round"/></svg>
<div class="abs" style="left:715.7px;top:1158.0px;width:172.1px;height:27.0px;background:#545454;border-radius:6px;"></div>
<div class="abs" style="left:743.9px;top:1158.0px;width:1.0px;height:27.0px;background:#444;border-radius:0;"></div>
<div class="abs" style="left:772.6px;top:1158.0px;width:1.0px;height:27.0px;background:#444;border-radius:0;"></div>
<div class="abs" style="left:801.3px;top:1158.0px;width:1.0px;height:27.0px;background:#444;border-radius:0;"></div>
<div class="abs" style="left:830.0px;top:1158.0px;width:1.0px;height:27.0px;background:#444;border-radius:0;"></div>
<div class="abs" style="left:858.7px;top:1158.0px;width:1.0px;height:27.0px;background:#444;border-radius:0;"></div>
<svg class="abs" style="left:715.7px;top:1158.0px" width="29" height="27" viewBox="0 0 29 27"><path d="M8.500 7 V20" stroke="#e6e6e6" stroke-width="2.200"/><path d="M21 7 V20 L10.500 13.500Z" fill="#e6e6e6"/></svg>
<svg class="abs" style="left:744.4px;top:1158.0px" width="29" height="27" viewBox="0 0 29 27"><path d="M9 7 L15.500 13.500 L9 20 L2.500 13.500Z" fill="#e6e6e6"/><path d="M26 7.500 V19.500 L16.500 13.500Z" fill="#e6e6e6"/></svg>
<svg class="abs" style="left:773.1px;top:1158.0px" width="29" height="27" viewBox="0 0 29 27"><path d="M22 6 V21 L7 13.500Z" fill="#e6e6e6"/></svg>
<svg class="abs" style="left:801.8px;top:1158.0px" width="29" height="27" viewBox="0 0 29 27"><path d="M7 6 V21 L22 13.500Z" fill="#e6e6e6"/></svg>
<svg class="abs" style="left:830.5px;top:1158.0px" width="29" height="27" viewBox="0 0 29 27"><path d="M20 7 L26.500 13.500 L20 20 L13.500 13.500Z" fill="#e6e6e6"/><path d="M3 7.500 V19.500 L12.500 13.500Z" fill="#e6e6e6"/></svg>
<svg class="abs" style="left:859.2px;top:1158.0px" width="29" height="27" viewBox="0 0 29 27"><path d="M20.500 7 V20" stroke="#e6e6e6" stroke-width="2.200"/><path d="M8 7 V20 L18.500 13.500Z" fill="#e6e6e6"/></svg>
<div class="abs" style="left:896.8px;top:1158.0px;width:85.4px;height:27.0px;background:#272727;border-radius:6px;border:1px solid #3a3a3a"></div>
<div class="abs" style="left:896.8px;top:1158.0px;width:56.8px;height:27.0px;background:#545454;border-radius:6px 0 0 6px;"></div>
<div class="abs" style="left:924.7px;top:1158.0px;width:1.0px;height:27.0px;background:#444;border-radius:0;"></div>
<svg class="abs" style="left:896.8px;top:1158.0px" width="29" height="27" viewBox="0 0 29 27"><path d="M15 8 V19.500 L5.500 13.700Z" fill="#e6e6e6"/><path d="M19.500 8 V19.500" stroke="#e6e6e6" stroke-width="3"/></svg>
<svg class="abs" style="left:925.2px;top:1158.0px" width="29" height="27" viewBox="0 0 29 27"><path d="M14 8 V19.500 L23.500 13.700Z" fill="#e6e6e6"/><path d="M9.500 8 V19.500" stroke="#e6e6e6" stroke-width="3"/></svg>
<svg class="abs" style="left:962.7px;top:1170px" width="10" height="7.5" viewBox="0 0 10 7.5"><path d="M1 1 L5.0 5.5 L9 1" stroke="#e0e0e0" stroke-width="1.7" fill="none" stroke-linecap="round" stroke-linejoin="round"/></svg>
<div class="abs" style="left:991.2px;top:1158.0px;width:56.2px;height:27.0px;background:#272727;border-radius:6px;border:1px solid #3a3a3a"></div>
<div class="abs" style="left:991.2px;top:1158.0px;width:27.8px;height:27.0px;background:#484848;border-radius:6px 0 0 6px;"></div>
<svg class="abs" style="left:992.0px;top:1158.0px" width="28" height="27" viewBox="0 0 28 27"><path d="M5.500 19 V12.500 Q5.500 4.500 13.500 4.500 Q21.500 4.500 21.500 12.500 V19 M9.500 19 V12.500 Q9.500 8.500 13.500 8.500 Q17.500 8.500 17.500 12.500 V19" stroke="#b8b8b8" stroke-width="1.400" fill="none"/><path d="M2.500 22.500 H24.500" stroke="#b8b8b8" stroke-width="1.500"/></svg>
<svg class="abs" style="left:1028px;top:1170px" width="10" height="7.5" viewBox="0 0 10 7.5"><path d="M1 1 L5.0 5.5 L9 1" stroke="#e0e0e0" stroke-width="1.7" fill="none" stroke-linecap="round" stroke-linejoin="round"/></svg>
<div class="abs" style="left:1234.6px;top:1158.0px;width:106.4px;height:27.0px;background:#545454;border-radius:6px;"></div>
<span class="t" style="left:1277.0px;top:1162.2px;color:#e6e6e6;letter-spacing:0.6px">77</span>
<div class="abs" style="left:1349.7px;top:1158.0px;width:283.8px;height:27.0px;background:#545454;border-radius:6px;"></div>
<div class="abs" style="left:1377.3px;top:1158.0px;width:1.0px;height:27.0px;background:#444;border-radius:0;"></div>
<div class="abs" style="left:1505.0px;top:1158.0px;width:1.0px;height:27.0px;background:#444;border-radius:0;"></div>
<svg class="abs" style="left:1351.0px;top:1159.0px" width="26" height="26" viewBox="0 0 26 26"><circle cx="12.500" cy="14" r="8.300" stroke="#e6e6e6" stroke-width="1.500" fill="none"/><path d="M12.500 9 V14.500 H16.500" stroke="#e6e6e6" stroke-width="1.500" fill="none"/><path d="M10 2.500 H15 M12.500 2.500 V5.500 M19 6 L21 4" stroke="#e6e6e6" stroke-width="1.500"/></svg>
<span class="t" style="left:1400.8px;top:1162.2px;color:#e6e6e6;">起始</span>
<span class="t" style="left:1474.5px;top:1162.2px;color:#e6e6e6;">1</span>
<span class="t" style="left:1529.8px;top:1162.2px;color:#e6e6e6;">结束</span>
<span class="t" style="left:1580.3px;top:1162.2px;color:#e6e6e6;letter-spacing:0.700px">250</span>
<div class="abs" style="left:1658.0px;top:1158.0px;width:56.6px;height:27.0px;background:#272727;border-radius:6px;border:1px solid #3a3a3a"></div>
<div class="abs" style="left:1658.0px;top:1158.0px;width:27.4px;height:27.0px;background:#4772b3;border-radius:6px 0 0 6px;"></div>
<svg class="abs" style="left:1658.0px;top:1158.0px" width="28" height="27" viewBox="0 0 28 27"><defs><clipPath id="ovc2"><circle cx="16" cy="11.4" r="7.4"/></clipPath></defs><circle cx="10.3" cy="17.1" r="6.5" stroke="#fff" stroke-width="1.6" fill="none"/><circle cx="16" cy="11.4" r="7.4" fill="#fff"/><circle cx="10.3" cy="17.1" r="6.5" stroke="#4772b3" stroke-width="2" fill="none" clip-path="url(#ovc2)"/></svg>
<svg class="abs" style="left:1695px;top:1170px" width="10" height="7.5" viewBox="0 0 10 7.5"><path d="M1 1 L5.0 5.5 L9 1" stroke="#e0e0e0" stroke-width="1.7" fill="none" stroke-linecap="round" stroke-linejoin="round"/></svg>
<span class="t" style="left:31.5px;width:60px;text-align:center;top:1199.0px;color:#b4b4b4;letter-spacing:0.700px">0</span>
<span class="t" style="left:108.4px;width:60px;text-align:center;top:1199.0px;color:#b4b4b4;letter-spacing:0.700px">12</span>
<span class="t" style="left:185.3px;width:60px;text-align:center;top:1199.0px;color:#b4b4b4;letter-spacing:0.700px">24</span>
<span class="t" style="left:262.1px;width:60px;text-align:center;top:1199.0px;color:#b4b4b4;letter-spacing:0.700px">36</span>
<span class="t" style="left:339.0px;width:60px;text-align:center;top:1199.0px;color:#b4b4b4;letter-spacing:0.700px">48</span>
<span class="t" style="left:415.9px;width:60px;text-align:center;top:1199.0px;color:#b4b4b4;letter-spacing:0.700px">60</span>
<span class="t" style="left:492.8px;width:60px;text-align:center;top:1199.0px;color:#b4b4b4;letter-spacing:0.700px">72</span>
<span class="t" style="left:569.7px;width:60px;text-align:center;top:1199.0px;color:#b4b4b4;letter-spacing:0.700px">84</span>
<span class="t" style="left:646.5px;width:60px;text-align:center;top:1199.0px;color:#b4b4b4;letter-spacing:0.700px">96</span>
<span class="t" style="left:723.4px;width:60px;text-align:center;top:1199.0px;color:#b4b4b4;letter-spacing:0.700px">108</span>
<span class="t" style="left:800.3px;width:60px;text-align:center;top:1199.0px;color:#b4b4b4;letter-spacing:0.700px">120</span>
<span class="t" style="left:877.2px;width:60px;text-align:center;top:1199.0px;color:#b4b4b4;letter-spacing:0.700px">132</span>
<span class="t" style="left:954.1px;width:60px;text-align:center;top:1199.0px;color:#b4b4b4;letter-spacing:0.700px">144</span>
<span class="t" style="left:1030.9px;width:60px;text-align:center;top:1199.0px;color:#b4b4b4;letter-spacing:0.700px">156</span>
<span class="t" style="left:1107.8px;width:60px;text-align:center;top:1199.0px;color:#b4b4b4;letter-spacing:0.700px">168</span>
<span class="t" style="left:1184.7px;width:60px;text-align:center;top:1199.0px;color:#b4b4b4;letter-spacing:0.700px">180</span>
<span class="t" style="left:1261.6px;width:60px;text-align:center;top:1199.0px;color:#b4b4b4;letter-spacing:0.700px">192</span>
<span class="t" style="left:1338.5px;width:60px;text-align:center;top:1199.0px;color:#b4b4b4;letter-spacing:0.700px">204</span>
<span class="t" style="left:1415.3px;width:60px;text-align:center;top:1199.0px;color:#b4b4b4;letter-spacing:0.700px">216</span>
<span class="t" style="left:1492.2px;width:60px;text-align:center;top:1199.0px;color:#b4b4b4;letter-spacing:0.700px">228</span>
<span class="t" style="left:1569.1px;width:60px;text-align:center;top:1199.0px;color:#b4b4b4;letter-spacing:0.700px">240</span>
<span class="t" style="left:1646.0px;width:60px;text-align:center;top:1199.0px;color:#b4b4b4;letter-spacing:0.700px">252</span>
<div class="abs" style="left:537.5px;top:1192.5px;width:34.2px;height:29.9px;background:#4772b3;border-radius:5px;"></div>
<svg class="abs" style="left:545.0px;top:1221.5px" width="20" height="14" viewBox="0 0 20 14"><path d="M4 0 H16 L10.800 7 V12.500 H9.200 V7 Z" fill="#4772b3"/></svg>
<span class="t" style="left:524.6px;width:60px;text-align:center;top:1199.0px;color:#fff;letter-spacing:0.700px">77</span>
<div class="abs" style="left:16px;top:1227.500px;width:6px;height:6px;border-radius:50%;background:#222"></div>
<div class="abs" style="left:1706px;top:1227.500px;width:6px;height:6px;border-radius:50%;background:#222"></div>
<div class="abs" style="left:0.0px;top:1238.5px;width:2106.0px;height:32.5px;background:#181818;border-radius:0;"></div>
<svg class="abs" style="left:8.5px;top:1243.5px" width="20" height="24" viewBox="0 0 20 24"><rect x="1.500" y="1.500" width="15.500" height="21" rx="4.500" stroke="#9a9a9a" stroke-width="1.400" fill="none"/><path d="M2 2 H9 V10.500 H2Z" fill="#9a9a9a"/></svg>
<span class="t" style="left:28.3px;top:1245.2px;color:#a8a8a8;">环状选择</span>
<svg class="abs" style="left:111.0px;top:1243.5px" width="20" height="24" viewBox="0 0 20 24"><rect x="1.500" y="1.500" width="15.500" height="21" rx="4.500" stroke="#9a9a9a" stroke-width="1.400" fill="none"/><rect x="6.800" y="3" width="5" height="9" rx="2.200" fill="#9a9a9a"/></svg>
<span class="t" style="left:130.3px;top:1245.2px;color:#a8a8a8;">视图中心对齐鼠标</span>
<span class="t" style="left:2046.5px;top:1245.2px;color:#a0a0a0;letter-spacing:0.600px">5.0.0</span>
<svg class="abs" style="left:0;top:1261px" width="10" height="10" viewBox="0 0 10 10"><path d="M0 2 Q1 9 8 10 H0Z" fill="#7a3fa8"/></svg>
<svg class="abs" style="left:2096px;top:1261px" width="10" height="10" viewBox="0 0 10 10"><path d="M10 2 Q9 9 2 10 H10Z" fill="#7a3fa8"/></svg>
</div>
</body></html>
